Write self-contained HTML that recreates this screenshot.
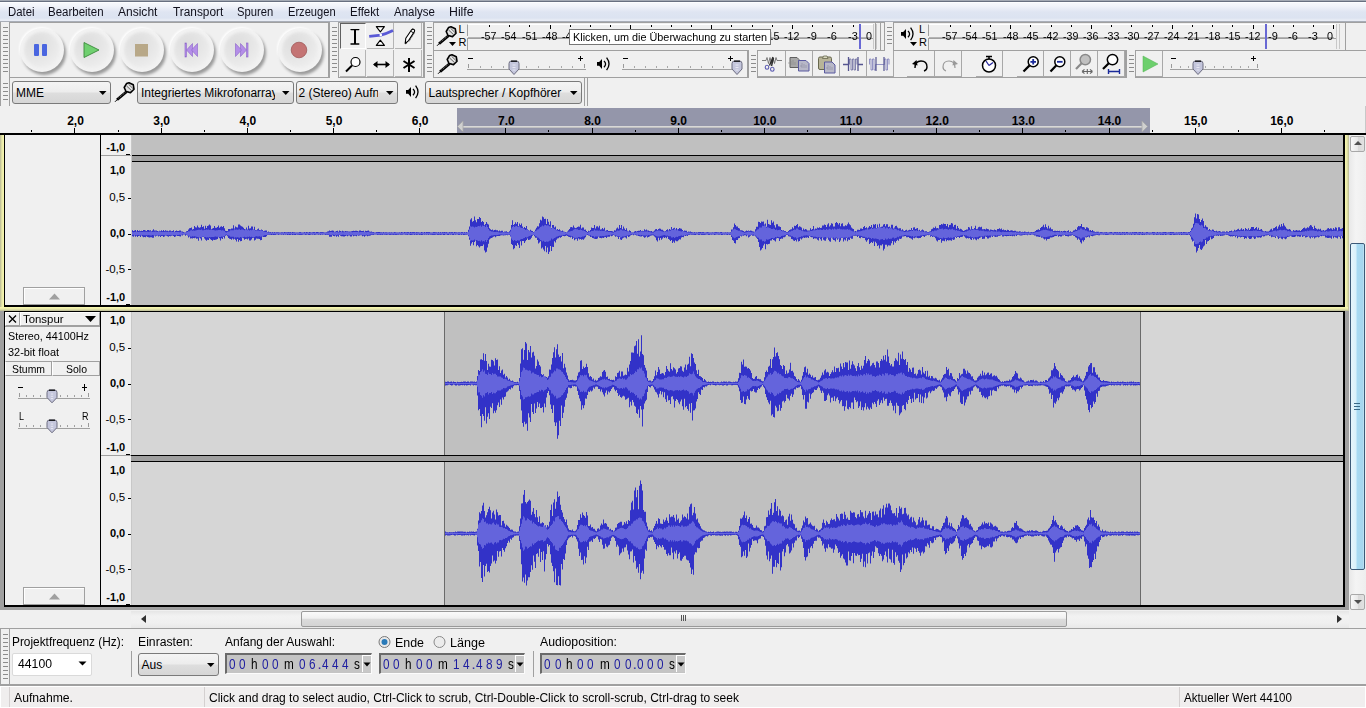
<!DOCTYPE html><html><head><meta charset="utf-8"><style>
html,body{margin:0;padding:0;}
body{width:1366px;height:708px;overflow:hidden;position:relative;background:#f0f0f0;font-family:"Liberation Sans",sans-serif;}
div{position:absolute;box-sizing:border-box;}
.t{white-space:nowrap;line-height:1;transform-origin:0 0;}
svg{position:absolute;}
</style></head><body>
<div style="left:0px;top:0px;width:1366px;height:22px;background:linear-gradient(#fbfcfe 0px,#f1f4fa 6px,#dfe5f2 12px,#dce3f1 18px,#e8ecf5 20px)"></div>
<div style="left:0px;top:0px;width:1366px;height:1px;background:#a4aab4"></div>
<div style="left:0px;top:1px;width:1366px;height:1px;background:#687080"></div>
<div style="left:0px;top:2px;width:1366px;height:1px;background:#fdfeff"></div>
<div style="left:0px;top:21px;width:1366px;height:1px;background:#a9aeb8"></div>
<div class="t" style="left:7.50px;top:5.84px;font-size:12px;color:#10101c;transform:scaleX(0.9459);">Datei</div>
<div class="t" style="left:48.00px;top:5.84px;font-size:12px;color:#10101c;transform:scaleX(0.9579);">Bearbeiten</div>
<div class="t" style="left:118.40px;top:5.84px;font-size:12px;color:#10101c;transform:scaleX(1.0012);">Ansicht</div>
<div class="t" style="left:172.50px;top:5.84px;font-size:12px;color:#10101c;transform:scaleX(0.9881);">Transport</div>
<div class="t" style="left:237.20px;top:5.84px;font-size:12px;color:#10101c;transform:scaleX(0.9355);">Spuren</div>
<div class="t" style="left:288.00px;top:5.84px;font-size:12px;color:#10101c;transform:scaleX(0.9266);">Erzeugen</div>
<div class="t" style="left:350.30px;top:5.84px;font-size:12px;color:#10101c;transform:scaleX(0.9585);">Effekt</div>
<div class="t" style="left:394.20px;top:5.84px;font-size:12px;color:#10101c;transform:scaleX(0.9557);">Analyse</div>
<div class="t" style="left:449.40px;top:5.84px;font-size:12px;color:#10101c;transform:scaleX(1.0247);">Hilfe</div>
<div style="left:0px;top:22px;width:1366px;height:84px;background:#f0f0f0"></div>
<div style="left:0px;top:22px;width:1366px;height:1px;background:#a0a0a0"></div>
<div style="left:0px;top:77px;width:1366px;height:1px;background:#a0a0a0"></div>
<div style="left:0px;top:105.5px;width:1366px;height:1px;background:#a0a0a0"></div>
<div style="left:0px;top:22px;width:10px;height:56px;border-left:1px solid #a0a0a0;border-right:1px solid #a0a0a0;box-sizing:border-box;background:#f0f0f0"></div>
<div style="left:3px;top:27px;width:5px;height:1px;background:#8c8c8c"></div>
<div style="left:3px;top:31px;width:5px;height:1px;background:#8c8c8c"></div>
<div style="left:3px;top:35px;width:5px;height:1px;background:#8c8c8c"></div>
<div style="left:3px;top:39px;width:5px;height:1px;background:#8c8c8c"></div>
<div style="left:3px;top:43px;width:5px;height:1px;background:#8c8c8c"></div>
<div style="left:3px;top:47px;width:5px;height:1px;background:#8c8c8c"></div>
<div style="left:3px;top:51px;width:5px;height:1px;background:#8c8c8c"></div>
<div style="left:3px;top:55px;width:5px;height:1px;background:#8c8c8c"></div>
<div style="left:3px;top:59px;width:5px;height:1px;background:#8c8c8c"></div>
<div style="left:3px;top:63px;width:5px;height:1px;background:#8c8c8c"></div>
<div style="left:3px;top:67px;width:5px;height:1px;background:#8c8c8c"></div>
<div style="left:3px;top:71px;width:5px;height:1px;background:#8c8c8c"></div>
<div style="left:328px;top:22px;width:1px;height:56px;background:#a0a0a0"></div>
<div style="left:19.5px;top:27.5px;width:44px;height:44px;border-radius:50%;background:#f2f2f2;box-shadow:2px 3px 3px rgba(0,0,0,0.36), -1px -1px 2px rgba(255,255,255,0.9);filter:blur(0.7px)"></div>
<div style="left:23.5px;top:31.5px;width:36px;height:36px;border-radius:50%;background:radial-gradient(circle at 35% 30%,#dedede 0,#e6e6e6 45%,#f0f0f0 85%);filter:blur(1px)"></div>
<div style="left:69.5px;top:27.5px;width:44px;height:44px;border-radius:50%;background:#f2f2f2;box-shadow:2px 3px 3px rgba(0,0,0,0.36), -1px -1px 2px rgba(255,255,255,0.9);filter:blur(0.7px)"></div>
<div style="left:73.5px;top:31.5px;width:36px;height:36px;border-radius:50%;background:radial-gradient(circle at 35% 30%,#dedede 0,#e6e6e6 45%,#f0f0f0 85%);filter:blur(1px)"></div>
<div style="left:119.5px;top:27.5px;width:44px;height:44px;border-radius:50%;background:#f2f2f2;box-shadow:2px 3px 3px rgba(0,0,0,0.36), -1px -1px 2px rgba(255,255,255,0.9);filter:blur(0.7px)"></div>
<div style="left:123.5px;top:31.5px;width:36px;height:36px;border-radius:50%;background:radial-gradient(circle at 35% 30%,#dedede 0,#e6e6e6 45%,#f0f0f0 85%);filter:blur(1px)"></div>
<div style="left:169.5px;top:27.5px;width:44px;height:44px;border-radius:50%;background:#f2f2f2;box-shadow:2px 3px 3px rgba(0,0,0,0.36), -1px -1px 2px rgba(255,255,255,0.9);filter:blur(0.7px)"></div>
<div style="left:173.5px;top:31.5px;width:36px;height:36px;border-radius:50%;background:radial-gradient(circle at 35% 30%,#dedede 0,#e6e6e6 45%,#f0f0f0 85%);filter:blur(1px)"></div>
<div style="left:219.5px;top:27.5px;width:44px;height:44px;border-radius:50%;background:#f2f2f2;box-shadow:2px 3px 3px rgba(0,0,0,0.36), -1px -1px 2px rgba(255,255,255,0.9);filter:blur(0.7px)"></div>
<div style="left:223.5px;top:31.5px;width:36px;height:36px;border-radius:50%;background:radial-gradient(circle at 35% 30%,#dedede 0,#e6e6e6 45%,#f0f0f0 85%);filter:blur(1px)"></div>
<div style="left:277.5px;top:27.5px;width:44px;height:44px;border-radius:50%;background:#f2f2f2;box-shadow:2px 3px 3px rgba(0,0,0,0.36), -1px -1px 2px rgba(255,255,255,0.9);filter:blur(0.7px)"></div>
<div style="left:281.5px;top:31.5px;width:36px;height:36px;border-radius:50%;background:radial-gradient(circle at 35% 30%,#dedede 0,#e6e6e6 45%,#f0f0f0 85%);filter:blur(1px)"></div>
<div style="left:34px;top:44px;width:5px;height:12px;background:#4a66e0;border-radius:1px"></div>
<div style="left:42px;top:44px;width:5px;height:12px;background:#4a66e0;border-radius:1px"></div>
<svg style="left:0;top:0" width="330" height="78"><polygon points="84,42.5 99,50 84,57.5" fill="#70d070" stroke="#3a8a3a" stroke-width="0.9"/><rect x="135" y="44" width="13" height="12.5" fill="#b8a888"/><g fill="#b48ee8" stroke="#8a62c8" stroke-width="0.6"><rect x="185" y="43" width="1.4" height="14"/><polygon points="186.5,50 192.5,43.5 192.5,56.5"/><polygon points="191.5,50 197.5,43.5 197.5,56.5"/><rect x="246.6" y="43" width="1.4" height="14"/><polygon points="246.5,50 240.5,43.5 240.5,56.5"/><polygon points="241.5,50 235.5,43.5 235.5,56.5"/></g><circle cx="299" cy="50" r="7.8" fill="#c47474" stroke="#9a5050" stroke-width="0.7"/></svg>
<div style="left:329px;top:22px;width:10px;height:56px;border-left:1px solid #a0a0a0;border-right:1px solid #a0a0a0;box-sizing:border-box;background:#f0f0f0"></div>
<div style="left:332px;top:27px;width:5px;height:1px;background:#8c8c8c"></div>
<div style="left:332px;top:31px;width:5px;height:1px;background:#8c8c8c"></div>
<div style="left:332px;top:35px;width:5px;height:1px;background:#8c8c8c"></div>
<div style="left:332px;top:39px;width:5px;height:1px;background:#8c8c8c"></div>
<div style="left:332px;top:43px;width:5px;height:1px;background:#8c8c8c"></div>
<div style="left:332px;top:47px;width:5px;height:1px;background:#8c8c8c"></div>
<div style="left:332px;top:51px;width:5px;height:1px;background:#8c8c8c"></div>
<div style="left:332px;top:55px;width:5px;height:1px;background:#8c8c8c"></div>
<div style="left:332px;top:59px;width:5px;height:1px;background:#8c8c8c"></div>
<div style="left:332px;top:63px;width:5px;height:1px;background:#8c8c8c"></div>
<div style="left:332px;top:67px;width:5px;height:1px;background:#8c8c8c"></div>
<div style="left:332px;top:71px;width:5px;height:1px;background:#8c8c8c"></div>
<div style="left:423px;top:22px;width:1px;height:56px;background:#a0a0a0"></div>
<div style="left:340px;top:23px;width:26px;height:26px;background:#f0f0f0;border-left:1px solid #606060;border-top:1px solid #606060;border-right:1px solid #fff;border-bottom:1px solid #fff"></div>
<div style="left:340px;top:50px;width:26px;height:27px;background:#f0f0f0;border-right:1px solid #b4b4b4;border-bottom:1px solid #b4b4b4"></div>
<div style="left:367px;top:23px;width:27px;height:26px;background:#f0f0f0;border-right:1px solid #b4b4b4;border-bottom:1px solid #b4b4b4"></div>
<div style="left:367px;top:50px;width:27px;height:27px;background:#f0f0f0;border-right:1px solid #b4b4b4;border-bottom:1px solid #b4b4b4"></div>
<div style="left:395px;top:23px;width:27px;height:26px;background:#f0f0f0;border-right:1px solid #b4b4b4;border-bottom:1px solid #b4b4b4"></div>
<div style="left:395px;top:50px;width:27px;height:27px;background:#f0f0f0;border-right:1px solid #b4b4b4;border-bottom:1px solid #b4b4b4"></div>
<svg style="left:0;top:0" width="430" height="78"><path d="M351,29.6 H358.8 M351,44 H358.8" stroke="#000" stroke-width="1.4" stroke-linecap="round"/><path d="M355,29.6 V44" stroke="#000" stroke-width="2"/><path d="M376.3,26.6 H384.4 L380.35,31.8 z M376.3,45.4 H384.4 L380.35,40.2 z" fill="#fff" stroke="#000" stroke-width="1.1" stroke-linejoin="round"/><path d="M369.2,36.4 L380.8,35.2 Q386,34 393,30.6" stroke="#5a5ad6" stroke-width="2.8" fill="none"/><circle cx="380.8" cy="35" r="1.3" fill="#fff"/><path d="M405.8,44.6 L410.3,37.4 L415,31 L412.5,28.6 L406.8,37.6 L405.2,42.4 z" fill="#000"/><path d="M405.2,43.4 L405.8,38.2 L411.6,29.8 Q412.8,28.4 414.2,29.6 Q415,30.6 414.4,31.6 L408.6,40.6 z" fill="#fff" stroke="#000" stroke-width="1.1" stroke-linejoin="round"/><path d="M410.8,31.2 L413.6,33" stroke="#000" stroke-width="0.9"/><path d="M409.2,41.4 L414.8,32.4" stroke="#555" stroke-width="0.8" stroke-dasharray="1 0.8"/><circle cx="355.5" cy="62" r="4.5" fill="#fff" stroke="#000" stroke-width="1.2"/><path d="M352,65.5 L346,71.5" stroke="#000" stroke-width="2"/><path d="M374,64.5 H389" stroke="#000" stroke-width="1.6"/><path d="M373,64.5 l4.5,-3.5 v7 z M390,64.5 l-4.5,-3.5 v7 z" fill="#000"/><path d="M409,58 V72 M403.5,61 L414.5,68 M414.5,61 L403.5,68" stroke="#000" stroke-width="2"/></svg>
<div style="left:424px;top:22px;width:10px;height:29px;border-left:1px solid #a0a0a0;border-right:1px solid #a0a0a0;box-sizing:border-box;background:#f0f0f0"></div>
<div style="left:427px;top:27px;width:5px;height:1px;background:#8c8c8c"></div>
<div style="left:427px;top:31px;width:5px;height:1px;background:#8c8c8c"></div>
<div style="left:427px;top:35px;width:5px;height:1px;background:#8c8c8c"></div>
<div style="left:427px;top:39px;width:5px;height:1px;background:#8c8c8c"></div>
<div style="left:427px;top:43px;width:5px;height:1px;background:#8c8c8c"></div>
<div style="left:424px;top:50px;width:942px;height:1px;background:#a0a0a0"></div>
<svg style="left:432px;top:22px" width="30" height="28" viewBox="0 0 30 28"><path d="M5,23.8 L7.5,21.3" stroke="#000" stroke-width="1"/><path d="M7,21.8 L16.5,13.8" stroke="#000" stroke-width="2.8"/><path d="M8.5,20 L15.5,14.2" stroke="#c8c8c8" stroke-width="0.7" stroke-dasharray="1 1"/><path d="M19,4.8 L23.3,6.8 L24,11.2 L20.5,14.6 L16,13.5 L14.2,9.5 L16.5,5.6 z" fill="#d8d8d8" stroke="#000" stroke-width="1.6" stroke-linejoin="round"/><path d="M16.6,8 L21.6,12.6 M18.6,6.3 L23,10.6" stroke="#707070" stroke-width="1"/><path d="M16,9.6 L20,13.2 M18,7.3 L22.3,11.4" stroke="#f8f8f8" stroke-width="0.7"/></svg>
<div class="t" style="left:458.50px;top:23.69px;font-size:11px;color:#000;">L</div>
<div class="t" style="left:458.50px;top:37.49px;font-size:11px;color:#000;">R</div>
<svg style="left:449px;top:42px" width="8" height="6"><path d="M0,0 H7 L3.5,4 z" fill="#000"/></svg>
<div style="left:467px;top:24px;width:406px;height:12px;border-left:1px solid #a0a0a0;border-top:1px solid #fff"></div>
<div style="left:467px;top:37.5px;width:406px;height:12px;border-left:1px solid #a0a0a0;border-top:1px solid #a0a0a0"></div>
<div style="left:468px;top:37px;width:403px;height:1px;background:#b4b4b4"></div>
<div style="left:873px;top:25px;width:1px;height:4px;background:#000"></div>
<div style="left:853px;top:25px;width:1px;height:2px;background:#000"></div>
<div style="left:832px;top:25px;width:1px;height:2px;background:#000"></div>
<div style="left:812px;top:25px;width:1px;height:2px;background:#000"></div>
<div style="left:792px;top:25px;width:1px;height:4px;background:#000"></div>
<div style="left:772px;top:25px;width:1px;height:2px;background:#000"></div>
<div style="left:752px;top:25px;width:1px;height:2px;background:#000"></div>
<div style="left:731px;top:25px;width:1px;height:2px;background:#000"></div>
<div style="left:711px;top:25px;width:1px;height:4px;background:#000"></div>
<div style="left:691px;top:25px;width:1px;height:2px;background:#000"></div>
<div style="left:671px;top:25px;width:1px;height:2px;background:#000"></div>
<div style="left:651px;top:25px;width:1px;height:2px;background:#000"></div>
<div style="left:630px;top:25px;width:1px;height:4px;background:#000"></div>
<div style="left:610px;top:25px;width:1px;height:2px;background:#000"></div>
<div style="left:590px;top:25px;width:1px;height:2px;background:#000"></div>
<div style="left:570px;top:25px;width:1px;height:2px;background:#000"></div>
<div style="left:550px;top:25px;width:1px;height:4px;background:#000"></div>
<div style="left:529px;top:25px;width:1px;height:2px;background:#000"></div>
<div style="left:509px;top:25px;width:1px;height:2px;background:#000"></div>
<div style="left:489px;top:25px;width:1px;height:2px;background:#000"></div>
<div class="t" style="left:481.22px;top:31.29px;font-size:11px;color:#000;transform:scaleX(0.9686);">-57</div>
<div class="t" style="left:501.42px;top:31.29px;font-size:11px;color:#000;transform:scaleX(0.9686);">-54</div>
<div class="t" style="left:521.62px;top:31.29px;font-size:11px;color:#000;transform:scaleX(0.9686);">-51</div>
<div class="t" style="left:541.82px;top:31.29px;font-size:11px;color:#000;transform:scaleX(0.9686);">-48</div>
<div class="t" style="left:562.02px;top:31.29px;font-size:11px;color:#000;transform:scaleX(0.9686);">-45</div>
<div class="t" style="left:582.21px;top:31.29px;font-size:11px;color:#000;transform:scaleX(0.9686);">-42</div>
<div class="t" style="left:602.41px;top:31.29px;font-size:11px;color:#000;transform:scaleX(0.9686);">-39</div>
<div class="t" style="left:622.61px;top:31.29px;font-size:11px;color:#000;transform:scaleX(0.9686);">-36</div>
<div class="t" style="left:642.81px;top:31.29px;font-size:11px;color:#000;transform:scaleX(0.9686);">-33</div>
<div class="t" style="left:663.01px;top:31.29px;font-size:11px;color:#000;transform:scaleX(0.9686);">-30</div>
<div class="t" style="left:683.21px;top:31.29px;font-size:11px;color:#000;transform:scaleX(0.9686);">-27</div>
<div class="t" style="left:703.41px;top:31.29px;font-size:11px;color:#000;transform:scaleX(0.9686);">-24</div>
<div class="t" style="left:723.61px;top:31.29px;font-size:11px;color:#000;transform:scaleX(0.9686);">-21</div>
<div class="t" style="left:743.81px;top:31.29px;font-size:11px;color:#000;transform:scaleX(0.9686);">-18</div>
<div class="t" style="left:764.00px;top:31.29px;font-size:11px;color:#000;transform:scaleX(0.9686);">-15</div>
<div class="t" style="left:784.20px;top:31.29px;font-size:11px;color:#000;transform:scaleX(0.9686);">-12</div>
<div class="t" style="left:807.20px;top:31.29px;font-size:11px;color:#000;transform:scaleX(1.0019);">-9</div>
<div class="t" style="left:827.40px;top:31.29px;font-size:11px;color:#000;transform:scaleX(1.0019);">-6</div>
<div class="t" style="left:847.60px;top:31.29px;font-size:11px;color:#000;transform:scaleX(1.0019);">-3</div>
<div class="t" style="left:866.20px;top:31.29px;font-size:11px;color:#000;transform:scaleX(0.9807);">0</div>
<div style="left:859px;top:24px;width:2px;height:25px;background:#6868d4"></div>
<div style="left:873px;top:24px;width:1px;height:25px;background:#c8c8c8"></div>
<div style="left:876px;top:24px;width:1px;height:25px;background:#c8c8c8"></div>
<div style="left:875px;top:22px;width:1px;height:28px;background:#a0a0a0"></div>
<div style="left:880px;top:22px;width:1px;height:28px;background:#a0a0a0"></div>
<div style="left:884px;top:22px;width:10px;height:29px;border-left:1px solid #a0a0a0;border-right:1px solid #a0a0a0;box-sizing:border-box;background:#f0f0f0"></div>
<div style="left:887px;top:27px;width:5px;height:1px;background:#8c8c8c"></div>
<div style="left:887px;top:31px;width:5px;height:1px;background:#8c8c8c"></div>
<div style="left:887px;top:35px;width:5px;height:1px;background:#8c8c8c"></div>
<div style="left:887px;top:39px;width:5px;height:1px;background:#8c8c8c"></div>
<div style="left:887px;top:43px;width:5px;height:1px;background:#8c8c8c"></div>
<svg style="left:899px;top:26.2px" width="18" height="17" viewBox="-2 -3 18 17"><path d="M0,3.1 H2.2 L5,0 V9.9 L2.2,6.8 H0 z" fill="#000"/><path d="M7,2 Q10.2,5 7,8.2 M9.6,-1.3 Q14.4,4.95 9.6,11.2" stroke="#000" stroke-width="1.3" fill="none"/></svg>
<div class="t" style="left:919.00px;top:23.69px;font-size:11px;color:#000;">L</div>
<div class="t" style="left:919.00px;top:37.49px;font-size:11px;color:#000;">R</div>
<svg style="left:910px;top:42px" width="8" height="6"><path d="M0,0 H7 L3.5,4 z" fill="#000"/></svg>
<div style="left:928px;top:24px;width:408px;height:12px;border-left:1px solid #a0a0a0;border-top:1px solid #fff"></div>
<div style="left:928px;top:37.5px;width:408px;height:12px;border-left:1px solid #a0a0a0;border-top:1px solid #a0a0a0"></div>
<div style="left:929px;top:37px;width:405px;height:1px;background:#b4b4b4"></div>
<div style="left:1333px;top:25px;width:1px;height:4px;background:#000"></div>
<div style="left:1313px;top:25px;width:1px;height:2px;background:#000"></div>
<div style="left:1293px;top:25px;width:1px;height:2px;background:#000"></div>
<div style="left:1273px;top:25px;width:1px;height:2px;background:#000"></div>
<div style="left:1253px;top:25px;width:1px;height:4px;background:#000"></div>
<div style="left:1232px;top:25px;width:1px;height:2px;background:#000"></div>
<div style="left:1212px;top:25px;width:1px;height:2px;background:#000"></div>
<div style="left:1192px;top:25px;width:1px;height:2px;background:#000"></div>
<div style="left:1172px;top:25px;width:1px;height:4px;background:#000"></div>
<div style="left:1152px;top:25px;width:1px;height:2px;background:#000"></div>
<div style="left:1131px;top:25px;width:1px;height:2px;background:#000"></div>
<div style="left:1111px;top:25px;width:1px;height:2px;background:#000"></div>
<div style="left:1091px;top:25px;width:1px;height:4px;background:#000"></div>
<div style="left:1071px;top:25px;width:1px;height:2px;background:#000"></div>
<div style="left:1051px;top:25px;width:1px;height:2px;background:#000"></div>
<div style="left:1030px;top:25px;width:1px;height:2px;background:#000"></div>
<div style="left:1010px;top:25px;width:1px;height:4px;background:#000"></div>
<div style="left:990px;top:25px;width:1px;height:2px;background:#000"></div>
<div style="left:970px;top:25px;width:1px;height:2px;background:#000"></div>
<div style="left:950px;top:25px;width:1px;height:2px;background:#000"></div>
<div class="t" style="left:941.92px;top:31.29px;font-size:11px;color:#000;transform:scaleX(0.9686);">-57</div>
<div class="t" style="left:962.12px;top:31.29px;font-size:11px;color:#000;transform:scaleX(0.9686);">-54</div>
<div class="t" style="left:982.32px;top:31.29px;font-size:11px;color:#000;transform:scaleX(0.9686);">-51</div>
<div class="t" style="left:1002.52px;top:31.29px;font-size:11px;color:#000;transform:scaleX(0.9686);">-48</div>
<div class="t" style="left:1022.72px;top:31.29px;font-size:11px;color:#000;transform:scaleX(0.9686);">-45</div>
<div class="t" style="left:1042.91px;top:31.29px;font-size:11px;color:#000;transform:scaleX(0.9686);">-42</div>
<div class="t" style="left:1063.11px;top:31.29px;font-size:11px;color:#000;transform:scaleX(0.9686);">-39</div>
<div class="t" style="left:1083.31px;top:31.29px;font-size:11px;color:#000;transform:scaleX(0.9686);">-36</div>
<div class="t" style="left:1103.51px;top:31.29px;font-size:11px;color:#000;transform:scaleX(0.9686);">-33</div>
<div class="t" style="left:1123.71px;top:31.29px;font-size:11px;color:#000;transform:scaleX(0.9686);">-30</div>
<div class="t" style="left:1143.91px;top:31.29px;font-size:11px;color:#000;transform:scaleX(0.9686);">-27</div>
<div class="t" style="left:1164.11px;top:31.29px;font-size:11px;color:#000;transform:scaleX(0.9686);">-24</div>
<div class="t" style="left:1184.31px;top:31.29px;font-size:11px;color:#000;transform:scaleX(0.9686);">-21</div>
<div class="t" style="left:1204.51px;top:31.29px;font-size:11px;color:#000;transform:scaleX(0.9686);">-18</div>
<div class="t" style="left:1224.71px;top:31.29px;font-size:11px;color:#000;transform:scaleX(0.9686);">-15</div>
<div class="t" style="left:1244.90px;top:31.29px;font-size:11px;color:#000;transform:scaleX(0.9686);">-12</div>
<div class="t" style="left:1267.90px;top:31.29px;font-size:11px;color:#000;transform:scaleX(1.0019);">-9</div>
<div class="t" style="left:1288.10px;top:31.29px;font-size:11px;color:#000;transform:scaleX(1.0019);">-6</div>
<div class="t" style="left:1308.30px;top:31.29px;font-size:11px;color:#000;transform:scaleX(1.0019);">-3</div>
<div class="t" style="left:1326.90px;top:31.29px;font-size:11px;color:#000;transform:scaleX(0.9807);">0</div>
<div style="left:1265px;top:24px;width:2px;height:25px;background:#6868d4"></div>
<div style="left:1336px;top:24px;width:1px;height:25px;background:#c8c8c8"></div>
<div style="left:1339px;top:24px;width:1px;height:25px;background:#c8c8c8"></div>
<div style="left:1345px;top:22px;width:1px;height:28px;background:#a0a0a0"></div>
<div style="left:424px;top:50px;width:10px;height:28px;border-left:1px solid #a0a0a0;border-right:1px solid #a0a0a0;box-sizing:border-box;background:#f0f0f0"></div>
<div style="left:427px;top:55px;width:5px;height:1px;background:#8c8c8c"></div>
<div style="left:427px;top:59px;width:5px;height:1px;background:#8c8c8c"></div>
<div style="left:427px;top:63px;width:5px;height:1px;background:#8c8c8c"></div>
<div style="left:427px;top:67px;width:5px;height:1px;background:#8c8c8c"></div>
<div style="left:427px;top:71px;width:5px;height:1px;background:#8c8c8c"></div>
<svg style="left:433px;top:50px" width="30" height="28" viewBox="0 0 30 28"><path d="M5,23.8 L7.5,21.3" stroke="#000" stroke-width="1"/><path d="M7,21.8 L16.5,13.8" stroke="#000" stroke-width="2.8"/><path d="M8.5,20 L15.5,14.2" stroke="#c8c8c8" stroke-width="0.7" stroke-dasharray="1 1"/><path d="M19,4.8 L23.3,6.8 L24,11.2 L20.5,14.6 L16,13.5 L14.2,9.5 L16.5,5.6 z" fill="#d8d8d8" stroke="#000" stroke-width="1.6" stroke-linejoin="round"/><path d="M16.6,8 L21.6,12.6 M18.6,6.3 L23,10.6" stroke="#707070" stroke-width="1"/><path d="M16,9.6 L20,13.2 M18,7.3 L22.3,11.4" stroke="#f8f8f8" stroke-width="0.7"/></svg>
<div style="left:468px;top:58px;width:5px;height:1px;background:#000"></div>
<div style="left:578px;top:58px;width:5px;height:1px;background:#000"></div>
<div style="left:580px;top:56px;width:1px;height:5px;background:#000"></div>
<div style="left:467px;top:69px;width:119px;height:1.2px;background:#a0a0a0"></div>
<div style="left:468px;top:64px;width:1px;height:4px;background:#9a9a9a"></div>
<div style="left:480px;top:66px;width:1px;height:2px;background:#a8a8a8"></div>
<div style="left:491px;top:66px;width:1px;height:2px;background:#a8a8a8"></div>
<div style="left:503px;top:66px;width:1px;height:2px;background:#a8a8a8"></div>
<div style="left:514px;top:66px;width:1px;height:2px;background:#a8a8a8"></div>
<div style="left:526px;top:66px;width:1px;height:2px;background:#a8a8a8"></div>
<div style="left:538px;top:66px;width:1px;height:2px;background:#a8a8a8"></div>
<div style="left:549px;top:66px;width:1px;height:2px;background:#a8a8a8"></div>
<div style="left:561px;top:66px;width:1px;height:2px;background:#a8a8a8"></div>
<div style="left:572px;top:66px;width:1px;height:2px;background:#a8a8a8"></div>
<div style="left:584px;top:64px;width:1px;height:4px;background:#9a9a9a"></div>
<svg style="left:507.79999999999995px;top:60px" width="12" height="16" viewBox="0 0 12 16"><path d="M1,3.5 Q1,1 3.5,1 H8.5 Q11,1 11,3.5 V9 L6,14.5 L1,9 z" fill="#c4c6dc" stroke="#6c6c80" stroke-width="1"/><path d="M3,1.2 H9" stroke="#000" stroke-width="1.2"/><path d="M4.5,5 h3 M4.5,7.5 h3 M4.5,10 h3" stroke="#f0f0f8" stroke-width="0.8"/></svg>
<svg style="left:594.6px;top:56px" width="18" height="17" viewBox="-2 -3 18 17"><path d="M0,3.1 H2.2 L5,0 V9.9 L2.2,6.8 H0 z" fill="#000"/><path d="M7,2 Q10.2,5 7,8.2 M9.6,-1.3 Q14.4,4.95 9.6,11.2" stroke="#000" stroke-width="1.3" fill="none"/></svg>
<div style="left:623px;top:58px;width:5px;height:1px;background:#000"></div>
<div style="left:728px;top:58px;width:5px;height:1px;background:#000"></div>
<div style="left:730px;top:56px;width:1px;height:5px;background:#000"></div>
<div style="left:622px;top:69px;width:114px;height:1.2px;background:#a0a0a0"></div>
<div style="left:623px;top:64px;width:1px;height:4px;background:#9a9a9a"></div>
<div style="left:634px;top:66px;width:1px;height:2px;background:#a8a8a8"></div>
<div style="left:645px;top:66px;width:1px;height:2px;background:#a8a8a8"></div>
<div style="left:656px;top:66px;width:1px;height:2px;background:#a8a8a8"></div>
<div style="left:667px;top:66px;width:1px;height:2px;background:#a8a8a8"></div>
<div style="left:678px;top:66px;width:1px;height:2px;background:#a8a8a8"></div>
<div style="left:690px;top:66px;width:1px;height:2px;background:#a8a8a8"></div>
<div style="left:701px;top:66px;width:1px;height:2px;background:#a8a8a8"></div>
<div style="left:712px;top:66px;width:1px;height:2px;background:#a8a8a8"></div>
<div style="left:723px;top:66px;width:1px;height:2px;background:#a8a8a8"></div>
<div style="left:734px;top:64px;width:1px;height:4px;background:#9a9a9a"></div>
<svg style="left:731px;top:60px" width="12" height="16" viewBox="0 0 12 16"><path d="M1,3.5 Q1,1 3.5,1 H8.5 Q11,1 11,3.5 V9 L6,14.5 L1,9 z" fill="#c4c6dc" stroke="#6c6c80" stroke-width="1"/><path d="M3,1.2 H9" stroke="#000" stroke-width="1.2"/><path d="M4.5,5 h3 M4.5,7.5 h3 M4.5,10 h3" stroke="#f0f0f8" stroke-width="0.8"/></svg>
<div style="left:747px;top:50px;width:1px;height:28px;background:#a0a0a0"></div>
<div style="left:748px;top:50px;width:10px;height:28px;border-left:1px solid #a0a0a0;border-right:1px solid #a0a0a0;box-sizing:border-box;background:#f0f0f0"></div>
<div style="left:751px;top:55px;width:5px;height:1px;background:#8c8c8c"></div>
<div style="left:751px;top:59px;width:5px;height:1px;background:#8c8c8c"></div>
<div style="left:751px;top:63px;width:5px;height:1px;background:#8c8c8c"></div>
<div style="left:751px;top:67px;width:5px;height:1px;background:#8c8c8c"></div>
<div style="left:751px;top:71px;width:5px;height:1px;background:#8c8c8c"></div>
<div style="left:758px;top:51px;width:28px;height:26px;background:#f0f0f0;border-right:1px solid #a8a8a8;border-bottom:1px solid #a8a8a8"></div>
<div style="left:786px;top:51px;width:27px;height:26px;background:#f0f0f0;border-right:1px solid #a8a8a8;border-bottom:1px solid #a8a8a8"></div>
<div style="left:813px;top:51px;width:27px;height:26px;background:#f0f0f0;border-right:1px solid #a8a8a8;border-bottom:1px solid #a8a8a8"></div>
<div style="left:840px;top:51px;width:27px;height:26px;background:#f0f0f0;border-right:1px solid #a8a8a8;border-bottom:1px solid #a8a8a8"></div>
<div style="left:867px;top:51px;width:27px;height:26px;background:#f0f0f0;border-right:1px solid #a8a8a8;border-bottom:1px solid #a8a8a8"></div>
<div style="left:907px;top:51px;width:28px;height:26px;background:#f0f0f0;border-right:1px solid #a8a8a8;border-bottom:1px solid #a8a8a8"></div>
<div style="left:935px;top:51px;width:27px;height:26px;background:#f0f0f0;border-right:1px solid #a8a8a8;border-bottom:1px solid #a8a8a8"></div>
<div style="left:976px;top:51px;width:27px;height:26px;background:#f0f0f0;border-right:1px solid #a8a8a8;border-bottom:1px solid #a8a8a8"></div>
<div style="left:1017px;top:51px;width:27px;height:26px;background:#f0f0f0;border-right:1px solid #a8a8a8;border-bottom:1px solid #a8a8a8"></div>
<div style="left:1044px;top:51px;width:27px;height:26px;background:#f0f0f0;border-right:1px solid #a8a8a8;border-bottom:1px solid #a8a8a8"></div>
<div style="left:1071px;top:51px;width:27px;height:26px;background:#f0f0f0;border-right:1px solid #a8a8a8;border-bottom:1px solid #a8a8a8"></div>
<div style="left:1098px;top:51px;width:27px;height:26px;background:#f0f0f0;border-right:1px solid #a8a8a8;border-bottom:1px solid #a8a8a8"></div>
<div style="left:1125px;top:50px;width:1px;height:28px;background:#a0a0a0"></div>
<svg style="left:0;top:0" width="1366" height="80"><path d="M762,60.5 h4 l1,-3 l1.5,6 l1.5,-6 l1.5,6 l1.5,-6 l1.5,6 l1.5,-6 l1,3 h5" stroke="#606060" stroke-width="0.8" fill="none"/><path d="M773,57 L769.5,65.5 M773.5,58 L771.5,66" stroke="#303030" stroke-width="1.4"/><ellipse cx="767" cy="67.3" rx="1.8" ry="2" fill="none" stroke="#5a5ab0" stroke-width="1.1"/><ellipse cx="772.3" cy="69.3" rx="1.8" ry="2" fill="none" stroke="#5a5ab0" stroke-width="1.1"/><path d="M790,57.5 H797 L799,59.5 V67.5 H790 z" fill="#a8a8a8" stroke="#606060" stroke-width="1"/><path d="M788,63 h3 M791,61 v4 M793,60 v5 M795,62 v3" stroke="#888" stroke-width="0.6"/><path d="M798.5,60.5 H806 L809,63.5 V71 H798.5 z" fill="#b8b8c8" stroke="#5a5aa0" stroke-width="1"/><path d="M800,66 h2 M802,63 v5 M804,64 v4 M806,65 v3" stroke="#8a8aa0" stroke-width="0.6"/><rect x="818.5" y="57" width="13" height="12.5" rx="1.5" fill="#b8b498" stroke="#68684e" stroke-width="1"/><path d="M822.5,58.5 L823.5,56 H827 L828,58.5 z" fill="#d8d8c0" stroke="#68684e" stroke-width="0.8"/><path d="M824.5,62 H832 L835,65 V73 H824.5 z" fill="#b8b8c8" stroke="#5a5aa0" stroke-width="1"/><path d="M826,68 h2 M828,65 v5 M830,66 v4 M832,67 v3" stroke="#8a8aa0" stroke-width="0.6"/><path d="M843,64.5 h5 M858,64.5 h5 M848.5,57 v14 M858,57 v14" stroke="#555590" stroke-width="1.3" fill="none"/><path d="M849.5,64.5 V59 H851 V70 H852.5 V59 H854 V70 H855.5 V59 H857 V64.5" stroke="#555590" stroke-width="0.7" fill="none"/><path d="M869.5,64.5 V59 H871 V70 H872.5 V59 H874 V70 H875.5 V64.5 H884.5 V59 H886 V70 H887.5 V59 H889 V64.5" stroke="#6a6ab0" stroke-width="0.7" fill="none"/><path d="M876,57 v14 M884,57 v14" stroke="#555590" stroke-width="1.2"/><path d="M915,68 q0,-7 6,-7 q6,0 6,6 q0,3 -3,4" stroke="#000" stroke-width="1.4" fill="none"/><path d="M912,64 l4.5,-4 l1,5.5 z" fill="#000"/><path d="M955,68 q0,-7 -6,-7 q-6,0 -6,6 q0,3 3,4" stroke="#999" stroke-width="1.2" fill="none"/><path d="M958,64 l-4.5,-4 l-1,5.5 z" fill="#999"/><circle cx="989" cy="65.5" r="6.5" fill="#fff" stroke="#000" stroke-width="1.5"/><path d="M986,56.5 h6 M989,56.5 v2.5" stroke="#000" stroke-width="1.5"/><path d="M989,65.5 L986,61 M989,65.5 L993,62.5" stroke="#2a2aa0" stroke-width="1.3"/><circle cx="1033.2" cy="61.8" r="5" fill="#fff" stroke="#000" stroke-width="1.5"/><path d="M1029.6,65.4 L1023.5,71.5" stroke="#000" stroke-width="2.2"/><path d="M1030.4,61.8 h5.6 M1033.2,59 v5.6" stroke="#1a2a9a" stroke-width="1.8"/><circle cx="1059.8" cy="61.8" r="5" fill="#fff" stroke="#000" stroke-width="1.5"/><path d="M1056.2,65.4 L1050.5,71.5" stroke="#000" stroke-width="2.2"/><path d="M1057,61.8 h5.6" stroke="#1a2a9a" stroke-width="1.8"/><circle cx="1085.3" cy="59.6" r="5.2" fill="#c0c0c0" stroke="#888" stroke-width="1.5"/><path d="M1081.6,63.3 L1076,69" stroke="#8a8a8a" stroke-width="2.2"/><path d="M1082,71.5 h10.5 M1082,71.5 l2.5,-2.2 M1082,71.5 l2.5,2.2 M1092.5,71.5 l-2.5,-2.2 M1092.5,71.5 l-2.5,2.2 M1087.3,69 v5" stroke="#666" stroke-width="1.1"/><circle cx="1112.5" cy="59.6" r="5.2" fill="#fff" stroke="#000" stroke-width="1.5"/><path d="M1108.8,63.3 L1103,69" stroke="#000" stroke-width="2.2"/><path d="M1108.5,71.5 h11 M1108.5,69 v5 M1119.5,69 v5" stroke="#1a2a9a" stroke-width="1.4"/><polygon points="1143,56 1158,64 1143,72" fill="#6ccf6c" stroke="#50b050" stroke-width="0.5"/></svg>
<div style="left:1126px;top:50px;width:10px;height:28px;border-left:1px solid #a0a0a0;border-right:1px solid #a0a0a0;box-sizing:border-box;background:#f0f0f0"></div>
<div style="left:1129px;top:55px;width:5px;height:1px;background:#8c8c8c"></div>
<div style="left:1129px;top:59px;width:5px;height:1px;background:#8c8c8c"></div>
<div style="left:1129px;top:63px;width:5px;height:1px;background:#8c8c8c"></div>
<div style="left:1129px;top:67px;width:5px;height:1px;background:#8c8c8c"></div>
<div style="left:1129px;top:71px;width:5px;height:1px;background:#8c8c8c"></div>
<div style="left:1136px;top:51px;width:27px;height:26px;background:#f0f0f0;border-right:1px solid #a8a8a8;border-bottom:1px solid #a8a8a8"></div>
<svg style="left:0;top:0" width="1366" height="80"><polygon points="1143,56 1158,64 1143,72" fill="#6ccf6c" stroke="#50b050" stroke-width="0.5"/></svg>
<div style="left:1171px;top:58px;width:5px;height:1px;background:#000"></div>
<div style="left:1251px;top:58px;width:5px;height:1px;background:#000"></div>
<div style="left:1253px;top:56px;width:1px;height:5px;background:#000"></div>
<div style="left:1170px;top:69px;width:89px;height:1.2px;background:#a0a0a0"></div>
<div style="left:1171px;top:64px;width:1px;height:4px;background:#9a9a9a"></div>
<div style="left:1180px;top:66px;width:1px;height:2px;background:#a8a8a8"></div>
<div style="left:1188px;top:66px;width:1px;height:2px;background:#a8a8a8"></div>
<div style="left:1197px;top:66px;width:1px;height:2px;background:#a8a8a8"></div>
<div style="left:1205px;top:66px;width:1px;height:2px;background:#a8a8a8"></div>
<div style="left:1214px;top:66px;width:1px;height:2px;background:#a8a8a8"></div>
<div style="left:1223px;top:66px;width:1px;height:2px;background:#a8a8a8"></div>
<div style="left:1231px;top:66px;width:1px;height:2px;background:#a8a8a8"></div>
<div style="left:1240px;top:66px;width:1px;height:2px;background:#a8a8a8"></div>
<div style="left:1248px;top:66px;width:1px;height:2px;background:#a8a8a8"></div>
<div style="left:1257px;top:64px;width:1px;height:4px;background:#9a9a9a"></div>
<svg style="left:1192px;top:60px" width="12" height="16" viewBox="0 0 12 16"><path d="M1,3.5 Q1,1 3.5,1 H8.5 Q11,1 11,3.5 V9 L6,14.5 L1,9 z" fill="#c4c6dc" stroke="#6c6c80" stroke-width="1"/><path d="M3,1.2 H9" stroke="#000" stroke-width="1.2"/><path d="M4.5,5 h3 M4.5,7.5 h3 M4.5,10 h3" stroke="#f0f0f8" stroke-width="0.8"/></svg>
<div style="left:0px;top:78px;width:10px;height:28px;border-left:1px solid #a0a0a0;border-right:1px solid #a0a0a0;box-sizing:border-box;background:#f0f0f0"></div>
<div style="left:3px;top:83px;width:5px;height:1px;background:#8c8c8c"></div>
<div style="left:3px;top:87px;width:5px;height:1px;background:#8c8c8c"></div>
<div style="left:3px;top:91px;width:5px;height:1px;background:#8c8c8c"></div>
<div style="left:3px;top:95px;width:5px;height:1px;background:#8c8c8c"></div>
<div style="left:3px;top:99px;width:5px;height:1px;background:#8c8c8c"></div>
<div style="left:587px;top:78px;width:1px;height:28px;background:#a0a0a0"></div>
<div style="left:584px;top:78px;width:1px;height:28px;background:#a0a0a0"></div>
<div style="left:12px;top:81px;width:99px;height:23px;border:1px solid #7a7a7a;border-radius:3px;background:linear-gradient(#f4f4f4 0,#ededed 45%,#dddddd 55%,#d6d6d6 100%)"></div>
<div class="t" style="left:16.00px;top:86.54px;font-size:12px;color:#000;">MME</div>
<svg style="left:99px;top:91.0px" width="9" height="6"><path d="M0,0 H7.5 L3.75,4 z" fill="#000"/></svg>
<svg style="left:110px;top:78.4px" width="30" height="28" viewBox="0 0 30 28"><path d="M5,23.8 L7.5,21.3" stroke="#000" stroke-width="1"/><path d="M7,21.8 L16.5,13.8" stroke="#000" stroke-width="2.8"/><path d="M8.5,20 L15.5,14.2" stroke="#c8c8c8" stroke-width="0.7" stroke-dasharray="1 1"/><path d="M19,4.8 L23.3,6.8 L24,11.2 L20.5,14.6 L16,13.5 L14.2,9.5 L16.5,5.6 z" fill="#d8d8d8" stroke="#000" stroke-width="1.6" stroke-linejoin="round"/><path d="M16.6,8 L21.6,12.6 M18.6,6.3 L23,10.6" stroke="#707070" stroke-width="1"/><path d="M16,9.6 L20,13.2 M18,7.3 L22.3,11.4" stroke="#f8f8f8" stroke-width="0.7"/></svg>
<div style="left:137px;top:81px;width:157px;height:23px;border:1px solid #7a7a7a;border-radius:3px;background:linear-gradient(#f4f4f4 0,#ededed 45%,#dddddd 55%,#d6d6d6 100%)"></div>
<div style="left:140px;top:82px;width:135px;height:21px;overflow:hidden">
<div class="t" style="left:1.00px;top:4.54px;font-size:12px;color:#000;">Integriertes Mikrofonarray</div>
</div>
<svg style="left:282px;top:91.0px" width="9" height="6"><path d="M0,0 H7.5 L3.75,4 z" fill="#000"/></svg>
<div style="left:295.5px;top:81px;width:102.5px;height:23px;border:1px solid #7a7a7a;border-radius:3px;background:linear-gradient(#f4f4f4 0,#ededed 45%,#dddddd 55%,#d6d6d6 100%)"></div>
<div style="left:297.5px;top:82px;width:80.5px;height:21px;overflow:hidden">
<div class="t" style="left:1.00px;top:4.54px;font-size:12px;color:#000;">2 (Stereo) Aufn</div>
</div>
<svg style="left:386px;top:91.0px" width="9" height="6"><path d="M0,0 H7.5 L3.75,4 z" fill="#000"/></svg>
<svg style="left:404px;top:84.1px" width="18" height="17" viewBox="-2 -3 18 17"><path d="M0,3.1 H2.2 L5,0 V9.9 L2.2,6.8 H0 z" fill="#000"/><path d="M7,2 Q10.2,5 7,8.2 M9.6,-1.3 Q14.4,4.95 9.6,11.2" stroke="#000" stroke-width="1.3" fill="none"/></svg>
<div style="left:424.5px;top:81px;width:157.5px;height:23px;border:1px solid #7a7a7a;border-radius:3px;background:linear-gradient(#f4f4f4 0,#ededed 45%,#dddddd 55%,#d6d6d6 100%)"></div>
<div class="t" style="left:428.50px;top:86.54px;font-size:12px;color:#000;">Lautsprecher / Kopfhörer</div>
<svg style="left:570px;top:91.0px" width="9" height="6"><path d="M0,0 H7.5 L3.75,4 z" fill="#000"/></svg>
<div style="left:0px;top:106px;width:1366px;height:28px;background:#f0f0f0"></div>
<div style="left:457px;top:108px;width:693px;height:26px;background:#9496aa"></div>
<div style="left:31px;top:130px;width:1px;height:2px;background:#000"></div>
<div style="left:74px;top:128px;width:1px;height:5px;background:#000"></div>
<div class="t" style="left:67.16px;top:114.84px;font-size:12px;font-weight:bold;color:#000;">2,0</div>
<div style="left:118px;top:130px;width:1px;height:2px;background:#000"></div>
<div style="left:161px;top:128px;width:1px;height:5px;background:#000"></div>
<div class="t" style="left:153.33px;top:114.84px;font-size:12px;font-weight:bold;color:#000;">3,0</div>
<div style="left:204px;top:130px;width:1px;height:2px;background:#000"></div>
<div style="left:247px;top:128px;width:1px;height:5px;background:#000"></div>
<div class="t" style="left:239.50px;top:114.84px;font-size:12px;font-weight:bold;color:#000;">4,0</div>
<div style="left:290px;top:130px;width:1px;height:2px;background:#000"></div>
<div style="left:333px;top:128px;width:1px;height:5px;background:#000"></div>
<div class="t" style="left:325.67px;top:114.84px;font-size:12px;font-weight:bold;color:#000;">5,0</div>
<div style="left:376px;top:130px;width:1px;height:2px;background:#000"></div>
<div style="left:419px;top:128px;width:1px;height:5px;background:#000"></div>
<div class="t" style="left:411.84px;top:114.84px;font-size:12px;font-weight:bold;color:#000;">6,0</div>
<div style="left:462px;top:130px;width:1px;height:2px;background:#000"></div>
<div style="left:505px;top:128px;width:1px;height:5px;background:#000"></div>
<div class="t" style="left:498.01px;top:114.84px;font-size:12px;font-weight:bold;color:#000;">7.0</div>
<div style="left:548px;top:130px;width:1px;height:2px;background:#000"></div>
<div style="left:592px;top:128px;width:1px;height:5px;background:#000"></div>
<div class="t" style="left:584.18px;top:114.84px;font-size:12px;font-weight:bold;color:#000;">8.0</div>
<div style="left:635px;top:130px;width:1px;height:2px;background:#000"></div>
<div style="left:678px;top:128px;width:1px;height:5px;background:#000"></div>
<div class="t" style="left:670.35px;top:114.84px;font-size:12px;font-weight:bold;color:#000;">9.0</div>
<div style="left:721px;top:130px;width:1px;height:2px;background:#000"></div>
<div style="left:764px;top:128px;width:1px;height:5px;background:#000"></div>
<div class="t" style="left:753.18px;top:114.84px;font-size:12px;font-weight:bold;color:#000;">10.0</div>
<div style="left:807px;top:130px;width:1px;height:2px;background:#000"></div>
<div style="left:850px;top:128px;width:1px;height:5px;background:#000"></div>
<div class="t" style="left:839.68px;top:114.84px;font-size:12px;font-weight:bold;color:#000;">11.0</div>
<div style="left:893px;top:130px;width:1px;height:2px;background:#000"></div>
<div style="left:936px;top:128px;width:1px;height:5px;background:#000"></div>
<div class="t" style="left:925.52px;top:114.84px;font-size:12px;font-weight:bold;color:#000;">12.0</div>
<div style="left:979px;top:130px;width:1px;height:2px;background:#000"></div>
<div style="left:1022px;top:128px;width:1px;height:5px;background:#000"></div>
<div class="t" style="left:1011.69px;top:114.84px;font-size:12px;font-weight:bold;color:#000;">13.0</div>
<div style="left:1065px;top:130px;width:1px;height:2px;background:#000"></div>
<div style="left:1109px;top:128px;width:1px;height:5px;background:#000"></div>
<div class="t" style="left:1097.86px;top:114.84px;font-size:12px;font-weight:bold;color:#000;">14.0</div>
<div style="left:1152px;top:130px;width:1px;height:2px;background:#000"></div>
<div style="left:1195px;top:128px;width:1px;height:5px;background:#000"></div>
<div class="t" style="left:1184.03px;top:114.84px;font-size:12px;font-weight:bold;color:#000;">15,0</div>
<div style="left:1238px;top:130px;width:1px;height:2px;background:#000"></div>
<div style="left:1281px;top:128px;width:1px;height:5px;background:#000"></div>
<div class="t" style="left:1270.20px;top:114.84px;font-size:12px;font-weight:bold;color:#000;">16,0</div>
<div style="left:1324px;top:130px;width:1px;height:2px;background:#000"></div>
<div style="left:462px;top:126px;width:683px;height:2px;background:#c0c0c0;border-top:1px solid #d8d8d8"></div>
<svg style="left:455px;top:118px" width="700" height="16"><polygon points="2.5,8.5 8,3 8,14" fill="#d0d0d0" stroke="#a8a8a8" stroke-width="0.8"/><polygon points="692.5,8.5 687,3 687,14" fill="#d0d0d0" stroke="#a8a8a8" stroke-width="0.8"/></svg>
<div style="left:0px;top:133px;width:1366px;height:1.6px;background:#000"></div>
<div style="left:1365px;top:106px;width:1px;height:27px;background:#c8c8c8"></div>
<div style="left:0px;top:135px;width:1349px;height:475px;background:#a0a0a0"></div>
<div style="left:0px;top:135px;width:4px;height:176px;background:linear-gradient(90deg,#b8b898,#e8e8a8 50%,#f8f8b0)"></div>
<div style="left:1345px;top:135px;width:4px;height:176px;background:linear-gradient(90deg,#f8f8b0,#e8e8a8 50%,#b8b898)"></div>
<div style="left:0px;top:307px;width:1348px;height:4px;background:linear-gradient(#f8f8b0,#e8e8a8 50%,#b8b898)"></div>
<div style="left:4px;top:135px;width:1341px;height:172px;background:#000"></div>
<div style="left:5px;top:135px;width:95px;height:170px;background:#f0f0f0"></div>
<div style="left:101px;top:135px;width:30px;height:170px;background:#f0f0f0"></div>
<div style="left:131px;top:135px;width:1212px;height:20px;background:#c0c0c0"></div>
<div style="left:101px;top:155px;width:30px;height:1px;background:#a0a0a0"></div>
<div style="left:101px;top:156px;width:30px;height:6px;background:#f0f0f0"></div>
<div style="left:131px;top:156px;width:1212px;height:5px;background:#a0a0a0"></div>
<div style="left:131px;top:162px;width:1212px;height:143px;background:#c0c0c0"></div>
<div style="left:131px;top:135px;width:1px;height:170px;background:#c8c8c8"></div>
<div style="left:23px;top:287px;width:62px;height:18px;border:1px solid #a0a0a0;background:#f0f0f0;box-shadow:inset 1px 1px 0 #fff"></div>
<svg style="left:48px;top:293px" width="13" height="8"><path d="M1,6.5 L6.5,0.5 L12,6.5 z" fill="#a0a0a0"/></svg>
<div style="left:4px;top:311px;width:1341px;height:296px;background:#000"></div>
<div style="left:5px;top:312px;width:95px;height:293px;background:#f0f0f0"></div>
<div style="left:101px;top:312px;width:30px;height:143px;background:#f0f0f0"></div>
<div style="left:101px;top:455px;width:30px;height:1px;background:#a0a0a0"></div>
<div style="left:101px;top:456px;width:30px;height:6px;background:#f0f0f0"></div>
<div style="left:101px;top:462px;width:30px;height:143px;background:#f0f0f0"></div>
<div style="left:131px;top:312px;width:1212px;height:143px;background:#d6d6d6"></div>
<div style="left:131px;top:456px;width:1212px;height:5px;background:#a0a0a0"></div>
<div style="left:131px;top:462px;width:1212px;height:143px;background:#d6d6d6"></div>
<div style="left:444px;top:312px;width:697px;height:143px;background:#c0c0c0"></div>
<div style="left:444px;top:462px;width:697px;height:143px;background:#c0c0c0"></div>
<div style="left:444px;top:312px;width:1px;height:143px;background:#6a6a6a"></div>
<div style="left:444px;top:462px;width:1px;height:143px;background:#6a6a6a"></div>
<div style="left:1140px;top:312px;width:1px;height:143px;background:#6a6a6a"></div>
<div style="left:1140px;top:462px;width:1px;height:143px;background:#6a6a6a"></div>
<div style="left:131px;top:312px;width:1px;height:143px;background:#c8c8c8"></div>
<div style="left:131px;top:462px;width:1px;height:143px;background:#c8c8c8"></div>
<div style="left:5px;top:312px;width:15px;height:14px;background:#f0f0f0;border-right:1px solid #a0a0a0;border-bottom:1px solid #a0a0a0;border-left:1px solid #fff;border-top:1px solid #fff"></div>
<div style="left:20px;top:312px;width:80px;height:14px;background:#f0f0f0;border-right:1px solid #a0a0a0;border-bottom:1px solid #a0a0a0;border-left:1px solid #fff;border-top:1px solid #fff"></div>
<svg style="left:5px;top:312px" width="95" height="14"><path d="M4,3.5 L11,10.5 M11,3.5 L4,10.5" stroke="#000" stroke-width="1.3"/><path d="M80,4 H91 L85.5,10 z" fill="#000"/></svg>
<div class="t" style="left:23.00px;top:313.69px;font-size:11px;color:#000;transform:scaleX(1.0349);">Tonspur</div>
<div style="left:5px;top:326px;width:95px;height:1px;background:#a0a0a0"></div>
<div class="t" style="left:8.00px;top:330.69px;font-size:11px;color:#000;transform:scaleX(0.9812);">Stereo, 44100Hz</div>
<div class="t" style="left:8.00px;top:346.69px;font-size:11px;color:#000;transform:scaleX(0.9929);">32-bit float</div>
<div style="left:5px;top:361px;width:47px;height:15px;background:#f0f0f0;border-right:1px solid #a0a0a0;border-bottom:1px solid #a0a0a0;border-top:1px solid #a0a0a0;border-left:1px solid #fff"></div>
<div style="left:52px;top:361px;width:48px;height:15px;background:#f0f0f0;border-right:1px solid #a0a0a0;border-bottom:1px solid #a0a0a0;border-top:1px solid #a0a0a0;border-left:1px solid #fff"></div>
<div class="t" style="left:12.00px;top:363.69px;font-size:11px;color:#000;transform:scaleX(0.9472);">Stumm</div>
<div class="t" style="left:65.50px;top:363.69px;font-size:11px;color:#000;transform:scaleX(0.9538);">Solo</div>
<div style="left:18px;top:386.5px;width:5px;height:1.5px;background:#000"></div>
<div style="left:82px;top:386.5px;width:5px;height:1.5px;background:#000"></div>
<div style="left:83.8px;top:384px;width:1.5px;height:6.5px;background:#000"></div>
<div style="left:18px;top:398px;width:72px;height:1.3px;background:#a0a0a0"></div>
<div style="left:19px;top:393px;width:1px;height:4px;background:#9a9a9a"></div>
<div style="left:26px;top:395px;width:1px;height:2px;background:#a0a0a0"></div>
<div style="left:33px;top:395px;width:1px;height:2px;background:#a0a0a0"></div>
<div style="left:40px;top:395px;width:1px;height:2px;background:#a0a0a0"></div>
<div style="left:47px;top:395px;width:1px;height:2px;background:#a0a0a0"></div>
<div style="left:53px;top:395px;width:1px;height:2px;background:#a0a0a0"></div>
<div style="left:60px;top:395px;width:1px;height:2px;background:#a0a0a0"></div>
<div style="left:67px;top:395px;width:1px;height:2px;background:#a0a0a0"></div>
<div style="left:74px;top:395px;width:1px;height:2px;background:#a0a0a0"></div>
<div style="left:81px;top:395px;width:1px;height:2px;background:#a0a0a0"></div>
<div style="left:88px;top:393px;width:1px;height:4px;background:#9a9a9a"></div>
<svg style="left:46px;top:389px" width="12" height="15" viewBox="0 0 12 15"><path d="M1,3.5 Q1,1 3.5,1 H8.5 Q11,1 11,3.5 V8.5 L6,13.8 L1,8.5 z" fill="#c4c6dc" stroke="#6c6c80" stroke-width="1"/><path d="M3,1.2 H9" stroke="#000" stroke-width="1.2"/><path d="M4.8,5 h2.4 M4.8,7.3 h2.4 M4.8,9.6 h2.4" stroke="#f0f0f8" stroke-width="0.8"/></svg>
<div class="t" style="left:18.50px;top:411.54px;font-size:10px;color:#000;transform:scaleX(0.8990);">L</div>
<div class="t" style="left:81.50px;top:411.54px;font-size:10px;color:#000;transform:scaleX(0.9000);">R</div>
<div style="left:18px;top:428px;width:72px;height:1.3px;background:#a0a0a0"></div>
<div style="left:19px;top:423px;width:1px;height:4px;background:#9a9a9a"></div>
<div style="left:26px;top:425px;width:1px;height:2px;background:#a0a0a0"></div>
<div style="left:33px;top:425px;width:1px;height:2px;background:#a0a0a0"></div>
<div style="left:40px;top:425px;width:1px;height:2px;background:#a0a0a0"></div>
<div style="left:47px;top:425px;width:1px;height:2px;background:#a0a0a0"></div>
<div style="left:53px;top:425px;width:1px;height:2px;background:#a0a0a0"></div>
<div style="left:60px;top:425px;width:1px;height:2px;background:#a0a0a0"></div>
<div style="left:67px;top:425px;width:1px;height:2px;background:#a0a0a0"></div>
<div style="left:74px;top:425px;width:1px;height:2px;background:#a0a0a0"></div>
<div style="left:81px;top:425px;width:1px;height:2px;background:#a0a0a0"></div>
<div style="left:88px;top:423px;width:1px;height:4px;background:#9a9a9a"></div>
<svg style="left:46px;top:419px" width="12" height="15" viewBox="0 0 12 15"><path d="M1,3.5 Q1,1 3.5,1 H8.5 Q11,1 11,3.5 V8.5 L6,13.8 L1,8.5 z" fill="#c4c6dc" stroke="#6c6c80" stroke-width="1"/><path d="M3,1.2 H9" stroke="#000" stroke-width="1.2"/><path d="M4.8,5 h2.4 M4.8,7.3 h2.4 M4.8,9.6 h2.4" stroke="#f0f0f8" stroke-width="0.8"/></svg>
<div style="left:23px;top:587px;width:62px;height:18px;border:1px solid #a0a0a0;background:#f0f0f0;box-shadow:inset 1px 1px 0 #fff"></div>
<svg style="left:48px;top:593px" width="13" height="8"><path d="M1,6.5 L6.5,0.5 L12,6.5 z" fill="#a0a0a0"/></svg>
<div class="t" style="left:109.91px;top:164.69px;font-size:11px;font-weight:bold;color:#000;">1,0</div>
<div class="t" style="left:109.21px;top:192.32px;font-size:11.5px;color:#000;">0,5</div>
<div style="left:127.5px;top:197.5px;width:3px;height:1px;background:#000"></div>
<div class="t" style="left:109.91px;top:228.49px;font-size:11px;font-weight:bold;color:#000;">0,0</div>
<div style="left:127.5px;top:233.5px;width:3px;height:1px;background:#000"></div>
<div class="t" style="left:105.38px;top:263.82px;font-size:11.5px;color:#000;">-0,5</div>
<div style="left:127.5px;top:268.5px;width:3px;height:1px;background:#000"></div>
<div class="t" style="left:106.24px;top:291.69px;font-size:11px;font-weight:bold;color:#000;">-1,0</div>
<div style="left:126px;top:304px;width:4px;height:1px;background:#000"></div>
<div class="t" style="left:106.24px;top:141.69px;font-size:11px;font-weight:bold;color:#000;">-1,0</div>
<div style="left:126px;top:154px;width:4px;height:1px;background:#000"></div>
<div class="t" style="left:109.91px;top:314.69px;font-size:11px;font-weight:bold;color:#000;">1,0</div>
<div class="t" style="left:109.21px;top:342.32px;font-size:11.5px;color:#000;">0,5</div>
<div style="left:127.5px;top:347.5px;width:3px;height:1px;background:#000"></div>
<div class="t" style="left:109.91px;top:378.49px;font-size:11px;font-weight:bold;color:#000;">0,0</div>
<div style="left:127.5px;top:383.5px;width:3px;height:1px;background:#000"></div>
<div class="t" style="left:105.38px;top:413.82px;font-size:11.5px;color:#000;">-0,5</div>
<div style="left:127.5px;top:418.5px;width:3px;height:1px;background:#000"></div>
<div class="t" style="left:106.24px;top:441.69px;font-size:11px;font-weight:bold;color:#000;">-1,0</div>
<div style="left:126px;top:454px;width:4px;height:1px;background:#000"></div>
<div class="t" style="left:109.91px;top:464.69px;font-size:11px;font-weight:bold;color:#000;">1,0</div>
<div class="t" style="left:109.21px;top:492.32px;font-size:11.5px;color:#000;">0,5</div>
<div style="left:127.5px;top:497.5px;width:3px;height:1px;background:#000"></div>
<div class="t" style="left:109.91px;top:528.49px;font-size:11px;font-weight:bold;color:#000;">0,0</div>
<div style="left:127.5px;top:533.5px;width:3px;height:1px;background:#000"></div>
<div class="t" style="left:105.38px;top:563.82px;font-size:11.5px;color:#000;">-0,5</div>
<div style="left:127.5px;top:568.5px;width:3px;height:1px;background:#000"></div>
<div class="t" style="left:106.24px;top:591.69px;font-size:11px;font-weight:bold;color:#000;">-1,0</div>
<div style="left:126px;top:604px;width:4px;height:1px;background:#000"></div>
<svg style="left:0;top:0" width="1366" height="708"><polygon points="445,381.8 446,381.8 446,381.9 447,381.9 447,381.4 448,381.4 448,381.4 449,381.4 449,382.1 450,382.1 450,381.8 451,381.8 451,381.5 452,381.5 452,382.3 453,382.3 453,381.6 454,381.6 454,382.0 455,382.0 455,382.0 456,382.0 456,382.4 457,382.4 457,381.7 458,381.7 458,382.1 459,382.1 459,382.0 460,382.0 460,382.1 461,382.1 461,381.8 462,381.8 462,381.9 463,381.9 463,381.6 464,381.6 464,381.5 465,381.5 465,381.5 466,381.5 466,382.1 467,382.1 467,381.6 468,381.6 468,381.4 469,381.4 469,382.3 470,382.3 470,381.4 471,381.4 471,381.5 472,381.5 472,381.5 473,381.5 473,381.7 474,381.7 474,381.6 475,381.6 475,382.0 476,382.0 476,381.6 477,381.6 477,376.0 478,376.0 478,369.9 479,369.9 479,371.1 480,371.1 480,359.5 481,359.5 481,359.3 482,359.3 482,360.1 483,360.1 483,353.2 484,353.2 484,360.8 485,360.8 485,354.0 486,354.0 486,361.1 487,361.1 487,369.9 488,369.9 488,363.7 489,363.7 489,366.6 490,366.6 490,366.8 491,366.8 491,359.8 492,359.8 492,359.9 493,359.9 493,361.2 494,361.2 494,365.6 495,365.6 495,358.3 496,358.3 496,359.9 497,359.9 497,359.6 498,359.6 498,369.9 499,369.9 499,366.2 500,366.2 500,373.1 501,373.1 501,370.5 502,370.5 502,369.6 503,369.6 503,374.8 504,374.8 504,373.8 505,373.8 505,377.4 506,377.4 506,376.0 507,376.0 507,377.6 508,377.6 508,379.8 509,379.8 509,378.7 510,378.7 510,380.4 511,380.4 511,380.9 512,380.9 512,380.5 513,380.5 513,381.4 514,381.4 514,382.1 515,382.1 515,382.0 516,382.0 516,382.2 517,382.2 517,381.7 518,381.7 518,382.4 519,382.4 519,378.1 520,378.1 520,363.5 521,363.5 521,349.3 522,349.3 522,348.2 523,348.2 523,359.8 524,359.8 524,349.9 525,349.9 525,342.1 526,342.1 526,343.6 527,343.6 527,360.1 528,360.1 528,349.9 529,349.9 529,352.2 530,352.2 530,346.1 531,346.1 531,357.6 532,357.6 532,352.5 533,352.5 533,351.8 534,351.8 534,355.8 535,355.8 535,368.4 536,368.4 536,366.1 537,366.1 537,359.6 538,359.6 538,361.5 539,361.5 539,365.0 540,365.0 540,366.6 541,366.6 541,374.0 542,374.0 542,375.0 543,375.0 543,374.3 544,374.3 544,376.5 545,376.5 545,376.5 546,376.5 546,376.9 547,376.9 547,377.8 548,377.8 548,376.3 549,376.3 549,369.5 550,369.5 550,369.7 551,369.7 551,364.4 552,364.4 552,357.9 553,357.9 553,352.2 554,352.2 554,347.2 555,347.2 555,357.4 556,357.4 556,349.2 557,349.2 557,344.3 558,344.3 558,354.6 559,354.6 559,356.9 560,356.9 560,355.9 561,355.9 561,361.4 562,361.4 562,353.0 563,353.0 563,368.3 564,368.3 564,363.8 565,363.8 565,367.5 566,367.5 566,372.5 567,372.5 567,375.5 568,375.5 568,379.2 569,379.2 569,380.5 570,380.5 570,380.0 571,380.0 571,379.9 572,379.9 572,379.7 573,379.7 573,380.2 574,380.2 574,380.4 575,380.4 575,380.5 576,380.5 576,380.0 577,380.0 577,375.7 578,375.7 578,372.4 579,372.4 579,371.8 580,371.8 580,360.8 581,360.8 581,360.3 582,360.3 582,369.0 583,369.0 583,366.5 584,366.5 584,368.0 585,368.0 585,367.1 586,367.1 586,363.8 587,363.8 587,366.9 588,366.9 588,373.2 589,373.2 589,376.7 590,376.7 590,376.0 591,376.0 591,377.1 592,377.1 592,379.5 593,379.5 593,378.6 594,378.6 594,380.7 595,380.7 595,379.8 596,379.8 596,380.8 597,380.8 597,380.2 598,380.2 598,378.0 599,378.0 599,377.4 600,377.4 600,376.3 601,376.3 601,376.7 602,376.7 602,372.0 603,372.0 603,370.7 604,370.7 604,370.1 605,370.1 605,371.7 606,371.7 606,377.1 607,377.1 607,376.5 608,376.5 608,379.0 609,379.0 609,378.7 610,378.7 610,380.1 611,380.1 611,379.8 612,379.8 612,379.9 613,379.9 613,379.8 614,379.8 614,380.5 615,380.5 615,376.2 616,376.2 616,377.0 617,377.0 617,372.9 618,372.9 618,372.4 619,372.4 619,370.7 620,370.7 620,376.6 621,376.6 621,371.4 622,371.4 622,371.6 623,371.6 623,375.7 624,375.7 624,375.3 625,375.3 625,374.6 626,374.6 626,375.1 627,375.1 627,367.8 628,367.8 628,371.4 629,371.4 629,364.6 630,364.6 630,361.1 631,361.1 631,352.6 632,352.6 632,352.6 633,352.6 633,352.7 634,352.7 634,346.2 635,346.2 635,345.6 636,345.6 636,340.9 637,340.9 637,353.7 638,353.7 638,339.3 639,339.3 639,356.5 640,356.5 640,351.4 641,351.4 641,335.3 642,335.3 642,354.0 643,354.0 643,355.3 644,355.3 644,364.9 645,364.9 645,367.7 646,367.7 646,370.4 647,370.4 647,377.9 648,377.9 648,380.7 649,380.7 649,380.5 650,380.5 650,380.6 651,380.6 651,381.5 652,381.5 652,381.1 653,381.1 653,379.0 654,379.0 654,376.2 655,376.2 655,370.6 656,370.6 656,375.3 657,375.3 657,371.9 658,371.9 658,367.1 659,367.1 659,369.4 660,369.4 660,374.0 661,374.0 661,373.4 662,373.4 662,372.9 663,372.9 663,373.4 664,373.4 664,375.3 665,375.3 665,371.9 666,371.9 666,366.0 667,366.0 667,368.9 668,368.9 668,370.8 669,370.8 669,371.8 670,371.8 670,363.2 671,363.2 671,368.9 672,368.9 672,370.5 673,370.5 673,367.2 674,367.2 674,368.2 675,368.2 675,369.6 676,369.6 676,373.6 677,373.6 677,372.1 678,372.1 678,368.6 679,368.6 679,368.0 680,368.0 680,366.2 681,366.2 681,366.6 682,366.6 682,370.8 683,370.8 683,371.8 684,371.8 684,367.5 685,367.5 685,364.6 686,364.6 686,369.8 687,369.8 687,364.8 688,364.8 688,363.8 689,363.8 689,356.8 690,356.8 690,366.2 691,366.2 691,353.3 692,353.3 692,354.0 693,354.0 693,358.0 694,358.0 694,362.5 695,362.5 695,364.1 696,364.1 696,370.2 697,370.2 697,374.1 698,374.1 698,369.7 699,369.7 699,376.1 700,376.1 700,376.2 701,376.2 701,376.9 702,376.9 702,377.9 703,377.9 703,380.8 704,380.8 704,379.1 705,379.1 705,380.2 706,380.2 706,381.6 707,381.6 707,382.1 708,382.1 708,381.6 709,381.6 709,382.0 710,382.0 710,381.8 711,381.8 711,381.9 712,381.9 712,381.5 713,381.5 713,381.5 714,381.5 714,382.2 715,382.2 715,382.0 716,382.0 716,382.2 717,382.2 717,381.8 718,381.8 718,382.0 719,382.0 719,382.4 720,382.4 720,382.2 721,382.2 721,381.5 722,381.5 722,382.1 723,382.1 723,381.4 724,381.4 724,381.6 725,381.6 725,381.8 726,381.8 726,381.6 727,381.6 727,382.2 728,382.2 728,381.6 729,381.6 729,381.6 730,381.6 730,381.7 731,381.7 731,382.1 732,382.1 732,382.3 733,382.3 733,381.8 734,381.8 734,382.0 735,382.0 735,381.6 736,381.6 736,381.7 737,381.7 737,381.6 738,381.6 738,378.2 739,378.2 739,372.7 740,372.7 740,372.9 741,372.9 741,361.7 742,361.7 742,364.5 743,364.5 743,359.6 744,359.6 744,366.7 745,366.7 745,366.6 746,366.6 746,366.8 747,366.8 747,368.5 748,368.5 748,368.0 749,368.0 749,369.1 750,369.1 750,370.5 751,370.5 751,373.1 752,373.1 752,378.1 753,378.1 753,379.0 754,379.0 754,378.7 755,378.7 755,376.7 756,376.7 756,376.0 757,376.0 757,379.1 758,379.1 758,378.7 759,378.7 759,379.2 760,379.2 760,379.3 761,379.3 761,380.8 762,380.8 762,381.2 763,381.2 763,381.2 764,381.2 764,377.3 765,377.3 765,372.1 766,372.1 766,370.5 767,370.5 767,372.1 768,372.1 768,366.8 769,366.8 769,365.8 770,365.8 770,359.1 771,359.1 771,368.0 772,368.0 772,359.2 773,359.2 773,357.1 774,357.1 774,347.5 775,347.5 775,356.4 776,356.4 776,353.1 777,353.1 777,352.3 778,352.3 778,356.0 779,356.0 779,359.3 780,359.3 780,364.9 781,364.9 781,366.1 782,366.1 782,368.9 783,368.9 783,365.1 784,365.1 784,365.9 785,365.9 785,373.9 786,373.9 786,370.6 787,370.6 787,373.6 788,373.6 788,372.7 789,372.7 789,369.5 790,369.5 790,362.7 791,362.7 791,371.0 792,371.0 792,370.7 793,370.7 793,372.5 794,372.5 794,375.9 795,375.9 795,376.8 796,376.8 796,378.9 797,378.9 797,380.8 798,380.8 798,379.1 799,379.1 799,380.4 800,380.4 800,381.7 801,381.7 801,379.8 802,379.8 802,375.8 803,375.8 803,371.9 804,371.9 804,367.2 805,367.2 805,366.5 806,366.5 806,372.4 807,372.4 807,368.7 808,368.7 808,374.8 809,374.8 809,373.5 810,373.5 810,374.7 811,374.7 811,376.9 812,376.9 812,375.4 813,375.4 813,377.8 814,377.8 814,377.4 815,377.4 815,377.1 816,377.1 816,380.1 817,380.1 817,380.3 818,380.3 818,379.8 819,379.8 819,379.5 820,379.5 820,377.7 821,377.7 821,375.6 822,375.6 822,372.6 823,372.6 823,374.7 824,374.7 824,370.6 825,370.6 825,369.2 826,369.2 826,372.6 827,372.6 827,371.7 828,371.7 828,372.4 829,372.4 829,376.0 830,376.0 830,374.1 831,374.1 831,372.2 832,372.2 832,370.2 833,370.2 833,372.3 834,372.3 834,366.4 835,366.4 835,372.1 836,372.1 836,368.1 837,368.1 837,368.2 838,368.2 838,367.7 839,367.7 839,371.7 840,371.7 840,363.6 841,363.6 841,366.6 842,366.6 842,368.9 843,368.9 843,362.9 844,362.9 844,367.2 845,367.2 845,361.9 846,361.9 846,362.6 847,362.6 847,362.4 848,362.4 848,370.1 849,370.1 849,360.6 850,360.6 850,368.7 851,368.7 851,364.8 852,364.8 852,361.2 853,361.2 853,364.2 854,364.2 854,365.6 855,365.6 855,368.3 856,368.3 856,371.0 857,371.0 857,366.1 858,366.1 858,363.0 859,363.0 859,367.2 860,367.2 860,369.9 861,369.9 861,365.7 862,365.7 862,368.4 863,368.4 863,365.7 864,365.7 864,360.1 865,360.1 865,355.9 866,355.9 866,363.2 867,363.2 867,361.1 868,361.1 868,359.1 869,359.1 869,360.6 870,360.6 870,366.3 871,366.3 871,365.3 872,365.3 872,363.2 873,363.2 873,362.8 874,362.8 874,365.0 875,365.0 875,367.4 876,367.4 876,361.4 877,361.4 877,361.6 878,361.6 878,362.9 879,362.9 879,367.5 880,367.5 880,361.1 881,361.1 881,359.0 882,359.0 882,360.4 883,360.4 883,355.8 884,355.8 884,359.7 885,359.7 885,355.0 886,355.0 886,361.5 887,361.5 887,349.6 888,349.6 888,356.4 889,356.4 889,362.9 890,362.9 890,365.5 891,365.5 891,364.1 892,364.1 892,366.5 893,366.5 893,366.6 894,366.6 894,360.9 895,360.9 895,358.3 896,358.3 896,359.8 897,359.8 897,361.3 898,361.3 898,352.7 899,352.7 899,364.9 900,364.9 900,354.4 901,354.4 901,358.8 902,358.8 902,351.4 903,351.4 903,359.0 904,359.0 904,360.0 905,360.0 905,359.1 906,359.1 906,365.0 907,365.0 907,362.1 908,362.1 908,371.8 909,371.8 909,367.9 910,367.9 910,369.6 911,369.6 911,372.1 912,372.1 912,367.7 913,367.7 913,367.5 914,367.5 914,373.9 915,373.9 915,373.6 916,373.6 916,375.4 917,375.4 917,373.7 918,373.7 918,369.9 919,369.9 919,369.4 920,369.4 920,370.4 921,370.4 921,374.5 922,374.5 922,367.1 923,367.1 923,372.6 924,372.6 924,373.7 925,373.7 925,370.9 926,370.9 926,376.4 927,376.4 927,370.7 928,370.7 928,376.7 929,376.7 929,375.8 930,375.8 930,378.2 931,378.2 931,376.1 932,376.1 932,376.2 933,376.2 933,378.2 934,378.2 934,378.4 935,378.4 935,377.7 936,377.7 936,378.4 937,378.4 937,379.9 938,379.9 938,380.5 939,380.5 939,379.8 940,379.8 940,381.4 941,381.4 941,379.6 942,379.6 942,377.7 943,377.7 943,375.0 944,375.0 944,374.0 945,374.0 945,373.7 946,373.7 946,367.1 947,367.1 947,369.9 948,369.9 948,368.7 949,368.7 949,375.5 950,375.5 950,373.0 951,373.0 951,373.2 952,373.2 952,376.4 953,376.4 953,378.9 954,378.9 954,378.9 955,378.9 955,380.2 956,380.2 956,381.6 957,381.6 957,378.0 958,378.0 958,378.9 959,378.9 959,373.1 960,373.1 960,375.5 961,375.5 961,374.2 962,374.2 962,373.7 963,373.7 963,368.8 964,368.8 964,368.8 965,368.8 965,370.5 966,370.5 966,373.8 967,373.8 967,370.4 968,370.4 968,372.5 969,372.5 969,373.1 970,373.1 970,374.3 971,374.3 971,376.4 972,376.4 972,376.3 973,376.3 973,379.0 974,379.0 974,380.6 975,380.6 975,380.5 976,380.5 976,380.3 977,380.3 977,377.7 978,377.7 978,376.6 979,376.6 979,375.8 980,375.8 980,373.7 981,373.7 981,375.8 982,375.8 982,370.7 983,370.7 983,375.2 984,375.2 984,372.6 985,372.6 985,375.2 986,375.2 986,374.3 987,374.3 987,372.7 988,372.7 988,372.5 989,372.5 989,375.0 990,375.0 990,373.7 991,373.7 991,373.2 992,373.2 992,376.6 993,376.6 993,375.8 994,375.8 994,375.3 995,375.3 995,376.2 996,376.2 996,375.8 997,375.8 997,377.6 998,377.6 998,379.1 999,379.1 999,379.8 1000,379.8 1000,381.3 1001,381.3 1001,381.9 1002,381.9 1002,381.3 1003,381.3 1003,382.0 1004,382.0 1004,381.0 1005,381.0 1005,381.3 1006,381.3 1006,380.7 1007,380.7 1007,380.8 1008,380.8 1008,381.0 1009,381.0 1009,379.6 1010,379.6 1010,380.6 1011,380.6 1011,379.4 1012,379.4 1012,377.0 1013,377.0 1013,376.0 1014,376.0 1014,374.2 1015,374.2 1015,370.9 1016,370.9 1016,372.8 1017,372.8 1017,373.4 1018,373.4 1018,378.2 1019,378.2 1019,378.7 1020,378.7 1020,377.6 1021,377.6 1021,378.6 1022,378.6 1022,380.1 1023,380.1 1023,380.6 1024,380.6 1024,381.8 1025,381.8 1025,382.2 1026,382.2 1026,381.4 1027,381.4 1027,381.2 1028,381.2 1028,380.5 1029,380.5 1029,381.5 1030,381.5 1030,380.1 1031,380.1 1031,380.1 1032,380.1 1032,380.2 1033,380.2 1033,379.8 1034,379.8 1034,381.3 1035,381.3 1035,380.6 1036,380.6 1036,380.5 1037,380.5 1037,381.3 1038,381.3 1038,382.2 1039,382.2 1039,382.4 1040,382.4 1040,381.6 1041,381.6 1041,381.8 1042,381.8 1042,382.0 1043,382.0 1043,380.9 1044,380.9 1044,381.9 1045,381.9 1045,379.9 1046,379.9 1046,380.1 1047,380.1 1047,381.1 1048,381.1 1048,378.5 1049,378.5 1049,377.6 1050,377.6 1050,376.2 1051,376.2 1051,370.2 1052,370.2 1052,370.2 1053,370.2 1053,368.5 1054,368.5 1054,363.1 1055,363.1 1055,366.3 1056,366.3 1056,368.9 1057,368.9 1057,369.9 1058,369.9 1058,371.3 1059,371.3 1059,377.3 1060,377.3 1060,373.2 1061,373.2 1061,375.1 1062,375.1 1062,375.8 1063,375.8 1063,377.8 1064,377.8 1064,378.4 1065,378.4 1065,380.9 1066,380.9 1066,381.5 1067,381.5 1067,381.8 1068,381.8 1068,380.4 1069,380.4 1069,380.6 1070,380.6 1070,380.1 1071,380.1 1071,378.0 1072,378.0 1072,377.1 1073,377.1 1073,375.5 1074,375.5 1074,377.3 1075,377.3 1075,376.7 1076,376.7 1076,375.0 1077,375.0 1077,374.4 1078,374.4 1078,377.7 1079,377.7 1079,376.3 1080,376.3 1080,378.4 1081,378.4 1081,379.5 1082,379.5 1082,381.2 1083,381.2 1083,380.4 1084,380.4 1084,378.3 1085,378.3 1085,375.8 1086,375.8 1086,372.0 1087,372.0 1087,371.8 1088,371.8 1088,366.4 1089,366.4 1089,365.1 1090,365.1 1090,363.2 1091,363.2 1091,363.0 1092,363.0 1092,372.8 1093,372.8 1093,367.2 1094,367.2 1094,367.2 1095,367.2 1095,372.2 1096,372.2 1096,374.7 1097,374.7 1097,374.5 1098,374.5 1098,377.4 1099,377.4 1099,377.6 1100,377.6 1100,380.1 1101,380.1 1101,381.0 1102,381.0 1102,380.9 1103,380.9 1103,380.1 1104,380.1 1104,381.0 1105,381.0 1105,381.1 1106,381.1 1106,381.1 1107,381.1 1107,381.3 1108,381.3 1108,381.4 1109,381.4 1109,381.8 1110,381.8 1110,382.2 1111,382.2 1111,381.5 1112,381.5 1112,382.0 1113,382.0 1113,381.8 1114,381.8 1114,382.1 1115,382.1 1115,382.1 1116,382.1 1116,382.1 1117,382.1 1117,381.5 1118,381.5 1118,381.7 1119,381.7 1119,382.0 1120,382.0 1120,381.7 1121,381.7 1121,382.1 1122,382.1 1122,381.4 1123,381.4 1123,381.8 1124,381.8 1124,382.0 1125,382.0 1125,381.9 1126,381.9 1126,382.2 1127,382.2 1127,381.7 1128,381.7 1128,382.2 1129,382.2 1129,381.8 1130,381.8 1130,381.7 1131,381.7 1131,381.6 1132,381.6 1132,381.9 1133,381.9 1133,381.6 1134,381.6 1134,382.3 1135,382.3 1135,382.0 1136,382.0 1136,382.2 1137,382.2 1137,381.9 1138,381.9 1138,381.9 1139,381.9 1139,382.2 1140,382.2 1140,385.2 1139,385.2 1139,384.9 1138,384.9 1138,385.3 1137,385.3 1137,385.3 1136,385.3 1136,385.6 1135,385.6 1135,385.2 1134,385.2 1134,385.5 1133,385.5 1133,384.8 1132,384.8 1132,385.3 1131,385.3 1131,385.5 1130,385.5 1130,384.8 1129,384.8 1129,384.7 1128,384.7 1128,385.5 1127,385.5 1127,385.1 1126,385.1 1126,385.4 1125,385.4 1125,385.1 1124,385.1 1124,385.4 1123,385.4 1123,384.5 1122,384.5 1122,384.6 1121,384.6 1121,385.6 1120,385.6 1120,385.2 1119,385.2 1119,384.9 1118,384.9 1118,385.2 1117,385.2 1117,385.2 1116,385.2 1116,384.8 1115,384.8 1115,385.6 1114,385.6 1114,385.3 1113,385.3 1113,385.1 1112,385.1 1112,385.4 1111,385.4 1111,385.1 1110,385.1 1110,385.1 1109,385.1 1109,385.6 1108,385.6 1108,385.7 1107,385.7 1107,386.0 1106,386.0 1106,386.5 1105,386.5 1105,386.4 1104,386.4 1104,386.4 1103,386.4 1103,386.4 1102,386.4 1102,386.9 1101,386.9 1101,387.5 1100,387.5 1100,390.8 1099,390.8 1099,391.0 1098,391.0 1098,396.7 1097,396.7 1097,393.6 1096,393.6 1096,401.9 1095,401.9 1095,403.8 1094,403.8 1094,401.5 1093,401.5 1093,406.9 1092,406.9 1092,408.2 1091,408.2 1091,405.1 1090,405.1 1090,412.3 1089,412.3 1089,410.1 1088,410.1 1088,403.8 1087,403.8 1087,399.6 1086,399.6 1086,396.0 1085,396.0 1085,390.6 1084,390.6 1084,385.3 1083,385.3 1083,387.1 1082,387.1 1082,388.0 1081,388.0 1081,389.4 1080,389.4 1080,390.4 1079,390.4 1079,389.0 1078,389.0 1078,388.9 1077,388.9 1077,389.6 1076,389.6 1076,391.6 1075,391.6 1075,390.3 1074,390.3 1074,389.5 1073,389.5 1073,389.7 1072,389.7 1072,388.1 1071,388.1 1071,385.7 1070,385.7 1070,386.2 1069,386.2 1069,386.6 1068,386.6 1068,386.3 1067,386.3 1067,386.5 1066,386.5 1066,386.3 1065,386.3 1065,389.2 1064,389.2 1064,391.4 1063,391.4 1063,393.7 1062,393.7 1062,392.6 1061,392.6 1061,392.7 1060,392.7 1060,397.6 1059,397.6 1059,400.2 1058,400.2 1058,398.2 1057,398.2 1057,401.5 1056,401.5 1056,403.7 1055,403.7 1055,402.7 1054,402.7 1054,407.4 1053,407.4 1053,394.9 1052,394.9 1052,399.1 1051,399.1 1051,392.8 1050,392.8 1050,393.8 1049,393.8 1049,389.2 1048,389.2 1048,387.1 1047,387.1 1047,386.8 1046,386.8 1046,386.3 1045,386.3 1045,385.7 1044,385.7 1044,385.6 1043,385.6 1043,385.3 1042,385.3 1042,385.2 1041,385.2 1041,385.5 1040,385.5 1040,385.5 1039,385.5 1039,385.4 1038,385.4 1038,385.7 1037,385.7 1037,385.6 1036,385.6 1036,385.7 1035,385.7 1035,385.5 1034,385.5 1034,385.2 1033,385.2 1033,386.2 1032,386.2 1032,386.1 1031,386.1 1031,385.8 1030,385.8 1030,385.9 1029,385.9 1029,385.9 1028,385.9 1028,385.0 1027,385.0 1027,385.2 1026,385.2 1026,385.6 1025,385.6 1025,385.5 1024,385.5 1024,385.4 1023,385.4 1023,386.9 1022,386.9 1022,388.4 1021,388.4 1021,387.0 1020,387.0 1020,389.8 1019,389.8 1019,391.4 1018,391.4 1018,391.2 1017,391.2 1017,393.2 1016,393.2 1016,389.8 1015,389.8 1015,392.5 1014,392.5 1014,389.4 1013,389.4 1013,389.2 1012,389.2 1012,387.2 1011,387.2 1011,387.6 1010,387.6 1010,385.7 1009,385.7 1009,386.3 1008,386.3 1008,386.0 1007,386.0 1007,386.7 1006,386.7 1006,386.3 1005,386.3 1005,386.3 1004,386.3 1004,385.2 1003,385.2 1003,385.7 1002,385.7 1002,385.4 1001,385.4 1001,386.2 1000,386.2 1000,386.3 999,386.3 999,388.4 998,388.4 998,386.9 997,386.9 997,391.2 996,391.2 996,391.0 995,391.0 995,390.8 994,390.8 994,389.8 993,389.8 993,390.4 992,390.4 992,395.6 991,395.6 991,390.2 990,390.2 990,395.9 989,395.9 989,396.6 988,396.6 988,399.2 987,399.2 987,397.3 986,397.3 986,398.3 985,398.3 985,397.4 984,397.4 984,395.8 983,395.8 983,397.2 982,397.2 982,395.0 981,395.0 981,391.8 980,391.8 980,391.9 979,391.9 979,388.3 978,388.3 978,388.5 977,388.5 977,387.2 976,387.2 976,385.7 975,385.7 975,386.6 974,386.6 974,387.4 973,387.4 973,390.7 972,390.7 972,390.8 971,390.8 971,394.4 970,394.4 970,391.6 969,391.6 969,396.2 968,396.2 968,396.4 967,396.4 967,399.6 966,399.6 966,402.5 965,402.5 965,405.5 964,405.5 964,396.6 963,396.6 963,404.0 962,404.0 962,403.9 961,403.9 961,402.5 960,402.5 960,392.3 959,392.3 959,394.4 958,394.4 958,389.3 957,389.3 957,386.5 956,386.5 956,387.3 955,387.3 955,388.9 954,388.9 954,390.9 953,390.9 953,390.9 952,390.9 952,392.2 951,392.2 951,396.2 950,396.2 950,395.5 949,395.5 949,393.7 948,393.7 948,396.8 947,396.8 947,401.3 946,401.3 946,397.3 945,397.3 945,397.4 944,397.4 944,392.5 943,392.5 943,390.3 942,390.3 942,387.2 941,387.2 941,386.8 940,386.8 940,386.1 939,386.1 939,386.6 938,386.6 938,387.5 937,387.5 937,389.0 936,389.0 936,388.3 935,388.3 935,390.5 934,390.5 934,391.1 933,391.1 933,390.5 932,390.5 932,391.4 931,391.4 931,393.2 930,393.2 930,391.3 929,391.3 929,392.4 928,392.4 928,397.6 927,397.6 927,398.4 926,398.4 926,392.9 925,392.9 925,397.6 924,397.6 924,403.3 923,403.3 923,396.4 922,396.4 922,403.0 921,403.0 921,394.4 920,394.4 920,402.2 919,402.2 919,394.1 918,394.1 918,398.0 917,398.0 917,398.2 916,398.2 916,399.6 915,399.6 915,392.8 914,392.8 914,402.0 913,402.0 913,398.5 912,398.5 912,402.9 911,402.9 911,399.1 910,399.1 910,396.0 909,396.0 909,399.9 908,399.9 908,404.0 907,404.0 907,402.2 906,402.2 906,410.3 905,410.3 905,408.9 904,408.9 904,405.1 903,405.1 903,405.8 902,405.8 902,412.2 901,412.2 901,413.5 900,413.5 900,415.3 899,415.3 899,405.9 898,405.9 898,405.5 897,405.5 897,402.7 896,402.7 896,413.2 895,413.2 895,405.8 894,405.8 894,410.4 893,410.4 893,405.8 892,405.8 892,402.9 891,402.9 891,400.4 890,400.4 890,403.1 889,403.1 889,405.7 888,405.7 888,405.7 887,405.7 887,398.8 886,398.8 886,399.1 885,399.1 885,400.7 884,400.7 884,397.6 883,397.6 883,403.2 882,403.2 882,400.3 881,400.3 881,402.7 880,402.7 880,404.9 879,404.9 879,399.3 878,399.3 878,400.7 877,400.7 877,407.1 876,407.1 876,403.8 875,403.8 875,401.9 874,401.9 874,404.2 873,404.2 873,402.7 872,402.7 872,408.9 871,408.9 871,407.6 870,407.6 870,409.8 869,409.8 869,408.5 868,408.5 868,406.8 867,406.8 867,409.4 866,409.4 866,403.3 865,403.3 865,407.3 864,407.3 864,410.5 863,410.5 863,407.2 862,407.2 862,410.0 861,410.0 861,401.4 860,401.4 860,406.2 859,406.2 859,408.0 858,408.0 858,401.3 857,401.3 857,402.3 856,402.3 856,400.1 855,400.1 855,397.5 854,397.5 854,409.0 853,409.0 853,402.6 852,402.6 852,402.6 851,402.6 851,408.3 850,408.3 850,407.0 849,407.0 849,409.6 848,409.6 848,408.8 847,408.8 847,400.4 846,400.4 846,406.5 845,406.5 845,410.8 844,410.8 844,405.9 843,405.9 843,406.2 842,406.2 842,400.0 841,400.0 841,401.6 840,401.6 840,403.4 839,403.4 839,399.9 838,399.9 838,397.2 837,397.2 837,398.6 836,398.6 836,401.2 835,401.2 835,396.3 834,396.3 834,401.1 833,401.1 833,397.4 832,397.4 832,397.8 831,397.8 831,402.4 830,402.4 830,395.6 829,395.6 829,393.6 828,393.6 828,395.3 827,395.3 827,400.1 826,400.1 826,401.0 825,401.0 825,400.9 824,400.9 824,392.8 823,392.8 823,390.7 822,390.7 822,393.0 821,393.0 821,390.4 820,390.4 820,387.8 819,387.8 819,386.4 818,386.4 818,388.2 817,388.2 817,390.1 816,390.1 816,390.1 815,390.1 815,389.6 814,389.6 814,392.2 813,392.2 813,393.1 812,393.1 812,394.2 811,394.2 811,398.7 810,398.7 810,393.5 809,393.5 809,402.6 808,402.6 808,401.8 807,401.8 807,408.8 806,408.8 806,408.7 805,408.7 805,394.9 804,394.9 804,399.6 803,399.6 803,394.9 802,394.9 802,389.3 801,389.3 801,386.1 800,386.1 800,387.2 799,387.2 799,387.5 798,387.5 798,388.1 797,388.1 797,387.6 796,387.6 796,389.6 795,389.6 795,389.2 794,389.2 794,394.5 793,394.5 793,397.1 792,397.1 792,393.7 791,393.7 791,395.8 790,395.8 790,400.4 789,400.4 789,398.7 788,398.7 788,398.2 787,398.2 787,394.7 786,394.7 786,400.9 785,400.9 785,402.6 784,402.6 784,400.7 783,400.7 783,401.6 782,401.6 782,408.1 781,408.1 781,410.7 780,410.7 780,404.7 779,404.7 779,410.8 778,410.8 778,411.2 777,411.2 777,407.4 776,407.4 776,405.8 775,405.8 775,417.4 774,417.4 774,417.1 773,417.1 773,414.3 772,414.3 772,415.6 771,415.6 771,400.7 770,400.7 770,404.3 769,404.3 769,402.4 768,402.4 768,400.1 767,400.1 767,397.3 766,397.3 766,394.1 765,394.1 765,388.3 764,388.3 764,386.8 763,386.8 763,385.0 762,385.0 762,386.6 761,386.6 761,387.4 760,387.4 760,389.1 759,389.1 759,388.0 758,388.0 758,389.9 757,389.9 757,392.4 756,392.4 756,392.4 755,392.4 755,391.8 754,391.8 754,389.1 753,389.1 753,390.9 752,390.9 752,391.6 751,391.6 751,390.7 750,390.7 750,399.9 749,399.9 749,398.8 748,398.8 748,396.1 747,396.1 747,399.6 746,399.6 746,404.3 745,404.3 745,403.9 744,403.9 744,396.6 743,396.6 743,402.6 742,402.6 742,403.0 741,403.0 741,399.9 740,399.9 740,391.3 739,391.3 739,387.4 738,387.4 738,385.3 737,385.3 737,384.9 736,384.9 736,385.0 735,385.0 735,384.9 734,384.9 734,385.0 733,385.0 733,385.3 732,385.3 732,385.2 731,385.2 731,384.8 730,384.8 730,384.7 729,384.7 729,384.7 728,384.7 728,385.6 727,385.6 727,385.4 726,385.4 726,384.7 725,384.7 725,385.1 724,385.1 724,385.5 723,385.5 723,385.4 722,385.4 722,385.0 721,385.0 721,385.1 720,385.1 720,385.2 719,385.2 719,385.0 718,385.0 718,384.7 717,384.7 717,385.2 716,385.2 716,385.5 715,385.5 715,384.9 714,384.9 714,385.1 713,385.1 713,384.8 712,384.8 712,384.5 711,384.5 711,385.3 710,385.3 710,384.7 709,384.7 709,385.0 708,385.0 708,385.6 707,385.6 707,386.5 706,386.5 706,386.3 705,386.3 705,387.6 704,387.6 704,387.0 703,387.0 703,390.0 702,390.0 702,389.5 701,389.5 701,395.0 700,395.0 700,394.1 699,394.1 699,392.3 698,392.3 698,399.0 697,399.0 697,401.5 696,401.5 696,408.4 695,408.4 695,410.3 694,410.3 694,410.4 693,410.4 693,420.4 692,420.4 692,403.1 691,403.1 691,412.7 690,412.7 690,403.8 689,403.8 689,410.7 688,410.7 688,409.0 687,409.0 687,405.9 686,405.9 686,407.3 685,407.3 685,398.7 684,398.7 684,409.8 683,409.8 683,406.2 682,406.2 682,399.5 681,399.5 681,401.5 680,401.5 680,404.3 679,404.3 679,402.5 678,402.5 678,399.9 677,399.9 677,399.1 676,399.1 676,401.1 675,401.1 675,407.6 674,407.6 674,399.3 673,399.3 673,396.3 672,396.3 672,396.7 671,396.7 671,404.0 670,404.0 670,400.1 669,400.1 669,400.5 668,400.5 668,395.6 667,395.6 667,402.1 666,402.1 666,399.2 665,399.2 665,392.2 664,392.2 664,397.3 663,397.3 663,391.7 662,391.7 662,394.6 661,394.6 661,391.1 660,391.1 660,393.8 659,393.8 659,397.5 658,397.5 658,394.5 657,394.5 657,392.4 656,392.4 656,391.8 655,391.8 655,389.5 654,389.5 654,387.2 653,387.2 653,385.8 652,385.8 652,386.0 651,386.0 651,387.6 650,387.6 650,387.1 649,387.1 649,386.1 648,386.1 648,391.9 647,391.9 647,399.7 646,399.7 646,401.2 645,401.2 645,403.5 644,403.5 644,409.3 643,409.3 643,426.6 642,426.6 642,409.6 641,409.6 641,406.1 640,406.1 640,417.8 639,417.8 639,409.5 638,409.5 638,414.0 637,414.0 637,413.1 636,413.1 636,406.7 635,406.7 635,405.8 634,405.8 634,402.2 633,402.2 633,399.9 632,399.9 632,405.5 631,405.5 631,401.7 630,401.7 630,407.2 629,407.2 629,397.8 628,397.8 628,398.5 627,398.5 627,399.3 626,399.3 626,399.7 625,399.7 625,396.4 624,396.4 624,395.7 623,395.7 623,396.4 622,396.4 622,397.8 621,397.8 621,396.9 620,396.9 620,394.7 619,394.7 619,396.1 618,396.1 618,393.0 617,393.0 617,390.0 616,390.0 616,391.2 615,391.2 615,389.5 614,389.5 614,387.0 613,387.0 613,387.4 612,387.4 612,389.0 611,389.0 611,391.1 610,391.1 610,392.4 609,392.4 609,391.6 608,391.6 608,394.6 607,394.6 607,390.6 606,390.6 606,392.7 605,392.7 605,396.4 604,396.4 604,394.5 603,394.5 603,392.3 602,392.3 602,389.6 601,389.6 601,391.4 600,391.4 600,389.0 599,389.0 599,389.1 598,389.1 598,386.8 597,386.8 597,386.5 596,386.5 596,386.7 595,386.7 595,388.7 594,388.7 594,387.4 593,387.4 593,390.4 592,390.4 592,391.6 591,391.6 591,390.6 590,390.6 590,392.1 589,392.1 589,391.4 588,391.4 588,394.9 587,394.9 587,398.7 586,398.7 586,398.5 585,398.5 585,405.2 584,405.2 584,408.2 583,408.2 583,405.3 582,405.3 582,409.7 581,409.7 581,401.3 580,401.3 580,398.4 579,398.4 579,395.1 578,395.1 578,390.9 577,390.9 577,386.6 576,386.6 576,386.5 575,386.5 575,386.0 574,386.0 574,386.6 573,386.6 573,385.7 572,385.7 572,387.9 571,387.9 571,388.2 570,388.2 570,387.8 569,387.8 569,387.6 568,387.6 568,393.4 567,393.4 567,397.8 566,397.8 566,399.8 565,399.8 565,406.8 564,406.8 564,412.7 563,412.7 563,417.9 562,417.9 562,405.4 561,405.4 561,425.9 560,425.9 560,420.8 559,420.8 559,435.3 558,435.3 558,438.7 557,438.7 557,422.4 556,422.4 556,425.9 555,425.9 555,422.3 554,422.3 554,405.3 553,405.3 553,412.9 552,412.9 552,409.1 551,409.1 551,404.5 550,404.5 550,395.2 549,395.2 549,390.9 548,390.9 548,392.9 547,392.9 547,397.4 546,397.4 546,407.3 545,407.3 545,403.5 544,403.5 544,412.4 543,412.4 543,407.0 542,407.0 542,408.1 541,408.1 541,407.9 540,407.9 540,403.5 539,403.5 539,406.9 538,406.9 538,402.1 537,402.1 537,408.4 536,408.4 536,412.9 535,412.9 535,403.6 534,403.6 534,414.1 533,414.1 533,411.9 532,411.9 532,403.9 531,403.9 531,422.0 530,422.0 530,417.4 529,417.4 529,413.2 528,413.2 528,430.8 527,430.8 527,423.4 526,423.4 526,424.3 525,424.3 525,421.7 524,421.7 524,426.8 523,426.8 523,423.1 522,423.1 522,410.6 521,410.6 521,399.3 520,399.3 520,391.0 519,391.0 519,385.2 518,385.2 518,385.1 517,385.1 517,385.3 516,385.3 516,385.3 515,385.3 515,385.3 514,385.3 514,386.2 513,386.2 513,388.2 512,388.2 512,387.6 511,387.6 511,389.6 510,389.6 510,388.9 509,388.9 509,390.5 508,390.5 508,391.6 507,391.6 507,392.2 506,392.2 506,396.6 505,396.6 505,397.0 504,397.0 504,399.4 503,399.4 503,397.6 502,397.6 502,404.8 501,404.8 501,399.5 500,399.5 500,406.9 499,406.9 499,402.5 498,402.5 498,405.3 497,405.3 497,410.3 496,410.3 496,412.7 495,412.7 495,410.7 494,410.7 494,413.2 493,413.2 493,403.2 492,403.2 492,408.1 491,408.1 491,406.7 490,406.7 490,419.0 489,419.0 489,413.2 488,413.2 488,416.8 487,416.8 487,423.6 486,423.6 486,407.2 485,407.2 485,420.8 484,420.8 484,415.9 483,415.9 483,413.9 482,413.9 482,427.3 481,427.3 481,415.9 480,415.9 480,409.1 479,409.1 479,410.2 478,410.2 478,395.4 477,395.4 477,385.3 476,385.3 476,385.2 475,385.2 475,385.0 474,385.0 474,385.4 473,385.4 473,384.7 472,384.7 472,384.6 471,384.6 471,385.6 470,385.6 470,385.0 469,385.0 469,385.1 468,385.1 468,385.2 467,385.2 467,385.6 466,385.6 466,384.9 465,384.9 465,385.4 464,385.4 464,384.9 463,384.9 463,385.2 462,385.2 462,384.9 461,384.9 461,385.3 460,385.3 460,385.4 459,385.4 459,385.5 458,385.5 458,384.7 457,384.7 457,385.4 456,385.4 456,385.5 455,385.5 455,384.7 454,384.7 454,384.5 453,384.5 453,385.3 452,385.3 452,385.4 451,385.4 451,385.1 450,385.1 450,384.6 449,384.6 449,384.8 448,384.8 448,385.3 447,385.3 447,385.2 446,385.2 446,385.4 445,385.4" fill="#3232c8"/><polygon points="445,382.8 446,382.8 446,382.9 447,382.9 447,382.8 448,382.8 448,382.9 449,382.9 449,382.8 450,382.8 450,382.9 451,382.9 451,382.9 452,382.9 452,382.9 453,382.9 453,382.9 454,382.9 454,382.9 455,382.9 455,382.9 456,382.9 456,382.9 457,382.9 457,382.9 458,382.9 458,382.8 459,382.8 459,382.8 460,382.8 460,382.9 461,382.9 461,382.9 462,382.9 462,382.9 463,382.9 463,382.8 464,382.8 464,382.9 465,382.9 465,382.8 466,382.8 466,382.9 467,382.9 467,382.9 468,382.9 468,382.9 469,382.9 469,382.8 470,382.8 470,382.8 471,382.8 471,382.8 472,382.8 472,382.8 473,382.8 473,382.8 474,382.8 474,382.8 475,382.8 475,382.8 476,382.8 476,382.8 477,382.8 477,380.3 478,380.3 478,374.5 479,374.5 479,374.7 480,374.7 480,371.9 481,371.9 481,371.2 482,371.2 482,369.2 483,369.2 483,371.8 484,371.8 484,370.6 485,370.6 485,373.7 486,373.7 486,374.0 487,374.0 487,374.9 488,374.9 488,372.6 489,372.6 489,374.0 490,374.0 490,373.9 491,373.9 491,375.1 492,375.1 492,373.1 493,373.1 493,374.3 494,374.3 494,373.7 495,373.7 495,373.8 496,373.8 496,375.1 497,375.1 497,376.4 498,376.4 498,376.6 499,376.6 499,376.4 500,376.4 500,376.4 501,376.4 501,377.5 502,377.5 502,377.7 503,377.7 503,378.9 504,378.9 504,378.7 505,378.7 505,378.7 506,378.7 506,379.3 507,379.3 507,380.5 508,380.5 508,380.8 509,380.8 509,381.1 510,381.1 510,381.6 511,381.6 511,381.8 512,381.8 512,382.0 513,382.0 513,382.3 514,382.3 514,382.8 515,382.8 515,382.8 516,382.8 516,382.9 517,382.9 517,382.9 518,382.9 518,382.9 519,382.9 519,381.2 520,381.2 520,377.0 521,377.0 521,372.1 522,372.1 522,370.5 523,370.5 523,367.5 524,367.5 524,367.9 525,367.9 525,369.7 526,369.7 526,369.8 527,369.8 527,370.2 528,370.2 528,370.7 529,370.7 529,370.3 530,370.3 530,370.7 531,370.7 531,373.4 532,373.4 532,372.6 533,372.6 533,372.6 534,372.6 534,373.8 535,373.8 535,374.1 536,374.1 536,374.4 537,374.4 537,374.9 538,374.9 538,375.0 539,375.0 539,376.7 540,376.7 540,375.7 541,375.7 541,377.2 542,377.2 542,376.9 543,376.9 543,375.6 544,375.6 544,376.8 545,376.8 545,377.3 546,377.3 546,378.1 547,378.1 547,380.1 548,380.1 548,379.3 549,379.3 549,377.3 550,377.3 550,376.8 551,376.8 551,373.4 552,373.4 552,373.6 553,373.6 553,372.2 554,372.2 554,370.5 555,370.5 555,371.3 556,371.3 556,368.6 557,368.6 557,368.6 558,368.6 558,369.3 559,369.3 559,369.6 560,369.6 560,369.9 561,369.9 561,371.6 562,371.6 562,372.0 563,372.0 563,373.7 564,373.7 564,375.1 565,375.1 565,376.9 566,376.9 566,378.9 567,378.9 567,380.0 568,380.0 568,381.9 569,381.9 569,382.1 570,382.1 570,382.1 571,382.1 571,382.2 572,382.2 572,382.3 573,382.3 573,382.4 574,382.4 574,382.4 575,382.4 575,382.4 576,382.4 576,381.8 577,381.8 577,380.5 578,380.5 578,378.6 579,378.6 579,377.2 580,377.2 580,375.1 581,375.1 581,375.5 582,375.5 582,375.0 583,375.0 583,376.2 584,376.2 584,374.8 585,374.8 585,375.2 586,375.2 586,374.8 587,374.8 587,377.4 588,377.4 588,379.3 589,379.3 589,380.3 590,380.3 590,380.6 591,380.6 591,381.1 592,381.1 592,381.2 593,381.2 593,381.7 594,381.7 594,381.8 595,381.8 595,382.4 596,382.4 596,382.5 597,382.5 597,382.1 598,382.1 598,381.4 599,381.4 599,381.0 600,381.0 600,380.3 601,380.3 601,380.0 602,380.0 602,379.2 603,379.2 603,379.5 604,379.5 604,378.7 605,378.7 605,379.7 606,379.7 606,379.2 607,379.2 607,379.8 608,379.8 608,380.2 609,380.2 609,380.7 610,380.7 610,381.0 611,381.0 611,381.6 612,381.6 612,382.3 613,382.3 613,382.1 614,382.1 614,381.5 615,381.5 615,380.9 616,380.9 616,380.5 617,380.5 617,379.1 618,379.1 618,378.7 619,378.7 619,378.3 620,378.3 620,378.8 621,378.8 621,379.0 622,379.0 622,378.0 623,378.0 623,379.2 624,379.2 624,378.5 625,378.5 625,379.8 626,379.8 626,379.4 627,379.4 627,378.3 628,378.3 628,376.5 629,376.5 629,376.4 630,376.4 630,374.1 631,374.1 631,374.9 632,374.9 632,374.3 633,374.3 633,374.2 634,374.2 634,373.1 635,373.1 635,371.3 636,371.3 636,371.9 637,371.9 637,369.2 638,369.2 638,369.3 639,369.3 639,367.5 640,367.5 640,368.6 641,368.6 641,367.6 642,367.6 642,370.6 643,370.6 643,370.9 644,370.9 644,373.4 645,373.4 645,377.2 646,377.2 646,378.2 647,378.2 647,380.9 648,380.9 648,381.9 649,381.9 649,381.9 650,381.9 650,382.3 651,382.3 651,382.4 652,382.4 652,382.5 653,382.5 653,381.7 654,381.7 654,380.5 655,380.5 655,379.9 656,379.9 656,378.2 657,378.2 657,378.6 658,378.6 658,378.8 659,378.8 659,379.4 660,379.4 660,379.6 661,379.6 661,379.5 662,379.5 662,379.2 663,379.2 663,379.2 664,379.2 664,378.1 665,378.1 665,377.7 666,377.7 666,378.1 667,378.1 667,377.0 668,377.0 668,376.4 669,376.4 669,376.5 670,376.5 670,376.9 671,376.9 671,376.7 672,376.7 672,376.5 673,376.5 673,375.7 674,375.7 674,376.3 675,376.3 675,376.8 676,376.8 676,376.8 677,376.8 677,377.0 678,377.0 678,376.3 679,376.3 679,376.9 680,376.9 680,376.2 681,376.2 681,376.4 682,376.4 682,377.0 683,377.0 683,377.4 684,377.4 684,376.6 685,376.6 685,376.5 686,376.5 686,376.9 687,376.9 687,376.0 688,376.0 688,375.4 689,375.4 689,373.3 690,373.3 690,373.9 691,373.9 691,374.2 692,374.2 692,373.7 693,373.7 693,371.5 694,371.5 694,374.2 695,374.2 695,376.2 696,376.2 696,377.6 697,377.6 697,378.2 698,378.2 698,379.1 699,379.1 699,379.1 700,379.1 700,380.1 701,380.1 701,380.5 702,380.5 702,381.7 703,381.7 703,382.0 704,382.0 704,382.0 705,382.0 705,382.2 706,382.2 706,382.6 707,382.6 707,382.7 708,382.7 708,382.9 709,382.9 709,382.9 710,382.9 710,382.9 711,382.9 711,382.9 712,382.9 712,382.8 713,382.8 713,382.9 714,382.9 714,382.9 715,382.9 715,382.9 716,382.9 716,382.8 717,382.8 717,382.9 718,382.9 718,382.8 719,382.8 719,382.8 720,382.8 720,382.9 721,382.9 721,382.8 722,382.8 722,382.8 723,382.8 723,382.8 724,382.8 724,382.9 725,382.9 725,382.9 726,382.9 726,382.8 727,382.8 727,382.9 728,382.9 728,382.8 729,382.8 729,382.8 730,382.8 730,382.9 731,382.9 731,382.8 732,382.8 732,382.9 733,382.9 733,382.8 734,382.8 734,382.8 735,382.8 735,382.8 736,382.8 736,382.8 737,382.8 737,382.9 738,382.9 738,382.0 739,382.0 739,380.2 740,380.2 740,378.2 741,378.2 741,375.3 742,375.3 742,375.6 743,375.6 743,375.9 744,375.9 744,375.0 745,375.0 745,375.4 746,375.4 746,375.8 747,375.8 747,377.8 748,377.8 748,377.2 749,377.2 749,377.9 750,377.9 750,379.1 751,379.1 751,379.8 752,379.8 752,380.8 753,380.8 753,380.9 754,380.9 754,380.8 755,380.8 755,381.1 756,381.1 756,380.6 757,380.6 757,380.6 758,380.6 758,381.0 759,381.0 759,381.6 760,381.6 760,382.1 761,382.1 761,382.3 762,382.3 762,382.7 763,382.7 763,382.2 764,382.2 764,381.1 765,381.1 765,379.5 766,379.5 766,377.5 767,377.5 767,376.6 768,376.6 768,374.6 769,374.6 769,374.6 770,374.6 770,373.1 771,373.1 771,374.8 772,374.8 772,374.0 773,374.0 773,372.2 774,372.2 774,370.8 775,370.8 775,370.9 776,370.9 776,371.7 777,371.7 777,373.4 778,373.4 778,372.7 779,372.7 779,374.2 780,374.2 780,374.0 781,374.0 781,375.4 782,375.4 782,376.3 783,376.3 783,376.4 784,376.4 784,377.9 785,377.9 785,378.0 786,378.0 786,378.1 787,378.1 787,378.2 788,378.2 788,377.3 789,377.3 789,377.1 790,377.1 790,377.8 791,377.8 791,378.2 792,378.2 792,378.2 793,378.2 793,378.9 794,378.9 794,379.8 795,379.8 795,380.8 796,380.8 796,381.3 797,381.3 797,382.1 798,382.1 798,382.3 799,382.3 799,382.2 800,382.2 800,382.5 801,382.5 801,381.8 802,381.8 802,380.3 803,380.3 803,378.2 804,378.2 804,377.0 805,377.0 805,375.2 806,375.2 806,377.5 807,377.5 807,376.6 808,376.6 808,377.8 809,377.8 809,378.1 810,378.1 810,378.3 811,378.3 811,379.5 812,379.5 812,379.4 813,379.4 813,380.0 814,380.0 814,380.8 815,380.8 815,380.7 816,380.7 816,381.3 817,381.3 817,381.7 818,381.7 818,382.4 819,382.4 819,382.0 820,382.0 820,381.2 821,381.2 821,380.8 822,380.8 822,380.2 823,380.2 823,378.8 824,378.8 824,378.7 825,378.7 825,378.3 826,378.3 826,378.0 827,378.0 827,378.9 828,378.9 828,377.9 829,377.9 829,378.1 830,378.1 830,378.6 831,378.6 831,378.4 832,378.4 832,378.3 833,378.3 833,378.4 834,378.4 834,378.2 835,378.2 835,377.4 836,377.4 836,377.7 837,377.7 837,377.3 838,377.3 838,377.4 839,377.4 839,376.2 840,376.2 840,375.7 841,375.7 841,376.6 842,376.6 842,375.2 843,375.2 843,376.5 844,376.5 844,375.6 845,375.6 845,375.0 846,375.0 846,375.6 847,375.6 847,376.0 848,376.0 848,374.4 849,374.4 849,375.7 850,375.7 850,374.8 851,374.8 851,375.2 852,375.2 852,376.0 853,376.0 853,376.1 854,376.1 854,375.8 855,375.8 855,376.2 856,376.2 856,375.5 857,375.5 857,376.4 858,376.4 858,374.5 859,374.5 859,375.9 860,375.9 860,374.5 861,374.5 861,374.9 862,374.9 862,375.7 863,375.7 863,374.6 864,374.6 864,374.0 865,374.0 865,375.3 866,375.3 866,373.0 867,373.0 867,374.5 868,374.5 868,373.4 869,373.4 869,374.9 870,374.9 870,374.5 871,374.5 871,374.6 872,374.6 872,376.3 873,376.3 873,375.9 874,375.9 874,376.2 875,376.2 875,377.0 876,377.0 876,376.1 877,376.1 877,375.5 878,375.5 878,375.7 879,375.7 879,374.6 880,374.6 880,375.1 881,375.1 881,375.9 882,375.9 882,373.8 883,373.8 883,374.2 884,374.2 884,375.6 885,375.6 885,373.1 886,373.1 886,373.4 887,373.4 887,373.3 888,373.3 888,375.2 889,375.2 889,374.6 890,374.6 890,374.1 891,374.1 891,375.1 892,375.1 892,375.0 893,375.0 893,375.3 894,375.3 894,376.3 895,376.3 895,375.8 896,375.8 896,373.9 897,373.9 897,374.3 898,374.3 898,373.3 899,373.3 899,373.6 900,373.6 900,372.7 901,372.7 901,372.4 902,372.4 902,374.5 903,374.5 903,373.1 904,373.1 904,374.6 905,374.6 905,376.0 906,376.0 906,376.1 907,376.1 907,377.1 908,377.1 908,376.7 909,376.7 909,377.1 910,377.1 910,377.4 911,377.4 911,377.4 912,377.4 912,378.3 913,378.3 913,377.8 914,377.8 914,377.7 915,377.7 915,378.3 916,378.3 916,378.6 917,378.6 917,378.5 918,378.5 918,378.3 919,378.3 919,378.1 920,378.1 920,377.7 921,377.7 921,378.2 922,378.2 922,377.1 923,377.1 923,377.3 924,377.3 924,377.8 925,377.8 925,379.0 926,379.0 926,379.4 927,379.4 927,379.4 928,379.4 928,379.9 929,379.9 929,380.0 930,380.0 930,380.6 931,380.6 931,380.7 932,380.7 932,381.0 933,381.0 933,380.6 934,380.6 934,380.9 935,380.9 935,381.3 936,381.3 936,381.5 937,381.5 937,382.1 938,382.1 938,382.2 939,382.2 939,382.4 940,382.4 940,382.6 941,382.6 941,382.0 942,382.0 942,380.4 943,380.4 943,379.7 944,379.7 944,378.5 945,378.5 945,377.6 946,377.6 946,378.1 947,378.1 947,378.9 948,378.9 948,379.3 949,379.3 949,379.6 950,379.6 950,379.1 951,379.1 951,379.9 952,379.9 952,380.3 953,380.3 953,380.7 954,380.7 954,381.2 955,381.2 955,382.2 956,382.2 956,382.4 957,382.4 957,381.1 958,381.1 958,380.6 959,380.6 959,379.2 960,379.2 960,377.7 961,377.7 961,376.5 962,376.5 962,376.0 963,376.0 963,376.9 964,376.9 964,377.5 965,377.5 965,377.7 966,377.7 966,378.3 967,378.3 967,379.0 968,379.0 968,379.3 969,379.3 969,379.3 970,379.3 970,379.8 971,379.8 971,380.5 972,380.5 972,380.8 973,380.8 973,381.5 974,381.5 974,382.1 975,382.1 975,382.4 976,382.4 976,382.2 977,382.2 977,381.6 978,381.6 978,380.9 979,380.9 979,379.7 980,379.7 980,379.4 981,379.4 981,378.9 982,378.9 982,378.6 983,378.6 983,378.7 984,378.7 984,379.4 985,379.4 985,379.0 986,379.0 986,378.6 987,378.6 987,379.3 988,379.3 988,379.3 989,379.3 989,379.6 990,379.6 990,379.6 991,379.6 991,379.4 992,379.4 992,379.6 993,379.6 993,380.2 994,380.2 994,380.6 995,380.6 995,381.1 996,381.1 996,381.2 997,381.2 997,381.6 998,381.6 998,382.0 999,382.0 999,382.3 1000,382.3 1000,382.5 1001,382.5 1001,382.8 1002,382.8 1002,382.8 1003,382.8 1003,382.7 1004,382.7 1004,382.7 1005,382.7 1005,382.7 1006,382.7 1006,382.6 1007,382.6 1007,382.6 1008,382.6 1008,382.5 1009,382.5 1009,382.5 1010,382.5 1010,382.4 1011,382.4 1011,381.9 1012,381.9 1012,381.4 1013,381.4 1013,381.2 1014,381.2 1014,380.4 1015,380.4 1015,379.6 1016,379.6 1016,380.3 1017,380.3 1017,380.3 1018,380.3 1018,380.8 1019,380.8 1019,381.2 1020,381.2 1020,381.5 1021,381.5 1021,381.6 1022,381.6 1022,382.1 1023,382.1 1023,382.2 1024,382.2 1024,382.4 1025,382.4 1025,382.8 1026,382.8 1026,382.8 1027,382.8 1027,382.8 1028,382.8 1028,382.5 1029,382.5 1029,382.6 1030,382.6 1030,382.4 1031,382.4 1031,382.5 1032,382.5 1032,382.4 1033,382.4 1033,382.6 1034,382.6 1034,382.5 1035,382.5 1035,382.6 1036,382.6 1036,382.6 1037,382.6 1037,382.6 1038,382.6 1038,382.7 1039,382.7 1039,382.8 1040,382.8 1040,382.9 1041,382.9 1041,382.8 1042,382.8 1042,382.6 1043,382.6 1043,382.6 1044,382.6 1044,382.5 1045,382.5 1045,382.5 1046,382.5 1046,382.2 1047,382.2 1047,382.1 1048,382.1 1048,381.2 1049,381.2 1049,380.4 1050,380.4 1050,379.5 1051,379.5 1051,378.3 1052,378.3 1052,378.4 1053,378.4 1053,376.2 1054,376.2 1054,377.3 1055,377.3 1055,376.6 1056,376.6 1056,377.8 1057,377.8 1057,378.5 1058,378.5 1058,379.1 1059,379.1 1059,379.3 1060,379.3 1060,379.6 1061,379.6 1061,380.4 1062,380.4 1062,380.8 1063,380.8 1063,380.8 1064,380.8 1064,381.4 1065,381.4 1065,382.3 1066,382.3 1066,382.5 1067,382.5 1067,382.3 1068,382.3 1068,382.5 1069,382.5 1069,382.5 1070,382.5 1070,382.4 1071,382.4 1071,381.6 1072,381.6 1072,381.6 1073,381.6 1073,380.9 1074,380.9 1074,380.3 1075,380.3 1075,380.4 1076,380.4 1076,380.6 1077,380.6 1077,380.9 1078,380.9 1078,380.8 1079,380.8 1079,381.1 1080,381.1 1080,381.6 1081,381.6 1081,381.9 1082,381.9 1082,382.3 1083,382.3 1083,382.6 1084,382.6 1084,381.4 1085,381.4 1085,380.4 1086,380.4 1086,379.4 1087,379.4 1087,378.4 1088,378.4 1088,376.3 1089,376.3 1089,375.0 1090,375.0 1090,373.9 1091,373.9 1091,375.8 1092,375.8 1092,375.4 1093,375.4 1093,375.8 1094,375.8 1094,376.8 1095,376.8 1095,376.9 1096,376.9 1096,377.9 1097,377.9 1097,379.2 1098,379.2 1098,379.7 1099,379.7 1099,380.7 1100,380.7 1100,382.0 1101,382.0 1101,382.2 1102,382.2 1102,382.2 1103,382.2 1103,382.4 1104,382.4 1104,382.3 1105,382.3 1105,382.6 1106,382.6 1106,382.6 1107,382.6 1107,382.7 1108,382.7 1108,382.7 1109,382.7 1109,382.9 1110,382.9 1110,382.8 1111,382.8 1111,382.9 1112,382.9 1112,382.8 1113,382.8 1113,382.8 1114,382.8 1114,382.8 1115,382.8 1115,382.9 1116,382.9 1116,382.8 1117,382.8 1117,382.8 1118,382.8 1118,382.8 1119,382.8 1119,382.8 1120,382.8 1120,382.9 1121,382.9 1121,382.8 1122,382.8 1122,382.9 1123,382.9 1123,382.8 1124,382.8 1124,382.9 1125,382.9 1125,382.9 1126,382.9 1126,382.8 1127,382.8 1127,382.9 1128,382.9 1128,382.9 1129,382.9 1129,382.9 1130,382.9 1130,382.8 1131,382.8 1131,382.9 1132,382.9 1132,382.8 1133,382.8 1133,382.9 1134,382.9 1134,382.9 1135,382.9 1135,382.9 1136,382.9 1136,382.9 1137,382.9 1137,382.8 1138,382.8 1138,382.9 1139,382.9 1139,382.9 1140,382.9 1140,384.1 1139,384.1 1139,384.1 1138,384.1 1138,384.2 1137,384.2 1137,384.1 1136,384.1 1136,384.1 1135,384.1 1135,384.1 1134,384.1 1134,384.1 1133,384.1 1133,384.2 1132,384.2 1132,384.1 1131,384.1 1131,384.2 1130,384.2 1130,384.1 1129,384.1 1129,384.1 1128,384.1 1128,384.1 1127,384.1 1127,384.2 1126,384.2 1126,384.1 1125,384.1 1125,384.1 1124,384.1 1124,384.2 1123,384.2 1123,384.1 1122,384.1 1122,384.2 1121,384.2 1121,384.1 1120,384.1 1120,384.2 1119,384.2 1119,384.2 1118,384.2 1118,384.2 1117,384.2 1117,384.2 1116,384.2 1116,384.1 1115,384.1 1115,384.2 1114,384.2 1114,384.2 1113,384.2 1113,384.2 1112,384.2 1112,384.1 1111,384.1 1111,384.2 1110,384.2 1110,384.1 1109,384.1 1109,384.3 1108,384.3 1108,384.3 1107,384.3 1107,384.4 1106,384.4 1106,384.4 1105,384.4 1105,384.7 1104,384.7 1104,384.6 1103,384.6 1103,384.8 1102,384.8 1102,384.8 1101,384.8 1101,385.0 1100,385.0 1100,386.3 1099,386.3 1099,387.3 1098,387.3 1098,387.8 1097,387.8 1097,389.1 1096,389.1 1096,390.1 1095,390.1 1095,390.2 1094,390.2 1094,391.2 1093,391.2 1093,391.6 1092,391.6 1092,391.2 1091,391.2 1091,393.1 1090,393.1 1090,392.0 1089,392.0 1089,390.7 1088,390.7 1088,388.6 1087,388.6 1087,387.6 1086,387.6 1086,386.6 1085,386.6 1085,385.6 1084,385.6 1084,384.4 1083,384.4 1083,384.7 1082,384.7 1082,385.1 1081,385.1 1081,385.4 1080,385.4 1080,385.9 1079,385.9 1079,386.2 1078,386.2 1078,386.1 1077,386.1 1077,386.4 1076,386.4 1076,386.6 1075,386.6 1075,386.7 1074,386.7 1074,386.1 1073,386.1 1073,385.4 1072,385.4 1072,385.4 1071,385.4 1071,384.6 1070,384.6 1070,384.5 1069,384.5 1069,384.5 1068,384.5 1068,384.7 1067,384.7 1067,384.5 1066,384.5 1066,384.7 1065,384.7 1065,385.6 1064,385.6 1064,386.2 1063,386.2 1063,386.2 1062,386.2 1062,386.6 1061,386.6 1061,387.4 1060,387.4 1060,387.7 1059,387.7 1059,387.9 1058,387.9 1058,388.5 1057,388.5 1057,389.2 1056,389.2 1056,390.4 1055,390.4 1055,389.7 1054,389.7 1054,390.8 1053,390.8 1053,388.6 1052,388.6 1052,388.7 1051,388.7 1051,387.5 1050,387.5 1050,386.6 1049,386.6 1049,385.8 1048,385.8 1048,384.9 1047,384.9 1047,384.8 1046,384.8 1046,384.5 1045,384.5 1045,384.5 1044,384.5 1044,384.4 1043,384.4 1043,384.4 1042,384.4 1042,384.2 1041,384.2 1041,384.1 1040,384.1 1040,384.2 1039,384.2 1039,384.3 1038,384.3 1038,384.4 1037,384.4 1037,384.4 1036,384.4 1036,384.4 1035,384.4 1035,384.5 1034,384.5 1034,384.4 1033,384.4 1033,384.6 1032,384.6 1032,384.5 1031,384.5 1031,384.6 1030,384.6 1030,384.4 1029,384.4 1029,384.5 1028,384.5 1028,384.2 1027,384.2 1027,384.2 1026,384.2 1026,384.2 1025,384.2 1025,384.6 1024,384.6 1024,384.8 1023,384.8 1023,384.9 1022,384.9 1022,385.4 1021,385.4 1021,385.5 1020,385.5 1020,385.8 1019,385.8 1019,386.2 1018,386.2 1018,386.7 1017,386.7 1017,386.7 1016,386.7 1016,387.4 1015,387.4 1015,386.6 1014,386.6 1014,385.8 1013,385.8 1013,385.6 1012,385.6 1012,385.1 1011,385.1 1011,384.6 1010,384.6 1010,384.5 1009,384.5 1009,384.5 1008,384.5 1008,384.4 1007,384.4 1007,384.4 1006,384.4 1006,384.3 1005,384.3 1005,384.3 1004,384.3 1004,384.3 1003,384.3 1003,384.2 1002,384.2 1002,384.2 1001,384.2 1001,384.5 1000,384.5 1000,384.7 999,384.7 999,385.0 998,385.0 998,385.4 997,385.4 997,385.8 996,385.8 996,385.9 995,385.9 995,386.4 994,386.4 994,386.8 993,386.8 993,387.4 992,387.4 992,387.6 991,387.6 991,387.4 990,387.4 990,387.4 989,387.4 989,387.7 988,387.7 988,387.7 987,387.7 987,388.4 986,388.4 986,388.0 985,388.0 985,387.6 984,387.6 984,388.3 983,388.3 983,388.4 982,388.4 982,388.1 981,388.1 981,387.6 980,387.6 980,387.3 979,387.3 979,386.1 978,386.1 978,385.4 977,385.4 977,384.8 976,384.8 976,384.6 975,384.6 975,384.9 974,384.9 974,385.5 973,385.5 973,386.2 972,386.2 972,386.5 971,386.5 971,387.2 970,387.2 970,387.7 969,387.7 969,387.7 968,387.7 968,388.0 967,388.0 967,388.7 966,388.7 966,389.3 965,389.3 965,389.5 964,389.5 964,390.1 963,390.1 963,391.0 962,391.0 962,390.5 961,390.5 961,389.3 960,389.3 960,387.8 959,387.8 959,386.4 958,386.4 958,385.9 957,385.9 957,384.6 956,384.6 956,384.8 955,384.8 955,385.8 954,385.8 954,386.3 953,386.3 953,386.7 952,386.7 952,387.1 951,387.1 951,387.9 950,387.9 950,387.4 949,387.4 949,387.7 948,387.7 948,388.1 947,388.1 947,388.9 946,388.9 946,389.4 945,389.4 945,388.5 944,388.5 944,387.3 943,387.3 943,386.6 942,386.6 942,385.0 941,385.0 941,384.4 940,384.4 940,384.6 939,384.6 939,384.8 938,384.8 938,384.9 937,384.9 937,385.5 936,385.5 936,385.7 935,385.7 935,386.1 934,386.1 934,386.4 933,386.4 933,386.0 932,386.0 932,386.3 931,386.3 931,386.4 930,386.4 930,387.0 929,387.0 929,387.1 928,387.1 928,387.6 927,387.6 927,387.6 926,387.6 926,388.0 925,388.0 925,389.2 924,389.2 924,389.7 923,389.7 923,389.9 922,389.9 922,388.8 921,388.8 921,389.3 920,389.3 920,388.9 919,388.9 919,388.7 918,388.7 918,388.5 917,388.5 917,388.4 916,388.4 916,388.7 915,388.7 915,389.3 914,389.3 914,389.2 913,389.2 913,388.7 912,388.7 912,389.6 911,389.6 911,389.6 910,389.6 910,389.9 909,389.9 909,390.3 908,390.3 908,389.9 907,389.9 907,390.9 906,390.9 906,391.0 905,391.0 905,392.4 904,392.4 904,393.9 903,393.9 903,392.5 902,392.5 902,394.6 901,394.6 901,394.3 900,394.3 900,393.4 899,393.4 899,393.7 898,393.7 898,392.7 897,392.7 897,393.1 896,393.1 896,391.2 895,391.2 895,390.7 894,390.7 894,391.7 893,391.7 893,392.0 892,392.0 892,391.9 891,391.9 891,392.9 890,392.9 890,392.4 889,392.4 889,391.8 888,391.8 888,393.7 887,393.7 887,393.6 886,393.6 886,393.9 885,393.9 885,391.4 884,391.4 884,392.8 883,392.8 883,393.2 882,393.2 882,391.1 881,391.1 881,391.9 880,391.9 880,392.4 879,392.4 879,391.3 878,391.3 878,391.5 877,391.5 877,390.9 876,390.9 876,390.0 875,390.0 875,390.8 874,390.8 874,391.1 873,391.1 873,390.7 872,390.7 872,392.4 871,392.4 871,392.5 870,392.5 870,392.1 869,392.1 869,393.6 868,393.6 868,392.5 867,392.5 867,394.0 866,394.0 866,391.7 865,391.7 865,393.0 864,393.0 864,392.4 863,392.4 863,391.3 862,391.3 862,392.1 861,392.1 861,392.5 860,392.5 860,391.1 859,391.1 859,392.5 858,392.5 858,390.6 857,390.6 857,391.5 856,391.5 856,390.8 855,390.8 855,391.2 854,391.2 854,390.9 853,390.9 853,391.0 852,391.0 852,391.8 851,391.8 851,392.2 850,392.2 850,391.3 849,391.3 849,392.6 848,392.6 848,391.0 847,391.0 847,391.4 846,391.4 846,392.0 845,392.0 845,391.4 844,391.4 844,390.5 843,390.5 843,391.8 842,391.8 842,390.4 841,390.4 841,391.3 840,391.3 840,390.8 839,390.8 839,389.6 838,389.6 838,389.7 837,389.7 837,389.3 836,389.3 836,389.6 835,389.6 835,388.8 834,388.8 834,388.6 833,388.6 833,388.7 832,388.7 832,388.6 831,388.6 831,388.4 830,388.4 830,388.9 829,388.9 829,389.1 828,389.1 828,388.1 827,388.1 827,389.0 826,389.0 826,388.7 825,388.7 825,388.3 824,388.3 824,388.2 823,388.2 823,386.8 822,386.8 822,386.2 821,386.2 821,385.8 820,385.8 820,385.0 819,385.0 819,384.6 818,384.6 818,385.3 817,385.3 817,385.7 816,385.7 816,386.3 815,386.3 815,386.2 814,386.2 814,387.0 813,387.0 813,387.6 812,387.6 812,387.5 811,387.5 811,388.7 810,388.7 810,388.9 809,388.9 809,389.2 808,389.2 808,390.4 807,390.4 807,389.5 806,389.5 806,391.8 805,391.8 805,390.0 804,390.0 804,388.8 803,388.8 803,386.7 802,386.7 802,385.2 801,385.2 801,384.5 800,384.5 800,384.8 799,384.8 799,384.7 798,384.7 798,384.9 797,384.9 797,385.7 796,385.7 796,386.2 795,386.2 795,387.2 794,387.2 794,388.1 793,388.1 793,388.8 792,388.8 792,388.8 791,388.8 791,389.2 790,389.2 790,389.9 789,389.9 789,389.7 788,389.7 788,388.8 787,388.8 787,388.9 786,388.9 786,389.0 785,389.0 785,389.1 784,389.1 784,390.6 783,390.6 783,390.7 782,390.7 782,391.6 781,391.6 781,393.0 780,393.0 780,392.8 779,392.8 779,394.3 778,394.3 778,393.6 777,393.6 777,395.3 776,395.3 776,396.1 775,396.1 775,396.2 774,396.2 774,394.8 773,394.8 773,393.0 772,393.0 772,392.2 771,392.2 771,393.9 770,393.9 770,392.4 769,392.4 769,392.4 768,392.4 768,390.4 767,390.4 767,389.5 766,389.5 766,387.5 765,387.5 765,385.9 764,385.9 764,384.8 763,384.8 763,384.3 762,384.3 762,384.7 761,384.7 761,384.9 760,384.9 760,385.4 759,385.4 759,386.0 758,386.0 758,386.4 757,386.4 757,386.4 756,386.4 756,385.9 755,385.9 755,386.2 754,386.2 754,386.1 753,386.1 753,386.2 752,386.2 752,387.2 751,387.2 751,387.9 750,387.9 750,389.1 749,389.1 749,389.8 748,389.8 748,389.2 747,389.2 747,391.2 746,391.2 746,391.6 745,391.6 745,392.0 744,392.0 744,391.1 743,391.1 743,391.4 742,391.4 742,391.7 741,391.7 741,388.8 740,388.8 740,386.8 739,386.8 739,385.0 738,385.0 738,384.1 737,384.1 737,384.2 736,384.2 736,384.2 735,384.2 735,384.2 734,384.2 734,384.2 733,384.2 733,384.1 732,384.1 732,384.2 731,384.2 731,384.1 730,384.1 730,384.2 729,384.2 729,384.2 728,384.2 728,384.1 727,384.1 727,384.2 726,384.2 726,384.1 725,384.1 725,384.1 724,384.1 724,384.2 723,384.2 723,384.2 722,384.2 722,384.2 721,384.2 721,384.1 720,384.1 720,384.2 719,384.2 719,384.2 718,384.2 718,384.1 717,384.1 717,384.2 716,384.2 716,384.1 715,384.1 715,384.1 714,384.1 714,384.1 713,384.1 713,384.2 712,384.2 712,384.1 711,384.1 711,384.1 710,384.1 710,384.1 709,384.1 709,384.1 708,384.1 708,384.3 707,384.3 707,384.4 706,384.4 706,384.8 705,384.8 705,385.0 704,385.0 704,385.0 703,385.0 703,385.3 702,385.3 702,386.5 701,386.5 701,386.9 700,386.9 700,387.9 699,387.9 699,387.9 698,387.9 698,388.8 697,388.8 697,389.4 696,389.4 696,390.8 695,390.8 695,392.8 694,392.8 694,395.5 693,395.5 693,393.3 692,393.3 692,392.8 691,392.8 691,393.1 690,393.1 690,393.7 689,393.7 689,391.6 688,391.6 688,391.0 687,391.0 687,390.1 686,390.1 686,390.5 685,390.5 685,390.4 684,390.4 684,389.6 683,389.6 683,390.0 682,390.0 682,390.6 681,390.6 681,390.8 680,390.8 680,390.1 679,390.1 679,390.7 678,390.7 678,390.0 677,390.0 677,390.2 676,390.2 676,390.2 675,390.2 675,390.7 674,390.7 674,391.3 673,391.3 673,390.5 672,390.5 672,390.3 671,390.3 671,390.1 670,390.1 670,390.5 669,390.5 669,390.6 668,390.6 668,390.0 667,390.0 667,388.9 666,388.9 666,389.3 665,389.3 665,388.9 664,388.9 664,387.8 663,387.8 663,387.8 662,387.8 662,387.5 661,387.5 661,387.4 660,387.4 660,387.6 659,387.6 659,388.2 658,388.2 658,388.4 657,388.4 657,388.8 656,388.8 656,387.1 655,387.1 655,386.5 654,386.5 654,385.3 653,385.3 653,384.5 652,384.5 652,384.6 651,384.6 651,384.7 650,384.7 650,385.1 649,385.1 649,385.1 648,385.1 648,386.1 647,386.1 647,388.8 646,388.8 646,389.8 645,389.8 645,393.6 644,393.6 644,396.1 643,396.1 643,396.4 642,396.4 642,399.4 641,399.4 641,398.4 640,398.4 640,399.5 639,399.5 639,397.7 638,397.7 638,397.8 637,397.8 637,395.1 636,395.1 636,395.7 635,395.7 635,393.9 634,393.9 634,392.8 633,392.8 633,392.7 632,392.7 632,392.1 631,392.1 631,392.9 630,392.9 630,390.6 629,390.6 629,390.5 628,390.5 628,388.7 627,388.7 627,387.6 626,387.6 626,387.2 625,387.2 625,388.5 624,388.5 624,387.8 623,387.8 623,389.0 622,389.0 622,388.0 621,388.0 621,388.2 620,388.2 620,388.7 619,388.7 619,388.3 618,388.3 618,387.9 617,387.9 617,386.5 616,386.5 616,386.1 615,386.1 615,385.5 614,385.5 614,384.9 613,384.9 613,384.7 612,384.7 612,385.4 611,385.4 611,386.0 610,386.0 610,386.3 609,386.3 609,386.8 608,386.8 608,387.2 607,387.2 607,387.8 606,387.8 606,387.3 605,387.3 605,388.3 604,388.3 604,387.5 603,387.5 603,387.8 602,387.8 602,387.0 601,387.0 601,386.7 600,386.7 600,386.0 599,386.0 599,385.6 598,385.6 598,384.9 597,384.9 597,384.5 596,384.5 596,384.6 595,384.6 595,385.2 594,385.2 594,385.3 593,385.3 593,385.8 592,385.8 592,385.9 591,385.9 591,386.4 590,386.4 590,386.7 589,386.7 589,387.7 588,387.7 588,389.6 587,389.6 587,392.2 586,392.2 586,391.8 585,391.8 585,392.2 584,392.2 584,390.8 583,390.8 583,392.0 582,392.0 582,391.5 581,391.5 581,391.9 580,391.9 580,389.8 579,389.8 579,388.4 578,388.4 578,386.5 577,386.5 577,385.2 576,385.2 576,384.6 575,384.6 575,384.6 574,384.6 574,384.6 573,384.6 573,384.7 572,384.7 572,384.8 571,384.8 571,384.9 570,384.9 570,384.9 569,384.9 569,385.1 568,385.1 568,387.0 567,387.0 567,388.1 566,388.1 566,390.1 565,390.1 565,391.9 564,391.9 564,393.3 563,393.3 563,395.0 562,395.0 562,395.4 561,395.4 561,397.1 560,397.1 560,397.4 559,397.4 559,397.7 558,397.7 558,398.4 557,398.4 557,398.4 556,398.4 556,395.7 555,395.7 555,396.5 554,396.5 554,394.8 553,394.8 553,393.4 552,393.4 552,393.6 551,393.6 551,390.2 550,390.2 550,389.7 549,389.7 549,387.7 548,387.7 548,386.9 547,386.9 547,388.9 546,388.9 546,389.7 545,389.7 545,390.2 544,390.2 544,391.4 543,391.4 543,390.1 542,390.1 542,389.8 541,389.8 541,391.3 540,391.3 540,390.3 539,390.3 539,392.0 538,392.0 538,392.1 537,392.1 537,392.6 536,392.6 536,392.9 535,392.9 535,393.2 534,393.2 534,394.4 533,394.4 533,394.4 532,394.4 532,393.6 531,393.6 531,396.3 530,396.3 530,396.7 529,396.7 529,396.3 528,396.3 528,396.8 527,396.8 527,397.2 526,397.2 526,397.3 525,397.3 525,399.1 524,399.1 524,399.5 523,399.5 523,396.5 522,396.5 522,394.9 521,394.9 521,390.0 520,390.0 520,385.8 519,385.8 519,384.1 518,384.1 518,384.1 517,384.1 517,384.1 516,384.1 516,384.2 515,384.2 515,384.2 514,384.2 514,384.7 513,384.7 513,385.0 512,385.0 512,385.2 511,385.2 511,385.4 510,385.4 510,385.9 509,385.9 509,386.2 508,386.2 508,386.5 507,386.5 507,387.7 506,387.7 506,388.3 505,388.3 505,388.3 504,388.3 504,388.1 503,388.1 503,389.3 502,389.3 502,389.5 501,389.5 501,390.6 500,390.6 500,390.6 499,390.6 499,390.4 498,390.4 498,390.6 497,390.6 497,391.9 496,391.9 496,393.2 495,393.2 495,393.3 494,393.3 494,392.7 493,392.7 493,393.9 492,393.9 492,391.9 491,391.9 491,393.1 490,393.1 490,393.0 489,393.0 489,394.4 488,394.4 488,392.1 487,392.1 487,393.0 486,393.0 486,393.3 485,393.3 485,396.4 484,396.4 484,395.2 483,395.2 483,397.8 482,397.8 482,395.8 481,395.8 481,395.1 480,395.1 480,392.3 479,392.3 479,392.5 478,392.5 478,386.7 477,386.7 477,384.2 476,384.2 476,384.2 475,384.2 475,384.2 474,384.2 474,384.2 473,384.2 473,384.2 472,384.2 472,384.2 471,384.2 471,384.2 470,384.2 470,384.2 469,384.2 469,384.1 468,384.1 468,384.1 467,384.1 467,384.1 466,384.1 466,384.2 465,384.2 465,384.1 464,384.1 464,384.2 463,384.2 463,384.1 462,384.1 462,384.1 461,384.1 461,384.1 460,384.1 460,384.2 459,384.2 459,384.2 458,384.2 458,384.1 457,384.1 457,384.1 456,384.1 456,384.1 455,384.1 455,384.1 454,384.1 454,384.1 453,384.1 453,384.1 452,384.1 452,384.1 451,384.1 451,384.1 450,384.1 450,384.2 449,384.2 449,384.1 448,384.1 448,384.2 447,384.2 447,384.1 446,384.1 446,384.2 445,384.2" fill="#6464dc"/></svg>
<svg style="left:0;top:0" width="1366" height="708"><polygon points="445,531.5 446,531.5 446,532.3 447,532.3 447,532.3 448,532.3 448,532.4 449,532.4 449,532.0 450,532.0 450,532.3 451,532.3 451,532.2 452,532.2 452,532.3 453,532.3 453,532.0 454,532.0 454,532.3 455,532.3 455,531.6 456,531.6 456,532.0 457,532.0 457,531.5 458,531.5 458,531.4 459,531.4 459,531.5 460,531.5 460,531.6 461,531.6 461,531.6 462,531.6 462,531.6 463,531.6 463,531.8 464,531.8 464,531.8 465,531.8 465,531.8 466,531.8 466,532.5 467,532.5 467,531.7 468,531.7 468,531.9 469,531.9 469,531.6 470,531.6 470,531.7 471,531.7 471,531.5 472,531.5 472,531.8 473,531.8 473,531.6 474,531.6 474,531.9 475,531.9 475,531.8 476,531.8 476,531.6 477,531.6 477,528.8 478,528.8 478,520.5 479,520.5 479,512.3 480,512.3 480,513.5 481,513.5 481,511.0 482,511.0 482,505.4 483,505.4 483,502.8 484,502.8 484,511.1 485,511.1 485,517.5 486,517.5 486,515.2 487,515.2 487,512.3 488,512.3 488,509.0 489,509.0 489,506.7 490,506.7 490,510.2 491,510.2 491,518.6 492,518.6 492,512.5 493,512.5 493,510.8 494,510.8 494,514.5 495,514.5 495,519.5 496,519.5 496,509.5 497,509.5 497,512.2 498,512.2 498,515.4 499,515.4 499,515.1 500,515.1 500,515.0 501,515.0 501,525.6 502,525.6 502,521.1 503,521.1 503,520.8 504,520.8 504,523.4 505,523.4 505,526.8 506,526.8 506,524.8 507,524.8 507,525.8 508,525.8 508,526.8 509,526.8 509,527.9 510,527.9 510,529.8 511,529.8 511,529.4 512,529.4 512,529.8 513,529.8 513,531.2 514,531.2 514,531.4 515,531.4 515,531.4 516,531.4 516,532.3 517,532.3 517,531.8 518,531.8 518,531.5 519,531.5 519,526.2 520,526.2 520,518.6 521,518.6 521,503.5 522,503.5 522,503.2 523,503.2 523,494.8 524,494.8 524,489.9 525,489.9 525,502.1 526,502.1 526,503.4 527,503.4 527,501.9 528,501.9 528,500.7 529,500.7 529,499.4 530,499.4 530,500.7 531,500.7 531,514.7 532,514.7 532,511.7 533,511.7 533,508.1 534,508.1 534,513.9 535,513.9 535,517.3 536,517.3 536,510.0 537,510.0 537,517.3 538,517.3 538,521.9 539,521.9 539,516.2 540,516.2 540,523.4 541,523.4 541,523.3 542,523.3 542,522.2 543,522.2 543,523.0 544,523.0 544,525.7 545,525.7 545,525.2 546,525.2 546,527.6 547,527.6 547,524.9 548,524.9 548,526.4 549,526.4 549,521.7 550,521.7 550,509.9 551,509.9 551,504.6 552,504.6 552,515.9 553,515.9 553,502.4 554,502.4 554,499.3 555,499.3 555,508.8 556,508.8 556,501.7 557,501.7 557,491.5 558,491.5 558,497.1 559,497.1 559,496.1 560,496.1 560,504.8 561,504.8 561,510.0 562,510.0 562,512.4 563,512.4 563,517.1 564,517.1 564,519.3 565,519.3 565,522.1 566,522.1 566,519.5 567,519.5 567,525.2 568,525.2 568,528.5 569,528.5 569,530.0 570,530.0 570,530.0 571,530.0 571,530.4 572,530.4 572,529.6 573,529.6 573,531.0 574,531.0 574,531.2 575,531.2 575,530.7 576,530.7 576,529.5 577,529.5 577,524.9 578,524.9 578,519.9 579,519.9 579,520.1 580,520.1 580,514.2 581,514.2 581,517.7 582,517.7 582,512.4 583,512.4 583,515.0 584,515.0 584,516.0 585,516.0 585,517.7 586,517.7 586,512.1 587,512.1 587,515.6 588,515.6 588,526.0 589,526.0 589,526.0 590,526.0 590,524.5 591,524.5 591,527.4 592,527.4 592,526.9 593,526.9 593,528.7 594,528.7 594,528.7 595,528.7 595,530.6 596,530.6 596,531.3 597,531.3 597,528.8 598,528.8 598,528.3 599,528.3 599,529.6 600,529.6 600,525.4 601,525.4 601,523.6 602,523.6 602,524.7 603,524.7 603,519.6 604,519.6 604,523.4 605,523.4 605,523.1 606,523.1 606,523.8 607,523.8 607,526.4 608,526.4 608,527.0 609,527.0 609,529.4 610,529.4 610,528.7 611,528.7 611,530.2 612,530.2 612,530.1 613,530.1 613,531.4 614,531.4 614,530.4 615,530.4 615,527.8 616,527.8 616,527.5 617,527.5 617,524.0 618,524.0 618,522.9 619,522.9 619,522.6 620,522.6 620,521.8 621,521.8 621,521.7 622,521.7 622,525.6 623,525.6 623,524.7 624,524.7 624,522.0 625,522.0 625,523.4 626,523.4 626,521.2 627,521.2 627,523.9 628,523.9 628,520.0 629,520.0 629,521.0 630,521.0 630,510.2 631,510.2 631,502.6 632,502.6 632,500.8 633,500.8 633,509.4 634,509.4 634,490.4 635,490.4 635,487.6 636,487.6 636,497.2 637,497.2 637,490.0 638,490.0 638,509.3 639,509.3 639,485.8 640,485.8 640,480.4 641,480.4 641,484.1 642,484.1 642,490.4 643,490.4 643,510.1 644,510.1 644,511.7 645,511.7 645,511.8 646,511.8 646,522.5 647,522.5 647,526.5 648,526.5 648,530.3 649,530.3 649,529.5 650,529.5 650,531.1 651,531.1 651,530.3 652,530.3 652,531.5 653,531.5 653,528.2 654,528.2 654,526.0 655,526.0 655,523.8 656,523.8 656,521.0 657,521.0 657,523.7 658,523.7 658,518.2 659,518.2 659,518.9 660,518.9 660,523.4 661,523.4 661,523.7 662,523.7 662,524.1 663,524.1 663,519.5 664,519.5 664,521.8 665,521.8 665,520.2 666,520.2 666,517.6 667,517.6 667,520.8 668,520.8 668,523.0 669,523.0 669,514.2 670,514.2 670,517.3 671,517.3 671,516.4 672,516.4 672,516.7 673,516.7 673,515.1 674,515.1 674,517.8 675,517.8 675,521.4 676,521.4 676,514.6 677,514.6 677,519.8 678,519.8 678,518.4 679,518.4 679,523.0 680,523.0 680,521.6 681,521.6 681,520.2 682,520.2 682,514.6 683,514.6 683,517.6 684,517.6 684,516.3 685,516.3 685,516.9 686,516.9 686,518.4 687,518.4 687,513.6 688,513.6 688,519.6 689,519.6 689,506.8 690,506.8 690,504.3 691,504.3 691,503.6 692,503.6 692,515.3 693,515.3 693,512.8 694,512.8 694,507.0 695,507.0 695,513.5 696,513.5 696,519.4 697,519.4 697,518.6 698,518.6 698,522.5 699,522.5 699,523.7 700,523.7 700,526.3 701,526.3 701,528.4 702,528.4 702,529.6 703,529.6 703,530.3 704,530.3 704,530.6 705,530.6 705,531.3 706,531.3 706,531.5 707,531.5 707,532.2 708,532.2 708,531.7 709,531.7 709,532.1 710,532.1 710,531.4 711,531.4 711,532.0 712,532.0 712,532.0 713,532.0 713,531.6 714,531.6 714,532.5 715,532.5 715,531.9 716,531.9 716,531.7 717,531.7 717,531.6 718,531.6 718,531.4 719,531.4 719,531.8 720,531.8 720,531.8 721,531.8 721,532.1 722,532.1 722,531.7 723,531.7 723,531.8 724,531.8 724,531.6 725,531.6 725,531.7 726,531.7 726,531.6 727,531.6 727,531.4 728,531.4 728,531.8 729,531.8 729,531.6 730,531.6 730,531.5 731,531.5 731,531.4 732,531.4 732,532.1 733,532.1 733,531.8 734,531.8 734,532.4 735,532.4 735,531.8 736,531.8 736,531.7 737,531.7 737,532.2 738,532.2 738,530.7 739,530.7 739,525.9 740,525.9 740,518.6 741,518.6 741,518.8 742,518.8 742,517.4 743,517.4 743,515.2 744,515.2 744,511.6 745,511.6 745,518.1 746,518.1 746,515.5 747,515.5 747,521.7 748,521.7 748,519.1 749,519.1 749,517.1 750,517.1 750,523.8 751,523.8 751,523.6 752,523.6 752,525.1 753,525.1 753,527.4 754,527.4 754,528.1 755,528.1 755,527.7 756,527.7 756,525.5 757,525.5 757,527.6 758,527.6 758,527.4 759,527.4 759,528.5 760,528.5 760,530.0 761,530.0 761,530.2 762,530.2 762,531.6 763,531.6 763,531.1 764,531.1 764,526.2 765,526.2 765,525.8 766,525.8 766,517.3 767,517.3 767,517.1 768,517.1 768,510.5 769,510.5 769,514.7 770,514.7 770,508.8 771,508.8 771,503.0 772,503.0 772,514.9 773,514.9 773,512.7 774,512.7 774,502.3 775,502.3 775,499.1 776,499.1 776,511.1 777,511.1 777,506.3 778,506.3 778,515.6 779,515.6 779,509.2 780,509.2 780,510.7 781,510.7 781,516.3 782,516.3 782,515.2 783,515.2 783,516.2 784,516.2 784,521.9 785,521.9 785,520.2 786,520.2 786,519.5 787,519.5 787,524.8 788,524.8 788,516.4 789,516.4 789,513.8 790,513.8 790,520.7 791,520.7 791,514.5 792,514.5 792,519.8 793,519.8 793,523.4 794,523.4 794,524.2 795,524.2 795,528.3 796,528.3 796,527.8 797,527.8 797,530.8 798,530.8 798,530.7 799,530.7 799,530.6 800,530.6 800,531.3 801,531.3 801,528.3 802,528.3 802,525.4 803,525.4 803,520.5 804,520.5 804,522.3 805,522.3 805,516.5 806,516.5 806,518.4 807,518.4 807,518.0 808,518.0 808,524.6 809,524.6 809,523.7 810,523.7 810,522.5 811,522.5 811,524.5 812,524.5 812,525.8 813,525.8 813,526.3 814,526.3 814,525.8 815,525.8 815,530.0 816,530.0 816,528.4 817,528.4 817,529.4 818,529.4 818,531.2 819,531.2 819,530.1 820,530.1 820,529.4 821,529.4 821,528.2 822,528.2 822,522.7 823,522.7 823,519.4 824,519.4 824,523.1 825,523.1 825,525.3 826,525.3 826,520.7 827,520.7 827,522.3 828,522.3 828,524.1 829,524.1 829,523.7 830,523.7 830,520.3 831,520.3 831,518.6 832,518.6 832,520.0 833,520.0 833,519.4 834,519.4 834,519.2 835,519.2 835,521.2 836,521.2 836,514.1 837,514.1 837,516.7 838,516.7 838,518.4 839,518.4 839,520.6 840,520.6 840,514.0 841,514.0 841,513.4 842,513.4 842,513.8 843,513.8 843,518.9 844,518.9 844,511.7 845,511.7 845,514.7 846,514.7 846,518.8 847,518.8 847,517.5 848,517.5 848,519.8 849,519.8 849,520.0 850,520.0 850,510.8 851,510.8 851,512.6 852,512.6 852,513.1 853,513.1 853,512.2 854,512.2 854,512.6 855,512.6 855,516.9 856,516.9 856,518.3 857,518.3 857,514.4 858,514.4 858,514.0 859,514.0 859,516.7 860,516.7 860,510.1 861,510.1 861,512.2 862,512.2 862,512.2 863,512.2 863,516.6 864,516.6 864,518.2 865,518.2 865,510.7 866,510.7 866,517.8 867,517.8 867,515.3 868,515.3 868,513.6 869,513.6 869,511.1 870,511.1 870,513.0 871,513.0 871,520.0 872,520.0 872,511.8 873,511.8 873,511.4 874,511.4 874,515.6 875,515.6 875,511.5 876,511.5 876,514.6 877,514.6 877,514.2 878,514.2 878,517.2 879,517.2 879,510.4 880,510.4 880,508.5 881,508.5 881,517.6 882,517.6 882,508.8 883,508.8 883,505.2 884,505.2 884,514.4 885,514.4 885,507.5 886,507.5 886,503.7 887,503.7 887,507.4 888,507.4 888,503.6 889,503.6 889,503.5 890,503.5 890,505.5 891,505.5 891,510.2 892,510.2 892,513.2 893,513.2 893,513.5 894,513.5 894,513.0 895,513.0 895,515.8 896,515.8 896,507.9 897,507.9 897,517.6 898,517.6 898,513.1 899,513.1 899,506.2 900,506.2 900,508.7 901,508.7 901,507.6 902,507.6 902,514.3 903,514.3 903,513.8 904,513.8 904,508.1 905,508.1 905,507.8 906,507.8 906,513.4 907,513.4 907,515.6 908,515.6 908,514.6 909,514.6 909,519.2 910,519.2 910,517.4 911,517.4 911,516.7 912,516.7 912,522.3 913,522.3 913,517.5 914,517.5 914,520.7 915,520.7 915,522.3 916,522.3 916,525.2 917,525.2 917,524.4 918,524.4 918,519.5 919,519.5 919,516.9 920,516.9 920,522.3 921,522.3 921,520.8 922,520.8 922,517.5 923,517.5 923,520.2 924,520.2 924,525.4 925,525.4 925,520.5 926,520.5 926,520.6 927,520.6 927,525.2 928,525.2 928,524.8 929,524.8 929,524.6 930,524.6 930,528.3 931,528.3 931,528.6 932,528.6 932,526.3 933,526.3 933,526.2 934,526.2 934,529.9 935,529.9 935,529.6 936,529.6 936,528.7 937,528.7 937,529.0 938,529.0 938,529.4 939,529.4 939,530.3 940,530.3 940,530.6 941,530.6 941,528.3 942,528.3 942,526.1 943,526.1 943,523.1 944,523.1 944,522.4 945,522.4 945,518.6 946,518.6 946,516.0 947,516.0 947,517.4 948,517.4 948,525.3 949,525.3 949,522.4 950,522.4 950,526.3 951,526.3 951,523.2 952,523.2 952,526.8 953,526.8 953,528.1 954,528.1 954,528.8 955,528.8 955,529.8 956,529.8 956,531.7 957,531.7 957,529.0 958,529.0 958,525.1 959,525.1 959,526.7 960,526.7 960,521.5 961,521.5 961,518.5 962,518.5 962,515.0 963,515.0 963,515.6 964,515.6 964,518.4 965,518.4 965,518.0 966,518.0 966,517.6 967,517.6 967,519.2 968,519.2 968,520.2 969,520.2 969,524.4 970,524.4 970,523.8 971,523.8 971,526.2 972,526.2 972,527.6 973,527.6 973,530.2 974,530.2 974,530.7 975,530.7 975,531.4 976,531.4 976,530.6 977,530.6 977,530.1 978,530.1 978,527.0 979,527.0 979,526.4 980,526.4 980,526.1 981,526.1 981,524.5 982,524.5 982,522.4 983,522.4 983,524.4 984,524.4 984,521.6 985,521.6 985,523.4 986,523.4 986,522.9 987,522.9 987,523.8 988,523.8 988,522.5 989,522.5 989,526.1 990,526.1 990,522.4 991,522.4 991,523.4 992,523.4 992,524.4 993,524.4 993,526.7 994,526.7 994,526.2 995,526.2 995,525.8 996,525.8 996,526.8 997,526.8 997,527.5 998,527.5 998,529.9 999,529.9 999,530.0 1000,530.0 1000,531.6 1001,531.6 1001,531.4 1002,531.4 1002,531.5 1003,531.5 1003,532.0 1004,532.0 1004,531.6 1005,531.6 1005,531.2 1006,531.2 1006,531.7 1007,531.7 1007,531.1 1008,531.1 1008,530.7 1009,530.7 1009,530.7 1010,530.7 1010,530.8 1011,530.8 1011,528.3 1012,528.3 1012,526.9 1013,526.9 1013,527.9 1014,527.9 1014,522.7 1015,522.7 1015,522.9 1016,522.9 1016,521.1 1017,521.1 1017,525.3 1018,525.3 1018,526.3 1019,526.3 1019,528.2 1020,528.2 1020,528.3 1021,528.3 1021,528.8 1022,528.8 1022,529.6 1023,529.6 1023,530.5 1024,530.5 1024,531.0 1025,531.0 1025,531.4 1026,531.4 1026,531.6 1027,531.6 1027,530.7 1028,530.7 1028,530.9 1029,530.9 1029,530.2 1030,530.2 1030,531.2 1031,531.2 1031,530.2 1032,530.2 1032,530.2 1033,530.2 1033,531.1 1034,531.1 1034,531.0 1035,531.0 1035,530.5 1036,530.5 1036,530.5 1037,530.5 1037,531.1 1038,531.1 1038,531.7 1039,531.7 1039,532.1 1040,532.1 1040,531.7 1041,531.7 1041,532.3 1042,532.3 1042,531.4 1043,531.4 1043,530.7 1044,530.7 1044,531.1 1045,531.1 1045,530.9 1046,530.9 1046,530.8 1047,530.8 1047,530.5 1048,530.5 1048,528.7 1049,528.7 1049,527.7 1050,527.7 1050,526.2 1051,526.2 1051,523.9 1052,523.9 1052,520.1 1053,520.1 1053,515.8 1054,515.8 1054,521.3 1055,521.3 1055,520.1 1056,520.1 1056,522.4 1057,522.4 1057,524.6 1058,524.6 1058,525.0 1059,525.0 1059,528.0 1060,528.0 1060,526.2 1061,526.2 1061,525.2 1062,525.2 1062,526.6 1063,526.6 1063,528.9 1064,528.9 1064,528.4 1065,528.4 1065,530.0 1066,530.0 1066,530.7 1067,530.7 1067,531.1 1068,531.1 1068,531.7 1069,531.7 1069,530.7 1070,530.7 1070,530.6 1071,530.6 1071,529.1 1072,529.1 1072,529.5 1073,529.5 1073,527.0 1074,527.0 1074,527.9 1075,527.9 1075,525.5 1076,525.5 1076,525.4 1077,525.4 1077,525.0 1078,525.0 1078,526.3 1079,526.3 1079,527.1 1080,527.1 1080,528.9 1081,528.9 1081,530.2 1082,530.2 1082,530.5 1083,530.5 1083,530.8 1084,530.8 1084,527.9 1085,527.9 1085,526.3 1086,526.3 1086,524.7 1087,524.7 1087,519.4 1088,519.4 1088,517.4 1089,517.4 1089,520.2 1090,520.2 1090,510.1 1091,510.1 1091,517.3 1092,517.3 1092,517.8 1093,517.8 1093,517.5 1094,517.5 1094,520.1 1095,520.1 1095,522.9 1096,522.9 1096,521.0 1097,521.0 1097,526.3 1098,526.3 1098,524.6 1099,524.6 1099,526.7 1100,526.7 1100,530.6 1101,530.6 1101,531.2 1102,531.2 1102,529.6 1103,529.6 1103,531.3 1104,531.3 1104,531.3 1105,531.3 1105,530.6 1106,530.6 1106,531.4 1107,531.4 1107,531.6 1108,531.6 1108,531.8 1109,531.8 1109,532.3 1110,532.3 1110,531.4 1111,531.4 1111,532.2 1112,532.2 1112,531.7 1113,531.7 1113,532.2 1114,532.2 1114,531.8 1115,531.8 1115,531.5 1116,531.5 1116,531.9 1117,531.9 1117,532.2 1118,532.2 1118,531.4 1119,531.4 1119,531.8 1120,531.8 1120,532.0 1121,532.0 1121,531.6 1122,531.6 1122,531.6 1123,531.6 1123,531.6 1124,531.6 1124,532.0 1125,532.0 1125,532.1 1126,532.1 1126,531.5 1127,531.5 1127,531.5 1128,531.5 1128,531.9 1129,531.9 1129,531.8 1130,531.8 1130,531.4 1131,531.4 1131,532.1 1132,532.1 1132,531.4 1133,531.4 1133,532.2 1134,532.2 1134,531.6 1135,531.6 1135,531.8 1136,531.8 1136,531.8 1137,531.8 1137,531.4 1138,531.4 1138,531.9 1139,531.9 1139,532.2 1140,532.2 1140,534.9 1139,534.9 1139,535.3 1138,535.3 1138,535.2 1137,535.2 1137,535.0 1136,535.0 1136,535.6 1135,535.6 1135,535.8 1134,535.8 1134,535.4 1133,535.4 1133,535.4 1132,535.4 1132,535.4 1131,535.4 1131,535.2 1130,535.2 1130,535.8 1129,535.8 1129,535.6 1128,535.6 1128,535.6 1127,535.6 1127,535.5 1126,535.5 1126,535.3 1125,535.3 1125,534.7 1124,534.7 1124,534.9 1123,534.9 1123,535.7 1122,535.7 1122,535.1 1121,535.1 1121,535.4 1120,535.4 1120,535.6 1119,535.6 1119,535.7 1118,535.7 1118,534.8 1117,534.8 1117,535.6 1116,535.6 1116,535.2 1115,535.2 1115,535.3 1114,535.3 1114,535.4 1113,535.4 1113,535.0 1112,535.0 1112,535.4 1111,535.4 1111,535.8 1110,535.8 1110,535.5 1109,535.5 1109,534.9 1108,534.9 1108,535.7 1107,535.7 1107,536.5 1106,536.5 1106,535.4 1105,535.4 1105,536.4 1104,536.4 1104,537.0 1103,537.0 1103,537.3 1102,537.3 1102,536.0 1101,536.0 1101,540.0 1100,540.0 1100,542.0 1099,542.0 1099,546.6 1098,546.6 1098,546.2 1097,546.2 1097,551.4 1096,551.4 1096,558.9 1095,558.9 1095,553.8 1094,553.8 1094,560.0 1093,560.0 1093,561.9 1092,561.9 1092,567.3 1091,567.3 1091,566.9 1090,566.9 1090,567.9 1089,567.9 1089,558.8 1088,558.8 1088,555.5 1087,555.5 1087,544.2 1086,544.2 1086,546.4 1085,546.4 1085,541.4 1084,541.4 1084,536.5 1083,536.5 1083,536.6 1082,536.6 1082,539.0 1081,539.0 1081,538.2 1080,538.2 1080,541.1 1079,541.1 1079,539.6 1078,539.6 1078,539.4 1077,539.4 1077,541.7 1076,541.7 1076,539.9 1075,539.9 1075,539.7 1074,539.7 1074,538.1 1073,538.1 1073,538.6 1072,538.6 1072,537.6 1071,537.6 1071,537.1 1070,537.1 1070,536.3 1069,536.3 1069,537.1 1068,537.1 1068,535.8 1067,535.8 1067,537.6 1066,537.6 1066,537.3 1065,537.3 1065,537.7 1064,537.7 1064,540.4 1063,540.4 1063,543.1 1062,543.1 1062,547.0 1061,547.0 1061,547.5 1060,547.5 1060,548.8 1059,548.8 1059,552.6 1058,552.6 1058,548.9 1057,548.9 1057,550.4 1056,550.4 1056,552.6 1055,552.6 1055,561.8 1054,561.8 1054,553.0 1053,553.0 1053,547.2 1052,547.2 1052,544.8 1051,544.8 1051,544.6 1050,544.6 1050,542.6 1049,542.6 1049,540.6 1048,540.6 1048,538.1 1047,538.1 1047,536.7 1046,536.7 1046,535.6 1045,535.6 1045,536.6 1044,536.6 1044,536.5 1043,536.5 1043,536.2 1042,536.2 1042,535.8 1041,535.8 1041,535.1 1040,535.1 1040,535.6 1039,535.6 1039,535.9 1038,535.9 1038,535.2 1037,535.2 1037,535.9 1036,535.9 1036,535.7 1035,535.7 1035,535.7 1034,535.7 1034,536.5 1033,536.5 1033,536.4 1032,536.4 1032,536.6 1031,536.6 1031,536.0 1030,536.0 1030,535.4 1029,535.4 1029,535.9 1028,535.9 1028,535.1 1027,535.1 1027,535.7 1026,535.7 1026,535.8 1025,535.8 1025,535.9 1024,535.9 1024,537.2 1023,537.2 1023,537.3 1022,537.3 1022,537.0 1021,537.0 1021,538.9 1020,538.9 1020,537.4 1019,537.4 1019,539.6 1018,539.6 1018,542.6 1017,542.6 1017,543.3 1016,543.3 1016,542.7 1015,542.7 1015,541.3 1014,541.3 1014,539.6 1013,539.6 1013,539.4 1012,539.4 1012,537.6 1011,537.6 1011,537.8 1010,537.8 1010,536.7 1009,536.7 1009,536.9 1008,536.9 1008,537.3 1007,537.3 1007,537.0 1006,537.0 1006,535.3 1005,535.3 1005,536.6 1004,536.6 1004,536.3 1003,536.3 1003,535.6 1002,535.6 1002,535.8 1001,535.8 1001,536.9 1000,536.9 1000,536.3 999,536.3 999,537.7 998,537.7 998,538.5 997,538.5 997,541.3 996,541.3 996,538.4 995,538.4 995,541.6 994,541.6 994,541.4 993,541.4 993,546.5 992,546.5 992,547.5 991,547.5 991,547.3 990,547.3 990,544.3 989,544.3 989,546.2 988,546.2 988,545.7 987,545.7 987,546.7 986,546.7 986,547.2 985,547.2 985,547.7 984,547.7 984,547.0 983,547.0 983,546.3 982,546.3 982,549.3 981,549.3 981,545.6 980,545.6 980,545.6 979,545.6 979,541.1 978,541.1 978,540.5 977,540.5 977,536.8 976,536.8 976,536.6 975,536.6 975,538.0 974,538.0 974,540.0 973,540.0 973,543.0 972,543.0 972,543.7 971,543.7 971,544.8 970,544.8 970,547.4 969,547.4 969,544.0 968,544.0 968,545.6 967,545.6 967,552.6 966,552.6 966,555.9 965,555.9 965,554.0 964,554.0 964,558.0 963,558.0 963,559.7 962,559.7 962,556.0 961,556.0 961,545.7 960,545.7 960,548.6 959,548.6 959,543.2 958,543.2 958,538.4 957,538.4 957,535.9 956,535.9 956,538.2 955,538.2 955,541.3 954,541.3 954,542.5 953,542.5 953,543.6 952,543.6 952,544.0 951,544.0 951,543.2 950,543.2 950,545.5 949,545.5 949,550.9 948,550.9 948,548.2 947,548.2 947,553.1 946,553.1 946,554.2 945,554.2 945,550.9 944,550.9 944,541.2 943,541.2 943,542.4 942,542.4 942,537.3 941,537.3 941,536.9 940,536.9 940,536.3 939,536.3 939,536.9 938,536.9 938,537.3 937,537.3 937,537.6 936,537.6 936,539.9 935,539.9 935,537.9 934,537.9 934,542.5 933,542.5 933,543.3 932,543.3 932,542.7 931,542.7 931,541.0 930,541.0 930,547.7 929,547.7 929,544.8 928,544.8 928,543.3 927,543.3 927,546.6 926,546.6 926,546.2 925,546.2 925,552.3 924,552.3 924,553.4 923,553.4 923,551.4 922,551.4 922,552.4 921,552.4 921,555.7 920,555.7 920,552.7 919,552.7 919,551.1 918,551.1 918,548.0 917,548.0 917,552.0 916,552.0 916,548.8 915,548.8 915,547.7 914,547.7 914,553.8 913,553.8 913,547.4 912,547.4 912,552.0 911,552.0 911,550.1 910,550.1 910,553.4 909,553.4 909,552.2 908,552.2 908,557.2 907,557.2 907,558.5 906,558.5 906,553.4 905,553.4 905,563.1 904,563.1 904,565.3 903,565.3 903,554.4 902,554.4 902,569.4 901,569.4 901,571.9 900,571.9 900,562.7 899,562.7 899,560.8 898,560.8 898,555.2 897,555.2 897,556.7 896,556.7 896,552.2 895,552.2 895,564.7 894,564.7 894,563.1 893,563.1 893,549.8 892,549.8 892,562.4 891,562.4 891,559.6 890,559.6 890,558.8 889,558.8 889,548.8 888,548.8 888,562.4 887,562.4 887,556.6 886,556.6 886,551.5 885,551.5 885,555.0 884,555.0 884,559.5 883,559.5 883,561.2 882,561.2 882,555.7 881,555.7 881,554.0 880,554.0 880,556.1 879,556.1 879,553.2 878,553.2 878,548.1 877,548.1 877,547.4 876,547.4 876,546.2 875,546.2 875,551.9 874,551.9 874,558.0 873,558.0 873,551.6 872,551.6 872,555.8 871,555.8 871,563.4 870,563.4 870,552.5 869,552.5 869,553.3 868,553.3 868,563.4 867,563.4 867,554.1 866,554.1 866,567.3 865,567.3 865,561.4 864,561.4 864,566.8 863,566.8 863,553.8 862,553.8 862,558.8 861,558.8 861,561.9 860,561.9 860,555.1 859,555.1 859,555.3 858,555.3 858,553.8 857,553.8 857,555.9 856,555.9 856,555.4 855,555.4 855,553.1 854,553.1 854,563.3 853,563.3 853,552.9 852,552.9 852,555.9 851,555.9 851,560.8 850,560.8 850,560.3 849,560.3 849,551.5 848,551.5 848,565.5 847,565.5 847,565.6 846,565.6 846,562.5 845,562.5 845,559.5 844,559.5 844,558.4 843,558.4 843,554.2 842,554.2 842,555.8 841,555.8 841,557.7 840,557.7 840,552.1 839,552.1 839,553.0 838,553.0 838,548.3 837,548.3 837,545.9 836,545.9 836,544.6 835,544.6 835,549.5 834,549.5 834,552.8 833,552.8 833,548.4 832,548.4 832,548.7 831,548.7 831,547.6 830,547.6 830,547.3 829,547.3 829,544.2 828,544.2 828,548.4 827,548.4 827,547.7 826,547.7 826,551.7 825,551.7 825,548.5 824,548.5 824,543.7 823,543.7 823,545.4 822,545.4 822,540.9 821,540.9 821,538.4 820,538.4 820,537.5 819,537.5 819,537.7 818,537.7 818,536.7 817,536.7 817,540.8 816,540.8 816,540.7 815,540.7 815,540.9 814,540.9 814,543.8 813,543.8 813,548.3 812,548.3 812,545.9 811,545.9 811,547.4 810,547.4 810,552.9 809,552.9 809,548.8 808,548.8 808,556.5 807,556.5 807,557.2 806,557.2 806,560.6 805,560.6 805,557.1 804,557.1 804,548.0 803,548.0 803,542.0 802,542.0 802,538.8 801,538.8 801,535.5 800,535.5 800,536.9 799,536.9 799,538.1 798,538.1 798,536.4 797,536.4 797,540.5 796,540.5 796,540.6 795,540.6 795,542.8 794,542.8 794,547.6 793,547.6 793,543.6 792,543.6 792,550.6 791,550.6 791,552.5 790,552.5 790,553.4 789,553.4 789,546.5 788,546.5 788,544.1 787,544.1 787,545.3 786,545.3 786,552.6 785,552.6 785,556.3 784,556.3 784,548.9 783,548.9 783,551.6 782,551.6 782,567.2 781,567.2 781,570.6 780,570.6 780,552.8 779,552.8 779,563.9 778,563.9 778,563.0 777,563.0 777,567.2 776,567.2 776,559.9 775,559.9 775,566.8 774,566.8 774,566.7 773,566.7 773,573.8 772,573.8 772,555.6 771,555.6 771,558.8 770,558.8 770,561.2 769,561.2 769,551.5 768,551.5 768,559.4 767,559.4 767,555.6 766,555.6 766,545.8 765,545.8 765,539.8 764,539.8 764,537.1 763,537.1 763,536.3 762,536.3 762,535.9 761,535.9 761,538.5 760,538.5 760,538.7 759,538.7 759,539.5 758,539.5 758,543.3 757,543.3 757,540.6 756,540.6 756,540.2 755,540.2 755,540.6 754,540.6 754,540.9 753,540.9 753,539.2 752,539.2 752,545.1 751,545.1 751,547.8 750,547.8 750,551.6 749,551.6 749,543.4 748,543.4 748,556.6 747,556.6 747,557.9 746,557.9 746,549.9 745,549.9 745,555.7 744,555.7 744,551.6 743,551.6 743,556.2 742,556.2 742,557.2 741,557.2 741,546.8 740,546.8 740,545.0 739,545.0 739,539.3 738,539.3 738,535.8 737,535.8 737,535.1 736,535.1 736,534.7 735,534.7 735,535.1 734,535.1 734,535.1 733,535.1 733,535.1 732,535.1 732,535.3 731,535.3 731,535.4 730,535.4 730,535.0 729,535.0 729,535.4 728,535.4 728,535.4 727,535.4 727,535.1 726,535.1 726,535.7 725,535.7 725,535.3 724,535.3 724,534.8 723,534.8 723,535.7 722,535.7 722,535.6 721,535.6 721,535.8 720,535.8 720,535.5 719,535.5 719,535.3 718,535.3 718,535.6 717,535.6 717,535.5 716,535.5 716,535.5 715,535.5 715,535.0 714,535.0 714,535.3 713,535.3 713,534.9 712,534.9 712,535.8 711,535.8 711,535.4 710,535.4 710,535.1 709,535.1 709,535.4 708,535.4 708,536.4 707,536.4 707,536.1 706,536.1 706,536.5 705,536.5 705,537.6 704,537.6 704,538.1 703,538.1 703,540.6 702,540.6 702,540.7 701,540.7 701,541.7 700,541.7 700,548.0 699,548.0 699,548.2 698,548.2 698,547.7 697,547.7 697,552.4 696,552.4 696,552.3 695,552.3 695,554.5 694,554.5 694,574.8 693,574.8 693,569.4 692,569.4 692,573.9 691,573.9 691,567.4 690,567.4 690,563.0 689,563.0 689,560.6 688,560.6 688,560.2 687,560.2 687,559.6 686,559.6 686,555.8 685,555.8 685,555.8 684,555.8 684,556.9 683,556.9 683,558.7 682,558.7 682,560.8 681,560.8 681,560.4 680,560.4 680,552.6 679,552.6 679,554.0 678,554.0 678,558.5 677,558.5 677,550.2 676,550.2 676,553.6 675,553.6 675,551.6 674,551.6 674,559.2 673,559.2 673,552.7 672,552.7 672,547.4 671,547.4 671,555.3 670,555.3 670,555.3 669,555.3 669,553.2 668,553.2 668,555.8 667,555.8 667,554.1 666,554.1 666,549.7 665,549.7 665,549.7 664,549.7 664,546.9 663,546.9 663,544.9 662,544.9 662,547.4 661,547.4 661,546.3 660,546.3 660,544.9 659,544.9 659,547.3 658,547.3 658,545.7 657,545.7 657,549.3 656,549.3 656,543.9 655,543.9 655,541.9 654,541.9 654,539.7 653,539.7 653,536.8 652,536.8 652,537.3 651,537.3 651,537.0 650,537.0 650,538.1 649,538.1 649,537.7 648,537.7 648,541.2 647,541.2 647,550.7 646,550.7 646,549.4 645,549.4 645,558.4 644,558.4 644,573.7 643,573.7 643,570.8 642,570.8 642,572.7 641,572.7 641,579.3 640,579.3 640,563.9 639,563.9 639,572.7 638,572.7 638,567.3 637,567.3 637,568.8 636,568.8 636,560.8 635,560.8 635,556.0 634,556.0 634,562.4 633,562.4 633,549.6 632,549.6 632,551.3 631,551.3 631,551.4 630,551.4 630,559.2 629,559.2 629,554.6 628,554.6 628,550.6 627,550.6 627,544.5 626,544.5 626,547.2 625,547.2 625,547.6 624,547.6 624,551.8 623,551.8 623,548.4 622,548.4 622,552.4 621,552.4 621,553.6 620,553.6 620,555.2 619,555.2 619,546.5 618,546.5 618,544.8 617,544.8 617,546.8 616,546.8 616,540.9 615,540.9 615,538.0 614,538.0 614,536.8 613,536.8 613,536.4 612,536.4 612,537.8 611,537.8 611,540.9 610,540.9 610,544.7 609,544.7 609,545.6 608,545.6 608,547.3 607,547.3 607,546.5 606,546.5 606,543.8 605,543.8 605,548.6 604,548.6 604,548.8 603,548.8 603,544.7 602,544.7 602,539.5 601,539.5 601,538.9 600,538.9 600,542.0 599,542.0 599,539.5 598,539.5 598,536.5 597,536.5 597,536.5 596,536.5 596,537.9 595,537.9 595,538.9 594,538.9 594,538.6 593,538.6 593,542.0 592,542.0 592,540.5 591,540.5 591,541.5 590,541.5 590,541.7 589,541.7 589,549.9 588,549.9 588,546.7 587,546.7 587,557.5 586,557.5 586,563.2 585,563.2 585,556.3 584,556.3 584,564.4 583,564.4 583,559.7 582,559.7 582,560.0 581,560.0 581,552.6 580,552.6 580,556.0 579,556.0 579,548.8 578,548.8 578,541.6 577,541.6 577,539.3 576,539.3 576,536.8 575,536.8 575,536.1 574,536.1 574,535.7 573,535.7 573,537.4 572,537.4 572,536.0 571,536.0 571,537.1 570,537.1 570,537.4 569,537.4 569,538.5 568,538.5 568,540.3 567,540.3 567,544.9 566,544.9 566,553.6 565,553.6 565,560.0 564,560.0 564,559.0 563,559.0 563,569.6 562,569.6 562,564.0 561,564.0 561,585.5 560,585.5 560,585.0 559,585.0 559,576.3 558,576.3 558,585.3 557,585.3 557,584.9 556,584.9 556,568.4 555,568.4 555,582.3 554,582.3 554,571.3 553,571.3 553,565.9 552,565.9 552,562.7 551,562.7 551,554.2 550,554.2 550,544.9 549,544.9 549,546.6 548,546.6 548,544.1 547,544.1 547,554.0 546,554.0 546,559.4 545,559.4 545,571.4 544,571.4 544,551.3 543,551.3 543,560.1 542,560.1 542,552.0 541,552.0 541,561.9 540,561.9 540,548.7 539,548.7 539,556.8 538,556.8 538,553.3 537,553.3 537,553.9 536,553.9 536,568.1 535,568.1 535,561.8 534,561.8 534,555.4 533,555.4 533,569.7 532,569.7 532,565.3 531,565.3 531,571.9 530,571.9 530,577.3 529,577.3 529,577.2 528,577.2 528,580.6 527,580.6 527,585.5 526,585.5 526,574.4 525,574.4 525,582.7 524,582.7 524,577.4 523,577.4 523,581.4 522,581.4 522,564.2 521,564.2 521,549.2 520,549.2 520,541.0 519,541.0 519,535.4 518,535.4 518,535.6 517,535.6 517,535.5 516,535.5 516,535.7 515,535.7 515,535.7 514,535.7 514,537.3 513,537.3 513,537.8 512,537.8 512,539.8 511,539.8 511,538.7 510,538.7 510,542.4 509,542.4 509,540.7 508,540.7 508,543.0 507,543.0 507,546.2 506,546.2 506,548.2 505,548.2 505,551.7 504,551.7 504,549.9 503,549.9 503,548.0 502,548.0 502,556.6 501,556.6 501,551.0 500,551.0 500,551.6 499,551.6 499,556.7 498,556.7 498,551.0 497,551.0 497,560.8 496,560.8 496,563.4 495,563.4 495,560.4 494,560.4 494,561.5 493,561.5 493,555.5 492,555.5 492,563.6 491,563.6 491,566.0 490,566.0 490,572.5 489,572.5 489,571.1 488,571.1 488,572.1 487,572.1 487,563.8 486,563.8 486,565.9 485,565.9 485,576.4 484,576.4 484,564.9 483,564.9 483,582.1 482,582.1 482,578.0 481,578.0 481,561.9 480,561.9 480,566.4 479,566.4 479,551.0 478,551.0 478,545.6 477,545.6 477,534.8 476,534.8 476,534.7 475,534.7 475,535.6 474,535.6 474,535.3 473,535.3 473,535.0 472,535.0 472,535.1 471,535.1 471,535.4 470,535.4 470,534.8 469,534.8 469,535.4 468,535.4 468,534.9 467,534.9 467,535.2 466,535.2 466,535.0 465,535.0 465,535.6 464,535.6 464,535.3 463,535.3 463,535.4 462,535.4 462,535.6 461,535.6 461,535.0 460,535.0 460,535.0 459,535.0 459,534.9 458,534.9 458,535.3 457,535.3 457,534.7 456,534.7 456,535.4 455,535.4 455,535.5 454,535.5 454,535.1 453,535.1 453,534.7 452,534.7 452,534.9 451,534.9 451,535.3 450,535.3 450,535.5 449,535.5 449,535.5 448,535.5 448,535.5 447,535.5 447,534.9 446,534.9 446,535.6 445,535.6" fill="#3232c8"/><polygon points="445,532.8 446,532.8 446,532.8 447,532.8 447,532.8 448,532.8 448,532.8 449,532.8 449,532.8 450,532.8 450,532.8 451,532.8 451,532.9 452,532.9 452,532.8 453,532.8 453,532.8 454,532.8 454,532.9 455,532.9 455,532.7 456,532.7 456,532.7 457,532.7 457,532.8 458,532.8 458,532.9 459,532.9 459,532.9 460,532.9 460,532.8 461,532.8 461,532.8 462,532.8 462,532.8 463,532.8 463,532.8 464,532.8 464,532.9 465,532.9 465,532.8 466,532.8 466,532.8 467,532.8 467,532.9 468,532.9 468,532.8 469,532.8 469,532.8 470,532.8 470,532.8 471,532.8 471,532.8 472,532.8 472,532.9 473,532.9 473,532.9 474,532.9 474,532.9 475,532.9 475,532.8 476,532.8 476,532.8 477,532.8 477,529.8 478,529.8 478,524.4 479,524.4 479,523.0 480,523.0 480,522.6 481,522.6 481,520.3 482,520.3 482,518.2 483,518.2 483,519.1 484,519.1 484,522.0 485,522.0 485,521.4 486,521.4 486,523.4 487,523.4 487,523.3 488,523.3 488,524.5 489,524.5 489,523.7 490,523.7 490,524.3 491,524.3 491,524.5 492,524.5 492,523.3 493,523.3 493,522.4 494,522.4 494,524.3 495,524.3 495,524.9 496,524.9 496,523.4 497,523.4 497,524.5 498,524.5 498,524.4 499,524.4 499,526.8 500,526.8 500,527.1 501,527.1 501,526.8 502,526.8 502,527.3 503,527.3 503,528.2 504,528.2 504,528.0 505,528.0 505,529.0 506,529.0 506,529.0 507,529.0 507,529.8 508,529.8 508,530.7 509,530.7 509,531.1 510,531.1 510,531.7 511,531.7 511,531.7 512,531.7 512,532.1 513,532.1 513,532.4 514,532.4 514,532.6 515,532.6 515,532.8 516,532.8 516,532.7 517,532.7 517,532.8 518,532.8 518,532.7 519,532.7 519,531.0 520,531.0 520,526.9 521,526.9 521,523.7 522,523.7 522,519.5 523,519.5 523,516.2 524,516.2 524,517.4 525,517.4 525,520.4 526,520.4 526,520.3 527,520.3 527,518.3 528,518.3 528,518.9 529,518.9 529,520.1 530,520.1 530,520.7 531,520.7 531,520.4 532,520.4 532,523.6 533,523.6 533,522.0 534,522.0 534,523.5 535,523.5 535,524.1 536,524.1 536,525.1 537,525.1 537,525.7 538,525.7 538,526.6 539,526.6 539,525.9 540,525.9 540,526.6 541,526.6 541,526.7 542,526.7 542,526.9 543,526.9 543,525.3 544,525.3 544,526.0 545,526.0 545,526.5 546,526.5 546,528.6 547,528.6 547,529.8 548,529.8 548,529.0 549,529.0 549,527.7 550,527.7 550,526.1 551,526.1 551,525.0 552,525.0 552,523.7 553,523.7 553,520.8 554,520.8 554,521.5 555,521.5 555,517.6 556,517.6 556,516.9 557,516.9 557,516.2 558,516.2 558,516.0 559,516.0 559,519.2 560,519.2 560,519.2 561,519.2 561,521.0 562,521.0 562,522.0 563,522.0 563,523.6 564,523.6 564,525.2 565,525.2 565,526.7 566,526.7 566,528.2 567,528.2 567,530.6 568,530.6 568,531.8 569,531.8 569,531.8 570,531.8 570,531.9 571,531.9 571,532.2 572,532.2 572,532.3 573,532.3 573,532.3 574,532.3 574,532.2 575,532.2 575,532.3 576,532.3 576,531.5 577,531.5 577,529.8 578,529.8 578,528.9 579,528.9 579,526.3 580,526.3 580,524.8 581,524.8 581,524.7 582,524.7 582,524.9 583,524.9 583,525.9 584,525.9 584,525.2 585,525.2 585,526.3 586,526.3 586,525.0 587,525.0 587,526.8 588,526.8 588,528.3 589,528.3 589,530.1 590,530.1 590,530.4 591,530.4 591,530.8 592,530.8 592,531.0 593,531.0 593,531.6 594,531.6 594,531.8 595,531.8 595,532.3 596,532.3 596,532.5 597,532.5 597,532.0 598,532.0 598,531.5 599,531.5 599,531.0 600,531.0 600,530.5 601,530.5 601,529.6 602,529.6 602,529.6 603,529.6 603,528.5 604,528.5 604,528.8 605,528.8 605,529.0 606,529.0 606,529.4 607,529.4 607,529.7 608,529.7 608,529.5 609,529.5 609,530.4 610,530.4 610,530.8 611,530.8 611,531.4 612,531.4 612,532.0 613,532.0 613,532.0 614,532.0 614,531.4 615,531.4 615,530.9 616,530.9 616,530.3 617,530.3 617,529.2 618,529.2 618,529.1 619,529.1 619,528.4 620,528.4 620,527.9 621,527.9 621,527.8 622,527.8 622,527.9 623,527.9 623,528.2 624,528.2 624,529.1 625,529.1 625,529.3 626,529.3 626,529.1 627,529.1 627,527.9 628,527.9 628,526.2 629,526.2 629,525.5 630,525.5 630,525.7 631,525.7 631,523.8 632,523.8 632,523.5 633,523.5 633,521.5 634,521.5 634,520.8 635,520.8 635,520.6 636,520.6 636,519.2 637,519.2 637,519.6 638,519.6 638,517.9 639,517.9 639,517.6 640,517.6 640,517.8 641,517.8 641,518.1 642,518.1 642,520.8 643,520.8 643,521.5 644,521.5 644,523.4 645,523.4 645,525.9 646,525.9 646,528.3 647,528.3 647,530.3 648,530.3 648,531.8 649,531.8 649,532.1 650,532.1 650,532.2 651,532.2 651,532.5 652,532.5 652,532.5 653,532.5 653,531.5 654,531.5 654,530.3 655,530.3 655,529.7 656,529.7 656,529.1 657,529.1 657,527.6 658,527.6 658,529.0 659,529.0 659,528.0 660,528.0 660,528.4 661,528.4 661,528.6 662,528.6 662,529.4 663,529.4 663,529.3 664,529.3 664,527.8 665,527.8 665,528.5 666,528.5 666,527.3 667,527.3 667,526.9 668,526.9 668,525.4 669,525.4 669,525.5 670,525.5 670,526.9 671,526.9 671,525.4 672,525.4 672,526.8 673,526.8 673,525.3 674,525.3 674,526.7 675,526.7 675,525.6 676,525.6 676,526.1 677,526.1 677,525.4 678,525.4 678,526.1 679,526.1 679,526.3 680,526.3 680,527.0 681,527.0 681,525.5 682,525.5 682,525.5 683,525.5 683,526.8 684,526.8 684,526.4 685,526.4 685,526.2 686,526.2 686,526.4 687,526.4 687,525.7 688,525.7 688,525.5 689,525.5 689,523.8 690,523.8 690,523.7 691,523.7 691,522.8 692,522.8 692,521.3 693,521.3 693,521.7 694,521.7 694,523.6 695,523.6 695,526.1 696,526.1 696,527.3 697,527.3 697,527.6 698,527.6 698,528.5 699,528.5 699,529.2 700,529.2 700,530.2 701,530.2 701,530.8 702,530.8 702,531.5 703,531.5 703,531.7 704,531.7 704,532.0 705,532.0 705,532.3 706,532.3 706,532.4 707,532.4 707,532.6 708,532.6 708,532.9 709,532.9 709,532.7 710,532.7 710,532.8 711,532.8 711,532.8 712,532.8 712,532.9 713,532.9 713,532.9 714,532.9 714,532.8 715,532.8 715,532.7 716,532.7 716,532.8 717,532.8 717,532.7 718,532.7 718,532.8 719,532.8 719,532.9 720,532.9 720,532.8 721,532.8 721,532.8 722,532.8 722,532.7 723,532.7 723,532.9 724,532.9 724,532.9 725,532.9 725,532.9 726,532.9 726,532.8 727,532.8 727,532.8 728,532.8 728,532.8 729,532.8 729,532.8 730,532.8 730,532.9 731,532.9 731,532.8 732,532.8 732,532.8 733,532.8 733,532.8 734,532.8 734,532.8 735,532.8 735,532.8 736,532.8 736,532.9 737,532.9 737,532.8 738,532.8 738,532.0 739,532.0 739,529.9 740,529.9 740,527.6 741,527.6 741,525.4 742,525.4 742,524.7 743,524.7 743,525.3 744,525.3 744,525.0 745,525.0 745,525.6 746,525.6 746,526.0 747,526.0 747,527.2 748,527.2 748,527.2 749,527.2 749,528.7 750,528.7 750,528.3 751,528.3 751,529.5 752,529.5 752,530.0 753,530.0 753,530.5 754,530.5 754,530.8 755,530.8 755,530.4 756,530.4 756,530.6 757,530.6 757,530.4 758,530.4 758,531.1 759,531.1 759,531.4 760,531.4 760,531.9 761,531.9 761,532.2 762,532.2 762,532.6 763,532.6 763,532.2 764,532.2 764,530.5 765,530.5 765,528.6 766,528.6 766,527.8 767,527.8 767,525.7 768,525.7 768,526.0 769,526.0 769,525.4 770,525.4 770,523.4 771,523.4 771,522.4 772,522.4 772,521.3 773,521.3 773,521.2 774,521.2 774,521.9 775,521.9 775,520.9 776,520.9 776,522.1 777,522.1 777,523.2 778,523.2 778,522.3 779,522.3 779,523.2 780,523.2 780,523.5 781,523.5 781,523.4 782,523.4 782,526.2 783,526.2 783,525.7 784,525.7 784,527.1 785,527.1 785,528.6 786,528.6 786,528.3 787,528.3 787,528.7 788,528.7 788,528.2 789,528.2 789,527.1 790,527.1 790,527.6 791,527.6 791,527.9 792,527.9 792,529.0 793,529.0 793,529.7 794,529.7 794,529.9 795,529.9 795,530.7 796,530.7 796,531.6 797,531.6 797,531.8 798,531.8 798,532.2 799,532.2 799,532.1 800,532.1 800,532.4 801,532.4 801,531.6 802,531.6 802,529.8 803,529.8 803,528.1 804,528.1 804,527.7 805,527.7 805,525.2 806,525.2 806,527.0 807,527.0 807,526.8 808,526.8 808,527.4 809,527.4 809,527.2 810,527.2 810,528.4 811,528.4 811,529.2 812,529.2 812,529.5 813,529.5 813,529.8 814,529.8 814,530.2 815,530.2 815,530.8 816,530.8 816,531.5 817,531.5 817,531.8 818,531.8 818,532.2 819,532.2 819,532.1 820,532.1 820,531.2 821,531.2 821,530.0 822,530.0 822,530.0 823,530.0 823,528.7 824,528.7 824,527.5 825,527.5 825,528.1 826,528.1 826,527.2 827,527.2 827,527.7 828,527.7 828,527.2 829,527.2 829,528.7 830,528.7 830,527.7 831,527.7 831,527.2 832,527.2 832,528.0 833,528.0 833,527.6 834,527.6 834,527.5 835,527.5 835,528.0 836,528.0 836,527.7 837,527.7 837,527.3 838,527.3 838,526.2 839,526.2 839,526.5 840,526.5 840,526.3 841,526.3 841,525.1 842,525.1 842,526.1 843,526.1 843,524.6 844,524.6 844,525.0 845,525.0 845,526.0 846,526.0 846,525.6 847,525.6 847,523.8 848,523.8 848,524.8 849,524.8 849,525.1 850,525.1 850,524.7 851,524.7 851,524.2 852,524.2 852,524.9 853,524.9 853,525.5 854,525.5 854,525.4 855,525.4 855,525.0 856,525.0 856,524.8 857,524.8 857,524.5 858,524.5 858,524.4 859,524.4 859,524.8 860,524.8 860,525.4 861,525.4 861,525.1 862,525.1 862,524.2 863,524.2 863,523.7 864,523.7 864,524.1 865,524.1 865,522.6 866,522.6 866,523.7 867,523.7 867,524.4 868,524.4 868,524.0 869,524.0 869,523.0 870,523.0 870,525.2 871,525.2 871,525.2 872,525.2 872,525.7 873,525.7 873,526.0 874,526.0 874,527.1 875,527.1 875,526.5 876,526.5 876,525.0 877,525.0 877,526.3 878,526.3 878,525.8 879,525.8 879,525.6 880,525.6 880,524.9 881,524.9 881,523.6 882,523.6 882,524.2 883,524.2 883,523.3 884,523.3 884,523.2 885,523.2 885,524.3 886,524.3 886,524.3 887,524.3 887,524.7 888,524.7 888,524.3 889,524.3 889,524.8 890,524.8 890,523.9 891,523.9 891,524.5 892,524.5 892,526.1 893,526.1 893,524.7 894,524.7 894,524.7 895,524.7 895,525.2 896,525.2 896,524.4 897,524.4 897,524.8 898,524.8 898,522.0 899,522.0 899,522.8 900,522.8 900,522.2 901,522.2 901,520.4 902,520.4 902,522.3 903,522.3 903,524.4 904,524.4 904,525.0 905,525.0 905,525.8 906,525.8 906,525.1 907,525.1 907,526.1 908,526.1 908,526.8 909,526.8 909,526.7 910,526.7 910,527.7 911,527.7 911,526.8 912,526.8 912,526.9 913,526.9 913,527.2 914,527.2 914,527.9 915,527.9 915,528.7 916,528.7 916,528.7 917,528.7 917,527.4 918,527.4 918,528.0 919,528.0 919,527.3 920,527.3 920,527.8 921,527.8 921,527.8 922,527.8 922,527.8 923,527.8 923,526.9 924,526.9 924,528.4 925,528.4 925,528.7 926,528.7 926,528.8 927,528.8 927,529.3 928,529.3 928,528.7 929,528.7 929,529.9 930,529.9 930,530.1 931,530.1 931,529.9 932,529.9 932,530.6 933,530.6 933,531.0 934,531.0 934,531.1 935,531.1 935,531.2 936,531.2 936,531.7 937,531.7 937,531.7 938,531.7 938,532.1 939,532.1 939,532.2 940,532.2 940,532.4 941,532.4 941,531.9 942,531.9 942,530.5 943,530.5 943,529.2 944,529.2 944,529.1 945,529.1 945,527.3 946,527.3 946,528.3 947,528.3 947,528.5 948,528.5 948,528.0 949,528.0 949,529.2 950,529.2 950,529.8 951,529.8 951,529.2 952,529.2 952,530.6 953,530.6 953,531.0 954,531.0 954,531.1 955,531.1 955,531.8 956,531.8 956,532.4 957,532.4 957,531.0 958,531.0 958,530.3 959,530.3 959,529.4 960,529.4 960,527.2 961,527.2 961,526.9 962,526.9 962,526.6 963,526.6 963,526.3 964,526.3 964,528.0 965,528.0 965,527.0 966,527.0 966,527.5 967,527.5 967,528.0 968,528.0 968,528.5 969,528.5 969,529.6 970,529.6 970,529.6 971,529.6 971,529.8 972,529.8 972,530.5 973,530.5 973,531.3 974,531.3 974,531.9 975,531.9 975,532.3 976,532.3 976,532.1 977,532.1 977,531.4 978,531.4 978,530.5 979,530.5 979,529.5 980,529.5 980,529.7 981,529.7 981,529.1 982,529.1 982,529.2 983,529.2 983,529.2 984,529.2 984,528.1 985,528.1 985,528.3 986,528.3 986,528.9 987,528.9 987,528.9 988,528.9 988,529.1 989,529.1 989,528.5 990,528.5 990,529.4 991,529.4 991,529.6 992,529.6 992,530.3 993,530.3 993,529.7 994,529.7 994,530.1 995,530.1 995,530.8 996,530.8 996,530.9 997,530.9 997,531.1 998,531.1 998,531.9 999,531.9 999,532.1 1000,532.1 1000,532.4 1001,532.4 1001,532.7 1002,532.7 1002,532.7 1003,532.7 1003,532.6 1004,532.6 1004,532.5 1005,532.5 1005,532.5 1006,532.5 1006,532.4 1007,532.4 1007,532.4 1008,532.4 1008,532.3 1009,532.3 1009,532.3 1010,532.3 1010,532.1 1011,532.1 1011,531.8 1012,531.8 1012,531.1 1013,531.1 1013,530.7 1014,530.7 1014,530.5 1015,530.5 1015,529.4 1016,529.4 1016,529.8 1017,529.8 1017,530.5 1018,530.5 1018,530.5 1019,530.5 1019,531.3 1020,531.3 1020,531.6 1021,531.6 1021,531.4 1022,531.4 1022,532.0 1023,532.0 1023,532.0 1024,532.0 1024,532.6 1025,532.6 1025,532.7 1026,532.7 1026,532.6 1027,532.6 1027,532.6 1028,532.6 1028,532.7 1029,532.7 1029,532.5 1030,532.5 1030,532.5 1031,532.5 1031,532.2 1032,532.2 1032,532.5 1033,532.5 1033,532.3 1034,532.3 1034,532.4 1035,532.4 1035,532.7 1036,532.7 1036,532.6 1037,532.6 1037,532.6 1038,532.6 1038,532.7 1039,532.7 1039,532.8 1040,532.8 1040,532.8 1041,532.8 1041,532.7 1042,532.7 1042,532.7 1043,532.7 1043,532.6 1044,532.6 1044,532.4 1045,532.4 1045,532.2 1046,532.2 1046,532.4 1047,532.4 1047,532.3 1048,532.3 1048,531.5 1049,531.5 1049,530.2 1050,530.2 1050,529.0 1051,529.0 1051,527.9 1052,527.9 1052,527.1 1053,527.1 1053,526.5 1054,526.5 1054,525.6 1055,525.6 1055,526.7 1056,526.7 1056,526.7 1057,526.7 1057,527.7 1058,527.7 1058,528.4 1059,528.4 1059,529.2 1060,529.2 1060,529.9 1061,529.9 1061,530.0 1062,530.0 1062,530.3 1063,530.3 1063,530.6 1064,530.6 1064,531.7 1065,531.7 1065,532.2 1066,532.2 1066,532.2 1067,532.2 1067,532.4 1068,532.4 1068,532.3 1069,532.3 1069,532.6 1070,532.6 1070,532.2 1071,532.2 1071,531.7 1072,531.7 1072,531.0 1073,531.0 1073,531.1 1074,531.1 1074,530.6 1075,530.6 1075,530.5 1076,530.5 1076,531.0 1077,531.0 1077,530.6 1078,530.6 1078,531.0 1079,531.0 1079,531.4 1080,531.4 1080,531.2 1081,531.2 1081,532.0 1082,532.0 1082,532.0 1083,532.0 1083,532.5 1084,532.5 1084,531.0 1085,531.0 1085,530.0 1086,530.0 1086,528.3 1087,528.3 1087,527.1 1088,527.1 1088,526.0 1089,526.0 1089,524.3 1090,524.3 1090,524.5 1091,524.5 1091,523.8 1092,523.8 1092,526.2 1093,526.2 1093,525.4 1094,525.4 1094,526.8 1095,526.8 1095,527.6 1096,527.6 1096,528.7 1097,528.7 1097,529.6 1098,529.6 1098,530.2 1099,530.2 1099,530.5 1100,530.5 1100,531.8 1101,531.8 1101,532.2 1102,532.2 1102,532.2 1103,532.2 1103,532.4 1104,532.4 1104,532.5 1105,532.5 1105,532.5 1106,532.5 1106,532.5 1107,532.5 1107,532.6 1108,532.6 1108,532.8 1109,532.8 1109,532.8 1110,532.8 1110,532.8 1111,532.8 1111,532.9 1112,532.9 1112,532.9 1113,532.9 1113,532.8 1114,532.8 1114,532.8 1115,532.8 1115,532.8 1116,532.8 1116,532.8 1117,532.8 1117,532.9 1118,532.9 1118,532.7 1119,532.7 1119,532.8 1120,532.8 1120,532.7 1121,532.7 1121,532.9 1122,532.9 1122,532.7 1123,532.7 1123,532.9 1124,532.9 1124,532.7 1125,532.7 1125,532.8 1126,532.8 1126,532.8 1127,532.8 1127,532.8 1128,532.8 1128,532.9 1129,532.9 1129,532.9 1130,532.9 1130,532.8 1131,532.8 1131,532.9 1132,532.9 1132,532.9 1133,532.9 1133,532.9 1134,532.9 1134,532.8 1135,532.8 1135,532.8 1136,532.8 1136,532.7 1137,532.7 1137,532.9 1138,532.9 1138,532.8 1139,532.8 1139,532.8 1140,532.8 1140,534.2 1139,534.2 1139,534.2 1138,534.2 1138,534.1 1137,534.1 1137,534.3 1136,534.3 1136,534.2 1135,534.2 1135,534.2 1134,534.2 1134,534.1 1133,534.1 1133,534.1 1132,534.1 1132,534.1 1131,534.1 1131,534.2 1130,534.2 1130,534.1 1129,534.1 1129,534.1 1128,534.1 1128,534.2 1127,534.2 1127,534.2 1126,534.2 1126,534.2 1125,534.2 1125,534.3 1124,534.3 1124,534.1 1123,534.1 1123,534.3 1122,534.3 1122,534.1 1121,534.1 1121,534.3 1120,534.3 1120,534.2 1119,534.2 1119,534.3 1118,534.3 1118,534.1 1117,534.1 1117,534.2 1116,534.2 1116,534.2 1115,534.2 1115,534.2 1114,534.2 1114,534.2 1113,534.2 1113,534.1 1112,534.1 1112,534.1 1111,534.1 1111,534.2 1110,534.2 1110,534.2 1109,534.2 1109,534.2 1108,534.2 1108,534.4 1107,534.4 1107,534.5 1106,534.5 1106,534.5 1105,534.5 1105,534.5 1104,534.5 1104,534.6 1103,534.6 1103,534.8 1102,534.8 1102,534.8 1101,534.8 1101,535.2 1100,535.2 1100,536.5 1099,536.5 1099,536.8 1098,536.8 1098,537.4 1097,537.4 1097,538.3 1096,538.3 1096,539.4 1095,539.4 1095,540.2 1094,540.2 1094,541.6 1093,541.6 1093,540.8 1092,540.8 1092,543.2 1091,543.2 1091,542.5 1090,542.5 1090,542.7 1089,542.7 1089,541.0 1088,541.0 1088,539.9 1087,539.9 1087,538.7 1086,538.7 1086,537.0 1085,537.0 1085,536.0 1084,536.0 1084,534.5 1083,534.5 1083,535.0 1082,535.0 1082,535.0 1081,535.0 1081,535.8 1080,535.8 1080,535.6 1079,535.6 1079,536.0 1078,536.0 1078,536.4 1077,536.4 1077,536.0 1076,536.0 1076,536.5 1075,536.5 1075,536.4 1074,536.4 1074,535.9 1073,535.9 1073,536.0 1072,536.0 1072,535.3 1071,535.3 1071,534.8 1070,534.8 1070,534.4 1069,534.4 1069,534.7 1068,534.7 1068,534.6 1067,534.6 1067,534.8 1066,534.8 1066,534.8 1065,534.8 1065,535.3 1064,535.3 1064,536.4 1063,536.4 1063,536.7 1062,536.7 1062,537.0 1061,537.0 1061,537.1 1060,537.1 1060,537.8 1059,537.8 1059,538.6 1058,538.6 1058,539.3 1057,539.3 1057,540.3 1056,540.3 1056,540.3 1055,540.3 1055,541.4 1054,541.4 1054,540.5 1053,540.5 1053,539.9 1052,539.9 1052,539.1 1051,539.1 1051,538.0 1050,538.0 1050,536.8 1049,536.8 1049,535.5 1048,535.5 1048,534.7 1047,534.7 1047,534.6 1046,534.6 1046,534.8 1045,534.8 1045,534.6 1044,534.6 1044,534.4 1043,534.4 1043,534.3 1042,534.3 1042,534.3 1041,534.3 1041,534.2 1040,534.2 1040,534.2 1039,534.2 1039,534.3 1038,534.3 1038,534.4 1037,534.4 1037,534.4 1036,534.4 1036,534.3 1035,534.3 1035,534.6 1034,534.6 1034,534.7 1033,534.7 1033,534.5 1032,534.5 1032,534.8 1031,534.8 1031,534.5 1030,534.5 1030,534.5 1029,534.5 1029,534.3 1028,534.3 1028,534.4 1027,534.4 1027,534.4 1026,534.4 1026,534.3 1025,534.3 1025,534.4 1024,534.4 1024,535.0 1023,535.0 1023,535.0 1022,535.0 1022,535.6 1021,535.6 1021,535.4 1020,535.4 1020,535.7 1019,535.7 1019,536.5 1018,536.5 1018,536.5 1017,536.5 1017,537.2 1016,537.2 1016,537.6 1015,537.6 1015,536.5 1014,536.5 1014,536.3 1013,536.3 1013,535.9 1012,535.9 1012,535.2 1011,535.2 1011,534.9 1010,534.9 1010,534.7 1009,534.7 1009,534.7 1008,534.7 1008,534.6 1007,534.6 1007,534.6 1006,534.6 1006,534.5 1005,534.5 1005,534.5 1004,534.5 1004,534.4 1003,534.4 1003,534.3 1002,534.3 1002,534.3 1001,534.3 1001,534.6 1000,534.6 1000,534.9 999,534.9 999,535.1 998,535.1 998,535.9 997,535.9 997,536.1 996,536.1 996,536.2 995,536.2 995,536.9 994,536.9 994,537.3 993,537.3 993,536.7 992,536.7 992,537.4 991,537.4 991,537.6 990,537.6 990,538.5 989,538.5 989,537.9 988,537.9 988,538.1 987,538.1 987,538.1 986,538.1 986,538.7 985,538.7 985,538.9 984,538.9 984,537.8 983,537.8 983,537.8 982,537.8 982,537.9 981,537.9 981,537.3 980,537.3 980,537.5 979,537.5 979,536.5 978,536.5 978,535.6 977,535.6 977,534.9 976,534.9 976,534.7 975,534.7 975,535.1 974,535.1 974,535.7 973,535.7 973,536.5 972,536.5 972,537.2 971,537.2 971,537.4 970,537.4 970,537.4 969,537.4 969,538.5 968,538.5 968,539.0 967,539.0 967,539.5 966,539.5 966,540.0 965,540.0 965,539.0 964,539.0 964,540.7 963,540.7 963,540.4 962,540.4 962,540.1 961,540.1 961,539.8 960,539.8 960,537.6 959,537.6 959,536.7 958,536.7 958,536.0 957,536.0 957,534.6 956,534.6 956,535.2 955,535.2 955,535.9 954,535.9 954,536.0 953,536.0 953,536.4 952,536.4 952,537.8 951,537.8 951,537.2 950,537.2 950,537.8 949,537.8 949,539.0 948,539.0 948,538.5 947,538.5 947,538.7 946,538.7 946,539.7 945,539.7 945,537.9 944,537.9 944,537.8 943,537.8 943,536.5 942,536.5 942,535.1 941,535.1 941,534.6 940,534.6 940,534.8 939,534.8 939,534.9 938,534.9 938,535.3 937,535.3 937,535.3 936,535.3 936,535.8 935,535.8 935,535.9 934,535.9 934,536.0 933,536.0 933,536.4 932,536.4 932,537.1 931,537.1 931,536.9 930,536.9 930,537.1 929,537.1 929,538.3 928,538.3 928,537.7 927,537.7 927,538.2 926,538.2 926,538.3 925,538.3 925,538.6 924,538.6 924,540.1 923,540.1 923,539.2 922,539.2 922,539.2 921,539.2 921,539.2 920,539.2 920,539.7 919,539.7 919,539.0 918,539.0 918,539.6 917,539.6 917,538.3 916,538.3 916,538.3 915,538.3 915,539.1 914,539.1 914,539.8 913,539.8 913,540.1 912,540.1 912,540.2 911,540.2 911,539.3 910,539.3 910,540.3 909,540.3 909,540.2 908,540.2 908,540.9 907,540.9 907,541.9 906,541.9 906,541.2 905,541.2 905,542.0 904,542.0 904,542.6 903,542.6 903,544.7 902,544.7 902,546.6 901,546.6 901,544.8 900,544.8 900,544.2 899,544.2 899,545.0 898,545.0 898,542.2 897,542.2 897,542.6 896,542.6 896,541.8 895,541.8 895,542.3 894,542.3 894,542.3 893,542.3 893,540.9 892,540.9 892,542.5 891,542.5 891,543.1 890,543.1 890,542.2 889,542.2 889,542.7 888,542.7 888,542.3 887,542.3 887,542.7 886,542.7 886,542.7 885,542.7 885,543.8 884,543.8 884,543.7 883,543.7 883,542.8 882,542.8 882,543.4 881,543.4 881,542.1 880,542.1 880,541.4 879,541.4 879,541.2 878,541.2 878,540.7 877,540.7 877,542.0 876,542.0 876,540.5 875,540.5 875,539.9 874,539.9 874,541.0 873,541.0 873,541.3 872,541.3 872,541.8 871,541.8 871,541.8 870,541.8 870,544.0 869,544.0 869,543.0 868,543.0 868,542.6 867,542.6 867,543.3 866,543.3 866,544.4 865,544.4 865,542.9 864,542.9 864,543.3 863,543.3 863,542.8 862,542.8 862,541.9 861,541.9 861,541.6 860,541.6 860,542.2 859,542.2 859,542.6 858,542.6 858,542.5 857,542.5 857,542.2 856,542.2 856,542.0 855,542.0 855,541.6 854,541.6 854,541.5 853,541.5 853,542.1 852,542.1 852,542.8 851,542.8 851,542.3 850,542.3 850,541.9 849,541.9 849,542.2 848,542.2 848,543.2 847,543.2 847,541.4 846,541.4 846,541.0 845,541.0 845,542.0 844,542.0 844,542.4 843,542.4 843,540.9 842,540.9 842,541.9 841,541.9 841,540.7 840,540.7 840,540.5 839,540.5 839,540.8 838,540.8 838,539.7 837,539.7 837,539.3 836,539.3 836,539.0 835,539.0 835,539.5 834,539.5 834,539.4 833,539.4 833,539.0 832,539.0 832,539.8 831,539.8 831,539.3 830,539.3 830,538.3 829,538.3 829,539.8 828,539.8 828,539.3 827,539.3 827,539.8 826,539.8 826,538.9 825,538.9 825,539.5 824,539.5 824,538.3 823,538.3 823,537.0 822,537.0 822,537.0 821,537.0 821,535.8 820,535.8 820,534.9 819,534.9 819,534.8 818,534.8 818,535.2 817,535.2 817,535.5 816,535.5 816,536.2 815,536.2 815,536.8 814,536.8 814,537.2 813,537.2 813,537.5 812,537.5 812,537.8 811,537.8 811,538.6 810,538.6 810,539.8 809,539.8 809,539.6 808,539.6 808,540.2 807,540.2 807,540.0 806,540.0 806,541.8 805,541.8 805,539.3 804,539.3 804,538.9 803,538.9 803,537.2 802,537.2 802,535.4 801,535.4 801,534.6 800,534.6 800,534.9 799,534.9 799,534.8 798,534.8 798,535.2 797,535.2 797,535.4 796,535.4 796,536.3 795,536.3 795,537.1 794,537.1 794,537.3 793,537.3 793,538.0 792,538.0 792,539.1 791,539.1 791,539.4 790,539.4 790,539.9 789,539.9 789,538.8 788,538.8 788,538.3 787,538.3 787,538.7 786,538.7 786,538.4 785,538.4 785,539.9 784,539.9 784,541.3 783,541.3 783,540.8 782,540.8 782,543.6 781,543.6 781,543.5 780,543.5 780,543.8 779,543.8 779,544.7 778,544.7 778,543.8 777,543.8 777,544.9 776,544.9 776,546.1 775,546.1 775,545.1 774,545.1 774,545.8 773,545.8 773,545.7 772,545.7 772,544.6 771,544.6 771,543.6 770,543.6 770,541.6 769,541.6 769,541.0 768,541.0 768,541.3 767,541.3 767,539.2 766,539.2 766,538.4 765,538.4 765,536.5 764,536.5 764,534.8 763,534.8 763,534.4 762,534.4 762,534.8 761,534.8 761,535.1 760,535.1 760,535.6 759,535.6 759,535.9 758,535.9 758,536.6 757,536.6 757,536.4 756,536.4 756,536.6 755,536.6 755,536.2 754,536.2 754,536.5 753,536.5 753,537.0 752,537.0 752,537.5 751,537.5 751,538.7 750,538.7 750,538.3 749,538.3 749,539.8 748,539.8 748,539.8 747,539.8 747,541.0 746,541.0 746,541.4 745,541.4 745,542.0 744,542.0 744,541.7 743,541.7 743,542.3 742,542.3 742,541.6 741,541.6 741,539.4 740,539.4 740,537.1 739,537.1 739,535.0 738,535.0 738,534.2 737,534.2 737,534.1 736,534.1 736,534.2 735,534.2 735,534.2 734,534.2 734,534.2 733,534.2 733,534.2 732,534.2 732,534.2 731,534.2 731,534.1 730,534.1 730,534.2 729,534.2 729,534.2 728,534.2 728,534.2 727,534.2 727,534.2 726,534.2 726,534.1 725,534.1 725,534.1 724,534.1 724,534.1 723,534.1 723,534.3 722,534.3 722,534.2 721,534.2 721,534.2 720,534.2 720,534.1 719,534.1 719,534.2 718,534.2 718,534.3 717,534.3 717,534.2 716,534.2 716,534.3 715,534.3 715,534.2 714,534.2 714,534.1 713,534.1 713,534.1 712,534.1 712,534.2 711,534.2 711,534.2 710,534.2 710,534.3 709,534.3 709,534.1 708,534.1 708,534.4 707,534.4 707,534.6 706,534.6 706,534.7 705,534.7 705,535.0 704,535.0 704,535.3 703,535.3 703,535.5 702,535.5 702,536.2 701,536.2 701,536.8 700,536.8 700,537.8 699,537.8 699,538.5 698,538.5 698,539.4 697,539.4 697,539.7 696,539.7 696,540.9 695,540.9 695,543.4 694,543.4 694,545.3 693,545.3 693,545.7 692,545.7 692,544.2 691,544.2 691,543.3 690,543.3 690,543.2 689,543.2 689,541.5 688,541.5 688,541.3 687,541.3 687,540.6 686,540.6 686,540.8 685,540.8 685,540.6 684,540.6 684,540.2 683,540.2 683,541.5 682,541.5 682,541.5 681,541.5 681,540.0 680,540.0 680,540.7 679,540.7 679,540.9 678,540.9 678,541.6 677,541.6 677,540.9 676,540.9 676,541.4 675,541.4 675,540.3 674,540.3 674,541.7 673,541.7 673,540.2 672,540.2 672,541.6 671,541.6 671,540.1 670,540.1 670,541.5 669,541.5 669,541.6 668,541.6 668,540.1 667,540.1 667,539.7 666,539.7 666,538.5 665,538.5 665,539.2 664,539.2 664,537.7 663,537.7 663,537.6 662,537.6 662,538.4 661,538.4 661,538.6 660,538.6 660,539.0 659,539.0 659,538.0 658,538.0 658,539.4 657,539.4 657,537.9 656,537.9 656,537.3 655,537.3 655,536.7 654,536.7 654,535.5 653,535.5 653,534.5 652,534.5 652,534.5 651,534.5 651,534.8 650,534.8 650,534.9 649,534.9 649,535.2 648,535.2 648,536.7 647,536.7 647,538.7 646,538.7 646,541.1 645,541.1 645,543.6 644,543.6 644,545.5 643,545.5 643,546.2 642,546.2 642,548.9 641,548.9 641,549.2 640,549.2 640,549.4 639,549.4 639,549.1 638,549.1 638,547.4 637,547.4 637,547.8 636,547.8 636,546.4 635,546.4 635,546.2 634,546.2 634,545.5 633,545.5 633,543.5 632,543.5 632,543.2 631,543.2 631,541.3 630,541.3 630,541.5 629,541.5 629,540.8 628,540.8 628,539.1 627,539.1 627,537.9 626,537.9 626,537.7 625,537.7 625,537.9 624,537.9 624,538.8 623,538.8 623,539.1 622,539.1 622,539.2 621,539.2 621,539.1 620,539.1 620,538.6 619,538.6 619,537.9 618,537.9 618,537.8 617,537.8 617,536.7 616,536.7 616,536.1 615,536.1 615,535.6 614,535.6 614,535.0 613,535.0 613,535.0 612,535.0 612,535.6 611,535.6 611,536.2 610,536.2 610,536.6 609,536.6 609,537.5 608,537.5 608,537.3 607,537.3 607,537.6 606,537.6 606,538.0 605,538.0 605,538.2 604,538.2 604,538.5 603,538.5 603,537.4 602,537.4 602,537.4 601,537.4 601,536.5 600,536.5 600,536.0 599,536.0 599,535.5 598,535.5 598,535.0 597,535.0 597,534.5 596,534.5 596,534.7 595,534.7 595,535.2 594,535.2 594,535.4 593,535.4 593,536.0 592,536.0 592,536.2 591,536.2 591,536.6 590,536.6 590,536.9 589,536.9 589,538.7 588,538.7 588,540.2 587,540.2 587,542.0 586,542.0 586,540.7 585,540.7 585,541.8 584,541.8 584,541.1 583,541.1 583,542.1 582,542.1 582,542.3 581,542.3 581,542.2 580,542.2 580,540.7 579,540.7 579,538.1 578,538.1 578,537.2 577,537.2 577,535.5 576,535.5 576,534.7 575,534.7 575,534.8 574,534.8 574,534.7 573,534.7 573,534.7 572,534.7 572,534.8 571,534.8 571,535.1 570,535.1 570,535.2 569,535.2 569,535.2 568,535.2 568,536.4 567,536.4 567,538.8 566,538.8 566,540.3 565,540.3 565,541.8 564,541.8 564,543.4 563,543.4 563,545.0 562,545.0 562,546.0 561,546.0 561,547.8 560,547.8 560,547.8 559,547.8 559,551.0 558,551.0 558,550.8 557,550.8 557,550.1 556,550.1 556,549.4 555,549.4 555,545.5 554,545.5 554,546.2 553,546.2 553,543.3 552,543.3 552,542.0 551,542.0 551,540.9 550,540.9 550,539.3 549,539.3 549,538.0 548,538.0 548,537.2 547,537.2 547,538.4 546,538.4 546,540.5 545,540.5 545,541.0 544,541.0 544,541.7 543,541.7 543,540.1 542,540.1 542,540.3 541,540.3 541,540.4 540,540.4 540,541.1 539,541.1 539,540.4 538,540.4 538,541.3 537,541.3 537,541.9 536,541.9 536,542.9 535,542.9 535,543.5 534,543.5 534,545.0 533,545.0 533,543.4 532,543.4 532,546.6 531,546.6 531,546.3 530,546.3 530,546.9 529,546.9 529,548.1 528,548.1 528,548.7 527,548.7 527,546.7 526,546.7 526,546.6 525,546.6 525,549.6 524,549.6 524,550.8 523,550.8 523,547.5 522,547.5 522,543.3 521,543.3 521,540.1 520,540.1 520,536.0 519,536.0 519,534.3 518,534.3 518,534.2 517,534.2 517,534.3 516,534.3 516,534.2 515,534.2 515,534.4 514,534.4 514,534.6 513,534.6 513,534.9 512,534.9 512,535.3 511,535.3 511,535.3 510,535.3 510,535.9 509,535.9 509,536.3 508,536.3 508,537.2 507,537.2 507,538.0 506,538.0 506,538.0 505,538.0 505,539.0 504,539.0 504,538.8 503,538.8 503,539.7 502,539.7 502,540.2 501,540.2 501,539.9 500,539.9 500,540.2 499,540.2 499,542.6 498,542.6 498,542.5 497,542.5 497,543.6 496,543.6 496,542.1 495,542.1 495,542.7 494,542.7 494,544.6 493,544.6 493,543.7 492,543.7 492,542.5 491,542.5 491,542.7 490,542.7 490,543.3 489,543.3 489,542.5 488,542.5 488,543.7 487,543.7 487,543.6 486,543.6 486,545.6 485,545.6 485,545.0 484,545.0 484,547.9 483,547.9 483,548.8 482,548.8 482,546.7 481,546.7 481,544.4 480,544.4 480,544.0 479,544.0 479,542.6 478,542.6 478,537.2 477,537.2 477,534.2 476,534.2 476,534.2 475,534.2 475,534.1 474,534.1 474,534.1 473,534.1 473,534.1 472,534.1 472,534.2 471,534.2 471,534.2 470,534.2 470,534.2 469,534.2 469,534.2 468,534.2 468,534.1 467,534.1 467,534.2 466,534.2 466,534.2 465,534.2 465,534.1 464,534.1 464,534.2 463,534.2 463,534.2 462,534.2 462,534.2 461,534.2 461,534.2 460,534.2 460,534.1 459,534.1 459,534.1 458,534.1 458,534.2 457,534.2 457,534.3 456,534.3 456,534.3 455,534.3 455,534.1 454,534.1 454,534.2 453,534.2 453,534.2 452,534.2 452,534.1 451,534.1 451,534.2 450,534.2 450,534.2 449,534.2 449,534.2 448,534.2 448,534.2 447,534.2 447,534.2 446,534.2 446,534.2 445,534.2" fill="#6464dc"/></svg>
<svg style="left:0;top:0" width="1366" height="708"><polygon points="132,230.3 133,230.3 133,231.0 134,231.0 134,230.5 135,230.5 135,230.1 136,230.1 136,231.5 137,231.5 137,230.0 138,230.0 138,230.9 139,230.9 139,230.5 140,230.5 140,231.1 141,231.1 141,230.7 142,230.7 142,231.0 143,231.0 143,230.0 144,230.0 144,229.9 145,229.9 145,230.6 146,230.6 146,231.0 147,231.0 147,229.9 148,229.9 148,229.9 149,229.9 149,230.4 150,230.4 150,230.3 151,230.3 151,231.3 152,231.3 152,230.5 153,230.5 153,229.3 154,229.3 154,230.6 155,230.6 155,230.6 156,230.6 156,230.4 157,230.4 157,231.0 158,231.0 158,231.4 159,231.4 159,230.7 160,230.7 160,231.0 161,231.0 161,230.2 162,230.2 162,230.9 163,230.9 163,229.9 164,229.9 164,231.1 165,231.1 165,230.2 166,230.2 166,230.7 167,230.7 167,230.8 168,230.8 168,231.3 169,231.3 169,230.5 170,230.5 170,230.6 171,230.6 171,231.3 172,231.3 172,230.9 173,230.9 173,230.3 174,230.3 174,231.8 175,231.8 175,230.9 176,230.9 176,230.6 177,230.6 177,231.0 178,231.0 178,231.0 179,231.0 179,230.5 180,230.5 180,230.5 181,230.5 181,231.4 182,231.4 182,231.5 183,231.5 183,232.1 184,232.1 184,232.4 185,232.4 185,232.4 186,232.4 186,231.2 187,231.2 187,231.1 188,231.1 188,229.4 189,229.4 189,228.3 190,228.3 190,228.0 191,228.0 191,227.6 192,227.6 192,229.5 193,229.5 193,229.0 194,229.0 194,226.0 195,226.0 195,227.3 196,227.3 196,227.4 197,227.4 197,225.4 198,225.4 198,227.2 199,227.2 199,227.8 200,227.8 200,227.3 201,227.3 201,224.7 202,224.7 202,226.9 203,226.9 203,226.3 204,226.3 204,228.8 205,228.8 205,225.8 206,225.8 206,228.0 207,228.0 207,226.0 208,226.0 208,225.4 209,225.4 209,224.5 210,224.5 210,225.4 211,225.4 211,229.2 212,229.2 212,228.6 213,228.6 213,227.9 214,227.9 214,226.1 215,226.1 215,227.7 216,227.7 216,227.7 217,227.7 217,227.0 218,227.0 218,225.5 219,225.5 219,227.8 220,227.8 220,226.8 221,226.8 221,226.3 222,226.3 222,227.0 223,227.0 223,226.0 224,226.0 224,228.2 225,228.2 225,230.7 226,230.7 226,231.1 227,231.1 227,231.1 228,231.1 228,229.0 229,229.0 229,229.0 230,229.0 230,229.3 231,229.3 231,228.4 232,228.4 232,228.5 233,228.5 233,225.3 234,225.3 234,228.4 235,228.4 235,226.6 236,226.6 236,227.3 237,227.3 237,227.6 238,227.6 238,224.4 239,224.4 239,224.6 240,224.6 240,225.5 241,225.5 241,226.2 242,226.2 242,226.7 243,226.7 243,227.7 244,227.7 244,228.9 245,228.9 245,229.4 246,229.4 246,227.4 247,227.4 247,229.4 248,229.4 248,225.7 249,225.7 249,228.6 250,228.6 250,228.3 251,228.3 251,226.5 252,226.5 252,226.6 253,226.6 253,229.6 254,229.6 254,226.7 255,226.7 255,229.9 256,229.9 256,230.2 257,230.2 257,229.2 258,229.2 258,228.5 259,228.5 259,230.1 260,230.1 260,230.0 261,230.0 261,229.5 262,229.5 262,229.9 263,229.9 263,231.0 264,231.0 264,230.7 265,230.7 265,230.4 266,230.4 266,230.5 267,230.5 267,232.2 268,232.2 268,231.6 269,231.6 269,232.2 270,232.2 270,232.1 271,232.1 271,232.4 272,232.4 272,232.1 273,232.1 273,232.5 274,232.5 274,232.1 275,232.1 275,232.5 276,232.5 276,232.3 277,232.3 277,232.2 278,232.2 278,232.2 279,232.2 279,232.5 280,232.5 280,232.5 281,232.5 281,232.2 282,232.2 282,232.2 283,232.2 283,232.5 284,232.5 284,232.1 285,232.1 285,232.3 286,232.3 286,232.3 287,232.3 287,232.3 288,232.3 288,231.9 289,231.9 289,232.2 290,232.2 290,232.1 291,232.1 291,232.4 292,232.4 292,231.9 293,231.9 293,232.3 294,232.3 294,232.2 295,232.2 295,232.5 296,232.5 296,232.5 297,232.5 297,232.5 298,232.5 298,232.5 299,232.5 299,232.0 300,232.0 300,232.0 301,232.0 301,232.4 302,232.4 302,232.5 303,232.5 303,232.4 304,232.4 304,232.1 305,232.1 305,232.4 306,232.4 306,232.0 307,232.0 307,232.2 308,232.2 308,232.5 309,232.5 309,231.9 310,231.9 310,232.3 311,232.3 311,232.5 312,232.5 312,232.2 313,232.2 313,232.0 314,232.0 314,232.1 315,232.1 315,232.4 316,232.4 316,232.1 317,232.1 317,232.1 318,232.1 318,232.2 319,232.2 319,232.4 320,232.4 320,232.1 321,232.1 321,231.9 322,231.9 322,232.1 323,232.1 323,232.3 324,232.3 324,232.5 325,232.5 325,232.4 326,232.4 326,232.2 327,232.2 327,231.6 328,231.6 328,231.2 329,231.2 329,230.6 330,230.6 330,230.9 331,230.9 331,230.7 332,230.7 332,230.6 333,230.6 333,230.7 334,230.7 334,231.7 335,231.7 335,231.4 336,231.4 336,231.1 337,231.1 337,230.7 338,230.7 338,231.7 339,231.7 339,230.5 340,230.5 340,231.1 341,231.1 341,231.5 342,231.5 342,230.7 343,230.7 343,231.2 344,231.2 344,231.4 345,231.4 345,231.1 346,231.1 346,231.3 347,231.3 347,231.2 348,231.2 348,231.5 349,231.5 349,231.6 350,231.6 350,231.5 351,231.5 351,231.2 352,231.2 352,230.9 353,230.9 353,230.7 354,230.7 354,230.9 355,230.9 355,230.8 356,230.8 356,230.8 357,230.8 357,230.9 358,230.9 358,231.4 359,231.4 359,230.6 360,230.6 360,230.5 361,230.5 361,231.1 362,231.1 362,230.9 363,230.9 363,230.8 364,230.8 364,231.8 365,231.8 365,230.8 366,230.8 366,231.0 367,231.0 367,230.7 368,230.7 368,230.5 369,230.5 369,231.5 370,231.5 370,231.7 371,231.7 371,231.5 372,231.5 372,231.9 373,231.9 373,232.1 374,232.1 374,232.5 375,232.5 375,232.5 376,232.5 376,232.1 377,232.1 377,232.1 378,232.1 378,232.1 379,232.1 379,231.9 380,231.9 380,232.3 381,232.3 381,232.2 382,232.2 382,232.5 383,232.5 383,232.0 384,232.0 384,232.5 385,232.5 385,232.3 386,232.3 386,232.3 387,232.3 387,232.4 388,232.4 388,232.4 389,232.4 389,232.2 390,232.2 390,232.5 391,232.5 391,232.2 392,232.2 392,232.5 393,232.5 393,232.5 394,232.5 394,232.1 395,232.1 395,232.3 396,232.3 396,232.5 397,232.5 397,232.4 398,232.4 398,232.5 399,232.5 399,232.2 400,232.2 400,232.5 401,232.5 401,232.1 402,232.1 402,232.2 403,232.2 403,232.5 404,232.5 404,232.1 405,232.1 405,232.2 406,232.2 406,232.2 407,232.2 407,232.1 408,232.1 408,232.1 409,232.1 409,232.4 410,232.4 410,232.1 411,232.1 411,232.2 412,232.2 412,232.1 413,232.1 413,232.0 414,232.0 414,232.1 415,232.1 415,232.5 416,232.5 416,232.1 417,232.1 417,232.3 418,232.3 418,232.2 419,232.2 419,232.5 420,232.5 420,232.5 421,232.5 421,232.0 422,232.0 422,232.3 423,232.3 423,232.5 424,232.5 424,232.1 425,232.1 425,232.4 426,232.4 426,232.0 427,232.0 427,231.9 428,231.9 428,231.9 429,231.9 429,232.0 430,232.0 430,232.4 431,232.4 431,232.5 432,232.5 432,232.5 433,232.5 433,232.0 434,232.0 434,232.0 435,232.0 435,232.3 436,232.3 436,232.3 437,232.3 437,232.4 438,232.4 438,232.1 439,232.1 439,232.5 440,232.5 440,232.0 441,232.0 441,232.5 442,232.5 442,231.9 443,231.9 443,232.3 444,232.3 444,232.1 445,232.1 445,232.3 446,232.3 446,231.9 447,231.9 447,232.5 448,232.5 448,232.5 449,232.5 449,232.1 450,232.1 450,232.3 451,232.3 451,232.1 452,232.1 452,232.1 453,232.1 453,232.5 454,232.5 454,232.1 455,232.1 455,232.2 456,232.2 456,232.2 457,232.2 457,232.5 458,232.5 458,232.2 459,232.2 459,232.3 460,232.3 460,232.4 461,232.4 461,232.0 462,232.0 462,232.0 463,232.0 463,232.5 464,232.5 464,232.1 465,232.1 465,232.5 466,232.5 466,232.0 467,232.0 467,232.4 468,232.4 468,229.7 469,229.7 469,226.6 470,226.6 470,219.4 471,219.4 471,218.3 472,218.3 472,221.8 473,221.8 473,220.9 474,220.9 474,216.6 475,216.6 475,220.3 476,220.3 476,222.3 477,222.3 477,219.1 478,219.1 478,218.9 479,218.9 479,216.9 480,216.9 480,218.1 481,218.1 481,221.9 482,221.9 482,221.0 483,221.0 483,221.9 484,221.9 484,224.9 485,224.9 485,224.0 486,224.0 486,222.1 487,222.1 487,223.7 488,223.7 488,224.5 489,224.5 489,228.2 490,228.2 490,229.3 491,229.3 491,230.1 492,230.1 492,229.5 493,229.5 493,230.4 494,230.4 494,229.9 495,229.9 495,229.8 496,229.8 496,230.3 497,230.3 497,230.3 498,230.3 498,231.3 499,231.3 499,230.4 500,230.4 500,231.3 501,231.3 501,230.7 502,230.7 502,230.8 503,230.8 503,232.0 504,232.0 504,231.6 505,231.6 505,231.6 506,231.6 506,231.3 507,231.3 507,231.9 508,231.9 508,232.3 509,232.3 509,231.3 510,231.3 510,229.7 511,229.7 511,225.1 512,225.1 512,220.2 513,220.2 513,224.9 514,224.9 514,224.1 515,224.1 515,222.3 516,222.3 516,223.8 517,223.8 517,221.9 518,221.9 518,225.9 519,225.9 519,223.5 520,223.5 520,224.9 521,224.9 521,223.6 522,223.6 522,226.6 523,226.6 523,228.2 524,228.2 524,227.1 525,227.1 525,228.0 526,228.0 526,226.0 527,226.0 527,229.2 528,229.2 528,230.3 529,230.3 529,230.7 530,230.7 530,229.7 531,229.7 531,230.7 532,230.7 532,230.9 533,230.9 533,232.0 534,232.0 534,231.4 535,231.4 535,229.5 536,229.5 536,227.8 537,227.8 537,226.2 538,226.2 538,226.5 539,226.5 539,223.3 540,223.3 540,219.8 541,219.8 541,220.4 542,220.4 542,216.5 543,216.5 543,217.2 544,217.2 544,218.9 545,218.9 545,218.7 546,218.7 546,224.0 547,224.0 547,219.0 548,219.0 548,221.8 549,221.8 549,224.7 550,224.7 550,221.3 551,221.3 551,228.1 552,228.1 552,224.9 553,224.9 553,225.1 554,225.1 554,227.5 555,227.5 555,226.5 556,226.5 556,229.8 557,229.8 557,228.9 558,228.9 558,230.0 559,230.0 559,229.3 560,229.3 560,230.6 561,230.6 561,231.1 562,231.1 562,230.4 563,230.4 563,231.6 564,231.6 564,231.8 565,231.8 565,231.9 566,231.9 566,232.4 567,232.4 567,231.4 568,231.4 568,230.2 569,230.2 569,229.0 570,229.0 570,227.3 571,227.3 571,227.1 572,227.1 572,227.4 573,227.4 573,225.4 574,225.4 574,227.4 575,227.4 575,227.9 576,227.9 576,227.7 577,227.7 577,227.1 578,227.1 578,226.6 579,226.6 579,226.8 580,226.8 580,224.7 581,224.7 581,228.6 582,228.6 582,227.4 583,227.4 583,227.6 584,227.6 584,229.7 585,229.7 585,229.6 586,229.6 586,231.1 587,231.1 587,232.0 588,232.0 588,230.7 589,230.7 589,231.2 590,231.2 590,229.9 591,229.9 591,227.6 592,227.6 592,227.9 593,227.9 593,228.0 594,228.0 594,225.0 595,225.0 595,228.4 596,228.4 596,226.6 597,226.6 597,226.2 598,226.2 598,227.5 599,227.5 599,225.7 600,225.7 600,229.5 601,229.5 601,229.2 602,229.2 602,228.0 603,228.0 603,229.2 604,229.2 604,227.8 605,227.8 605,230.7 606,230.7 606,230.2 607,230.2 607,229.9 608,229.9 608,230.9 609,230.9 609,231.0 610,231.0 610,231.0 611,231.0 611,231.1 612,231.1 612,231.2 613,231.2 613,231.8 614,231.8 614,230.3 615,230.3 615,230.5 616,230.5 616,228.4 617,228.4 617,227.4 618,227.4 618,228.7 619,228.7 619,225.1 620,225.1 620,227.9 621,227.9 621,224.9 622,224.9 622,229.3 623,229.3 623,226.5 624,226.5 624,228.5 625,228.5 625,229.9 626,229.9 626,228.3 627,228.3 627,230.8 628,230.8 628,231.4 629,231.4 629,230.3 630,230.3 630,231.0 631,231.0 631,232.5 632,232.5 632,232.4 633,232.4 633,232.4 634,232.4 634,231.4 635,231.4 635,231.1 636,231.1 636,231.5 637,231.5 637,231.1 638,231.1 638,230.7 639,230.7 639,230.7 640,230.7 640,230.1 641,230.1 641,231.3 642,231.3 642,230.7 643,230.7 643,230.9 644,230.9 644,229.2 645,229.2 645,230.2 646,230.2 646,229.5 647,229.5 647,230.5 648,230.5 648,230.5 649,230.5 649,230.9 650,230.9 650,231.2 651,231.2 651,231.1 652,231.1 652,231.8 653,231.8 653,231.5 654,231.5 654,230.4 655,230.4 655,229.2 656,229.2 656,229.0 657,229.0 657,230.1 658,230.1 658,228.9 659,228.9 659,228.6 660,228.6 660,228.7 661,228.7 661,229.8 662,229.8 662,229.8 663,229.8 663,230.8 664,230.8 664,231.4 665,231.4 665,230.9 666,230.9 666,230.0 667,230.0 667,229.2 668,229.2 668,230.6 669,230.6 669,229.0 670,229.0 670,229.7 671,229.7 671,227.0 672,227.0 672,228.9 673,228.9 673,228.2 674,228.2 674,227.8 675,227.8 675,229.5 676,229.5 676,228.0 677,228.0 677,229.5 678,229.5 678,229.0 679,229.0 679,228.1 680,228.1 680,228.4 681,228.4 681,228.7 682,228.7 682,230.0 683,230.0 683,231.2 684,231.2 684,230.6 685,230.6 685,230.8 686,230.8 686,230.7 687,230.7 687,231.9 688,231.9 688,231.5 689,231.5 689,231.8 690,231.8 690,231.5 691,231.5 691,231.9 692,231.9 692,232.3 693,232.3 693,232.5 694,232.5 694,231.9 695,231.9 695,232.4 696,232.4 696,232.3 697,232.3 697,232.5 698,232.5 698,232.0 699,232.0 699,232.0 700,232.0 700,232.1 701,232.1 701,232.2 702,232.2 702,232.1 703,232.1 703,232.1 704,232.1 704,232.5 705,232.5 705,232.5 706,232.5 706,232.2 707,232.2 707,232.1 708,232.1 708,232.2 709,232.2 709,232.5 710,232.5 710,232.5 711,232.5 711,232.4 712,232.4 712,232.2 713,232.2 713,232.4 714,232.4 714,232.3 715,232.3 715,231.9 716,231.9 716,232.1 717,232.1 717,232.3 718,232.3 718,232.2 719,232.2 719,232.4 720,232.4 720,232.0 721,232.0 721,232.1 722,232.1 722,232.5 723,232.5 723,232.5 724,232.5 724,232.4 725,232.4 725,232.2 726,232.2 726,232.5 727,232.5 727,232.3 728,232.3 728,232.5 729,232.5 729,232.4 730,232.4 730,232.3 731,232.3 731,229.5 732,229.5 732,229.4 733,229.4 733,227.3 734,227.3 734,223.5 735,223.5 735,225.0 736,225.0 736,226.6 737,226.6 737,226.6 738,226.6 738,228.0 739,228.0 739,228.5 740,228.5 740,230.2 741,230.2 741,230.2 742,230.2 742,230.4 743,230.4 743,231.0 744,231.0 744,231.7 745,231.7 745,231.2 746,231.2 746,230.6 747,230.6 747,231.1 748,231.1 748,230.5 749,230.5 749,230.9 750,230.9 750,230.4 751,230.4 751,230.7 752,230.7 752,231.2 753,231.2 753,231.4 754,231.4 754,231.7 755,231.7 755,229.3 756,229.3 756,226.7 757,226.7 757,226.7 758,226.7 758,221.8 759,221.8 759,222.1 760,222.1 760,222.9 761,222.9 761,221.5 762,221.5 762,221.8 763,221.8 763,221.4 764,221.4 764,224.5 765,224.5 765,223.4 766,223.4 766,226.7 767,226.7 767,219.8 768,219.8 768,224.1 769,224.1 769,224.6 770,224.6 770,224.9 771,224.9 771,220.2 772,220.2 772,222.7 773,222.7 773,221.5 774,221.5 774,225.3 775,225.3 775,227.5 776,227.5 776,224.2 777,224.2 777,224.2 778,224.2 778,226.2 779,226.2 779,226.5 780,226.5 780,227.0 781,227.0 781,230.0 782,230.0 782,230.5 783,230.5 783,230.3 784,230.3 784,231.1 785,231.1 785,231.1 786,231.1 786,232.1 787,232.1 787,231.9 788,231.9 788,230.9 789,230.9 789,230.0 790,230.0 790,229.4 791,229.4 791,229.2 792,229.2 792,227.2 793,227.2 793,228.6 794,228.6 794,225.8 795,225.8 795,225.9 796,225.9 796,225.0 797,225.0 797,224.1 798,224.1 798,227.3 799,227.3 799,226.2 800,226.2 800,226.8 801,226.8 801,227.5 802,227.5 802,230.2 803,230.2 803,228.5 804,228.5 804,229.7 805,229.7 805,229.0 806,229.0 806,229.6 807,229.6 807,230.6 808,230.6 808,230.5 809,230.5 809,230.4 810,230.4 810,228.2 811,228.2 811,229.7 812,229.7 812,229.0 813,229.0 813,226.0 814,226.0 814,229.4 815,229.4 815,228.6 816,228.6 816,228.7 817,228.7 817,227.6 818,227.6 818,228.0 819,228.0 819,227.3 820,227.3 820,228.1 821,228.1 821,227.7 822,227.7 822,225.6 823,225.6 823,225.6 824,225.6 824,224.5 825,224.5 825,225.0 826,225.0 826,227.1 827,227.1 827,224.4 828,224.4 828,223.2 829,223.2 829,226.4 830,226.4 830,225.2 831,225.2 831,223.2 832,223.2 832,223.7 833,223.7 833,226.6 834,226.6 834,226.4 835,226.4 835,223.1 836,223.1 836,221.9 837,221.9 837,223.0 838,223.0 838,224.6 839,224.6 839,222.9 840,222.9 840,226.3 841,226.3 841,223.8 842,223.8 842,223.3 843,223.3 843,226.3 844,226.3 844,226.2 845,226.2 845,225.3 846,225.3 846,225.8 847,225.8 847,224.2 848,224.2 848,222.5 849,222.5 849,224.2 850,224.2 850,225.3 851,225.3 851,227.4 852,227.4 852,228.5 853,228.5 853,229.0 854,229.0 854,231.4 855,231.4 855,231.0 856,231.0 856,231.4 857,231.4 857,229.7 858,229.7 858,229.7 859,229.7 859,230.0 860,230.0 860,228.5 861,228.5 861,228.4 862,228.4 862,228.9 863,228.9 863,227.0 864,227.0 864,226.1 865,226.1 865,227.9 866,227.9 866,227.2 867,227.2 867,228.4 868,228.4 868,227.5 869,227.5 869,226.0 870,226.0 870,227.1 871,227.1 871,224.9 872,224.9 872,227.8 873,227.8 873,224.3 874,224.3 874,224.8 875,224.8 875,224.0 876,224.0 876,227.9 877,227.9 877,224.5 878,224.5 878,227.5 879,227.5 879,223.7 880,223.7 880,227.3 881,227.3 881,226.7 882,226.7 882,226.4 883,226.4 883,224.4 884,224.4 884,224.1 885,224.1 885,226.3 886,226.3 886,224.2 887,224.2 887,224.3 888,224.3 888,227.0 889,227.0 889,226.6 890,226.6 890,227.7 891,227.7 891,224.7 892,224.7 892,224.8 893,224.8 893,228.6 894,228.6 894,227.5 895,227.5 895,226.0 896,226.0 896,225.8 897,225.8 897,227.5 898,227.5 898,228.4 899,228.4 899,228.3 900,228.3 900,228.3 901,228.3 901,230.2 902,230.2 902,229.3 903,229.3 903,230.4 904,230.4 904,230.9 905,230.9 905,230.3 906,230.3 906,229.8 907,229.8 907,230.8 908,230.8 908,230.2 909,230.2 909,229.8 910,229.8 910,229.9 911,229.9 911,228.1 912,228.1 912,229.9 913,229.9 913,227.5 914,227.5 914,227.3 915,227.3 915,228.9 916,228.9 916,228.6 917,228.6 917,227.9 918,227.9 918,230.4 919,230.4 919,229.8 920,229.8 920,231.1 921,231.1 921,230.2 922,230.2 922,229.6 923,229.6 923,230.3 924,230.3 924,231.5 925,231.5 925,231.2 926,231.2 926,231.3 927,231.3 927,232.0 928,232.0 928,231.9 929,231.9 929,231.5 930,231.5 930,230.9 931,230.9 931,229.2 932,229.2 932,228.7 933,228.7 933,227.5 934,227.5 934,227.9 935,227.9 935,226.4 936,226.4 936,228.2 937,228.2 937,228.1 938,228.1 938,228.5 939,228.5 939,225.1 940,225.1 940,225.1 941,225.1 941,224.1 942,224.1 942,224.5 943,224.5 943,223.5 944,223.5 944,223.9 945,223.9 945,224.0 946,224.0 946,226.1 947,226.1 947,223.9 948,223.9 948,227.2 949,227.2 949,225.1 950,225.1 950,224.8 951,224.8 951,223.0 952,223.0 952,223.5 953,223.5 953,226.8 954,226.8 954,225.0 955,225.0 955,224.7 956,224.7 956,228.8 957,228.8 957,226.0 958,226.0 958,227.9 959,227.9 959,229.4 960,229.4 960,228.8 961,228.8 961,229.3 962,229.3 962,230.3 963,230.3 963,231.0 964,231.0 964,230.5 965,230.5 965,230.1 966,230.1 966,229.6 967,229.6 967,229.4 968,229.4 968,227.1 969,227.1 969,227.4 970,227.4 970,229.5 971,229.5 971,226.2 972,226.2 972,228.9 973,228.9 973,229.0 974,229.0 974,227.9 975,227.9 975,225.7 976,225.7 976,229.0 977,229.0 977,228.7 978,228.7 978,227.2 979,227.2 979,226.7 980,226.7 980,227.3 981,227.3 981,226.8 982,226.8 982,229.3 983,229.3 983,229.2 984,229.2 984,229.0 985,229.0 985,229.6 986,229.6 986,228.6 987,228.6 987,229.0 988,229.0 988,229.2 989,229.2 989,230.5 990,230.5 990,229.6 991,229.6 991,229.7 992,229.7 992,230.0 993,230.0 993,230.3 994,230.3 994,229.5 995,229.5 995,229.9 996,229.9 996,230.4 997,230.4 997,229.0 998,229.0 998,229.0 999,229.0 999,228.2 1000,228.2 1000,229.2 1001,229.2 1001,228.4 1002,228.4 1002,230.1 1003,230.1 1003,229.6 1004,229.6 1004,230.3 1005,230.3 1005,230.1 1006,230.1 1006,230.7 1007,230.7 1007,229.8 1008,229.8 1008,230.1 1009,230.1 1009,231.0 1010,231.0 1010,230.5 1011,230.5 1011,230.2 1012,230.2 1012,230.6 1013,230.6 1013,230.9 1014,230.9 1014,230.8 1015,230.8 1015,230.8 1016,230.8 1016,231.6 1017,231.6 1017,231.6 1018,231.6 1018,231.8 1019,231.8 1019,231.3 1020,231.3 1020,231.5 1021,231.5 1021,232.0 1022,232.0 1022,231.7 1023,231.7 1023,231.9 1024,231.9 1024,231.6 1025,231.6 1025,231.7 1026,231.7 1026,232.1 1027,232.1 1027,232.1 1028,232.1 1028,231.7 1029,231.7 1029,232.5 1030,232.5 1030,232.2 1031,232.2 1031,232.0 1032,232.0 1032,232.2 1033,232.2 1033,232.1 1034,232.1 1034,231.8 1035,231.8 1035,230.9 1036,230.9 1036,230.1 1037,230.1 1037,229.7 1038,229.7 1038,229.2 1039,229.2 1039,229.9 1040,229.9 1040,228.1 1041,228.1 1041,227.1 1042,227.1 1042,226.5 1043,226.5 1043,224.8 1044,224.8 1044,227.2 1045,227.2 1045,224.2 1046,224.2 1046,227.1 1047,227.1 1047,228.4 1048,228.4 1048,225.8 1049,225.8 1049,228.5 1050,228.5 1050,227.4 1051,227.4 1051,229.2 1052,229.2 1052,229.3 1053,229.3 1053,230.9 1054,230.9 1054,230.8 1055,230.8 1055,230.8 1056,230.8 1056,231.1 1057,231.1 1057,230.7 1058,230.7 1058,231.0 1059,231.0 1059,230.7 1060,230.7 1060,231.4 1061,231.4 1061,230.9 1062,230.9 1062,231.6 1063,231.6 1063,231.0 1064,231.0 1064,230.7 1065,230.7 1065,231.0 1066,231.0 1066,231.5 1067,231.5 1067,230.9 1068,230.9 1068,230.3 1069,230.3 1069,231.9 1070,231.9 1070,231.2 1071,231.2 1071,232.1 1072,232.1 1072,231.7 1073,231.7 1073,230.6 1074,230.6 1074,230.3 1075,230.3 1075,229.2 1076,229.2 1076,229.9 1077,229.9 1077,227.2 1078,227.2 1078,226.0 1079,226.0 1079,226.2 1080,226.2 1080,226.1 1081,226.1 1081,223.9 1082,223.9 1082,227.1 1083,227.1 1083,227.0 1084,227.0 1084,227.4 1085,227.4 1085,228.9 1086,228.9 1086,227.2 1087,227.2 1087,227.6 1088,227.6 1088,228.3 1089,228.3 1089,230.6 1090,230.6 1090,230.1 1091,230.1 1091,231.0 1092,231.0 1092,229.9 1093,229.9 1093,231.2 1094,231.2 1094,231.4 1095,231.4 1095,232.1 1096,232.1 1096,231.7 1097,231.7 1097,231.8 1098,231.8 1098,231.8 1099,231.8 1099,232.4 1100,232.4 1100,232.0 1101,232.0 1101,232.1 1102,232.1 1102,232.2 1103,232.2 1103,232.4 1104,232.4 1104,232.3 1105,232.3 1105,232.3 1106,232.3 1106,232.1 1107,232.1 1107,232.4 1108,232.4 1108,232.5 1109,232.5 1109,232.2 1110,232.2 1110,231.9 1111,231.9 1111,231.9 1112,231.9 1112,232.5 1113,232.5 1113,232.4 1114,232.4 1114,232.1 1115,232.1 1115,232.1 1116,232.1 1116,232.2 1117,232.2 1117,232.1 1118,232.1 1118,232.4 1119,232.4 1119,232.1 1120,232.1 1120,232.2 1121,232.2 1121,232.5 1122,232.5 1122,232.1 1123,232.1 1123,232.3 1124,232.3 1124,232.1 1125,232.1 1125,232.4 1126,232.4 1126,231.9 1127,231.9 1127,232.1 1128,232.1 1128,232.5 1129,232.5 1129,232.4 1130,232.4 1130,232.2 1131,232.2 1131,232.5 1132,232.5 1132,232.1 1133,232.1 1133,232.2 1134,232.2 1134,231.9 1135,231.9 1135,232.0 1136,232.0 1136,232.0 1137,232.0 1137,232.5 1138,232.5 1138,232.2 1139,232.2 1139,232.1 1140,232.1 1140,232.1 1141,232.1 1141,232.4 1142,232.4 1142,231.9 1143,231.9 1143,232.4 1144,232.4 1144,232.5 1145,232.5 1145,232.5 1146,232.5 1146,232.1 1147,232.1 1147,232.0 1148,232.0 1148,232.4 1149,232.4 1149,232.5 1150,232.5 1150,232.4 1151,232.4 1151,232.5 1152,232.5 1152,232.1 1153,232.1 1153,232.1 1154,232.1 1154,232.1 1155,232.1 1155,232.4 1156,232.4 1156,232.4 1157,232.4 1157,232.0 1158,232.0 1158,232.5 1159,232.5 1159,232.3 1160,232.3 1160,232.2 1161,232.2 1161,232.4 1162,232.4 1162,232.3 1163,232.3 1163,231.9 1164,231.9 1164,232.1 1165,232.1 1165,232.1 1166,232.1 1166,232.3 1167,232.3 1167,232.5 1168,232.5 1168,232.3 1169,232.3 1169,232.3 1170,232.3 1170,232.0 1171,232.0 1171,232.1 1172,232.1 1172,231.9 1173,231.9 1173,232.0 1174,232.0 1174,232.5 1175,232.5 1175,232.4 1176,232.4 1176,232.3 1177,232.3 1177,232.4 1178,232.4 1178,232.2 1179,232.2 1179,232.3 1180,232.3 1180,232.2 1181,232.2 1181,232.1 1182,232.1 1182,232.5 1183,232.5 1183,232.1 1184,232.1 1184,231.9 1185,231.9 1185,232.2 1186,232.2 1186,232.2 1187,232.2 1187,232.4 1188,232.4 1188,232.1 1189,232.1 1189,232.1 1190,232.1 1190,231.0 1191,231.0 1191,228.5 1192,228.5 1192,227.4 1193,227.4 1193,223.8 1194,223.8 1194,217.2 1195,217.2 1195,213.5 1196,213.5 1196,218.4 1197,218.4 1197,214.0 1198,214.0 1198,214.4 1199,214.4 1199,218.9 1200,218.9 1200,222.1 1201,222.1 1201,220.0 1202,220.0 1202,218.6 1203,218.6 1203,221.1 1204,221.1 1204,226.8 1205,226.8 1205,225.2 1206,225.2 1206,226.8 1207,226.8 1207,227.3 1208,227.3 1208,229.9 1209,229.9 1209,229.1 1210,229.1 1210,229.9 1211,229.9 1211,230.6 1212,230.6 1212,229.4 1213,229.4 1213,229.8 1214,229.8 1214,230.9 1215,230.9 1215,231.2 1216,231.2 1216,230.7 1217,230.7 1217,231.5 1218,231.5 1218,231.3 1219,231.3 1219,231.1 1220,231.1 1220,231.6 1221,231.6 1221,232.0 1222,232.0 1222,231.5 1223,231.5 1223,231.4 1224,231.4 1224,231.6 1225,231.6 1225,232.2 1226,232.2 1226,231.3 1227,231.3 1227,231.4 1228,231.4 1228,231.9 1229,231.9 1229,231.1 1230,231.1 1230,230.9 1231,230.9 1231,230.6 1232,230.6 1232,231.4 1233,231.4 1233,231.2 1234,231.2 1234,229.8 1235,229.8 1235,230.4 1236,230.4 1236,230.1 1237,230.1 1237,229.3 1238,229.3 1238,228.8 1239,228.8 1239,230.1 1240,230.1 1240,229.5 1241,229.5 1241,228.3 1242,228.3 1242,229.7 1243,229.7 1243,228.9 1244,228.9 1244,230.6 1245,230.6 1245,228.1 1246,228.1 1246,229.1 1247,229.1 1247,229.8 1248,229.8 1248,228.3 1249,228.3 1249,230.0 1250,230.0 1250,228.8 1251,228.8 1251,227.1 1252,227.1 1252,227.0 1253,227.0 1253,227.0 1254,227.0 1254,229.1 1255,229.1 1255,228.0 1256,228.0 1256,227.0 1257,227.0 1257,229.4 1258,229.4 1258,227.8 1259,227.8 1259,229.9 1260,229.9 1260,229.5 1261,229.5 1261,228.9 1262,228.9 1262,230.6 1263,230.6 1263,231.3 1264,231.3 1264,231.5 1265,231.5 1265,230.9 1266,230.9 1266,231.5 1267,231.5 1267,231.4 1268,231.4 1268,231.4 1269,231.4 1269,230.7 1270,230.7 1270,229.6 1271,229.6 1271,228.7 1272,228.7 1272,230.2 1273,230.2 1273,228.3 1274,228.3 1274,227.9 1275,227.9 1275,226.9 1276,226.9 1276,226.3 1277,226.3 1277,228.7 1278,228.7 1278,226.5 1279,226.5 1279,224.7 1280,224.7 1280,226.7 1281,226.7 1281,223.9 1282,223.9 1282,226.2 1283,226.2 1283,223.2 1284,223.2 1284,225.6 1285,225.6 1285,226.7 1286,226.7 1286,228.6 1287,228.6 1287,229.3 1288,229.3 1288,229.4 1289,229.4 1289,229.1 1290,229.1 1290,229.8 1291,229.8 1291,231.2 1292,231.2 1292,231.5 1293,231.5 1293,230.0 1294,230.0 1294,230.8 1295,230.8 1295,230.5 1296,230.5 1296,230.1 1297,230.1 1297,230.6 1298,230.6 1298,230.5 1299,230.5 1299,230.3 1300,230.3 1300,231.1 1301,231.1 1301,230.1 1302,230.1 1302,229.0 1303,229.0 1303,227.9 1304,227.9 1304,227.4 1305,227.4 1305,228.6 1306,228.6 1306,228.3 1307,228.3 1307,227.2 1308,227.2 1308,227.7 1309,227.7 1309,226.2 1310,226.2 1310,225.1 1311,225.1 1311,225.6 1312,225.6 1312,227.0 1313,227.0 1313,229.0 1314,229.0 1314,225.8 1315,225.8 1315,227.9 1316,227.9 1316,228.7 1317,228.7 1317,229.4 1318,229.4 1318,228.8 1319,228.8 1319,229.6 1320,229.6 1320,228.7 1321,228.7 1321,230.5 1322,230.5 1322,230.4 1323,230.4 1323,230.1 1324,230.1 1324,230.7 1325,230.7 1325,230.3 1326,230.3 1326,229.7 1327,229.7 1327,228.5 1328,228.5 1328,227.9 1329,227.9 1329,229.1 1330,229.1 1330,228.3 1331,228.3 1331,228.5 1332,228.5 1332,229.8 1333,229.8 1333,228.1 1334,228.1 1334,229.3 1335,229.3 1335,227.2 1336,227.2 1336,227.7 1337,227.7 1337,230.5 1338,230.5 1338,227.2 1339,227.2 1339,227.2 1340,227.2 1340,228.9 1341,228.9 1341,228.7 1342,228.7 1342,227.9 1343,227.9 1343,238.3 1342,238.3 1342,236.0 1341,236.0 1341,238.8 1340,238.8 1340,236.8 1339,236.8 1339,236.6 1338,236.6 1338,238.5 1337,238.5 1337,237.7 1336,237.7 1336,237.6 1335,237.6 1335,236.7 1334,236.7 1334,238.2 1333,238.2 1333,236.3 1332,236.3 1332,238.7 1331,238.7 1331,237.8 1330,237.8 1330,237.7 1329,237.7 1329,238.1 1328,238.1 1328,238.0 1327,238.0 1327,237.6 1326,237.6 1326,237.6 1325,237.6 1325,235.7 1324,235.7 1324,236.0 1323,236.0 1323,235.8 1322,235.8 1322,236.3 1321,236.3 1321,236.1 1320,236.1 1320,236.8 1319,236.8 1319,237.5 1318,237.5 1318,236.7 1317,236.7 1317,237.3 1316,237.3 1316,237.5 1315,237.5 1315,238.4 1314,238.4 1314,236.9 1313,236.9 1313,237.7 1312,237.7 1312,236.9 1311,236.9 1311,238.4 1310,238.4 1310,237.6 1309,237.6 1309,236.3 1308,236.3 1308,237.0 1307,237.0 1307,237.3 1306,237.3 1306,237.6 1305,237.6 1305,236.1 1304,236.1 1304,236.3 1303,236.3 1303,236.9 1302,236.9 1302,235.3 1301,235.3 1301,236.7 1300,236.7 1300,236.8 1299,236.8 1299,236.2 1298,236.2 1298,236.6 1297,236.6 1297,235.5 1296,235.5 1296,236.4 1295,236.4 1295,236.9 1294,236.9 1294,237.0 1293,237.0 1293,237.1 1292,237.1 1292,236.4 1291,236.4 1291,235.8 1290,235.8 1290,236.5 1289,236.5 1289,236.8 1288,236.8 1288,236.9 1287,236.9 1287,238.4 1286,238.4 1286,239.3 1285,239.3 1285,238.5 1284,238.5 1284,237.7 1283,237.7 1283,239.3 1282,239.3 1282,238.8 1281,238.8 1281,237.5 1280,237.5 1280,237.8 1279,237.8 1279,239.1 1278,239.1 1278,237.3 1277,237.3 1277,236.1 1276,236.1 1276,237.9 1275,237.9 1275,236.8 1274,236.8 1274,236.7 1273,236.7 1273,236.7 1272,236.7 1272,237.2 1271,237.2 1271,235.4 1270,235.4 1270,235.9 1269,235.9 1269,235.0 1268,235.0 1268,235.3 1267,235.3 1267,235.6 1266,235.6 1266,235.5 1265,235.5 1265,236.2 1264,236.2 1264,236.5 1263,236.5 1263,235.8 1262,235.8 1262,237.3 1261,237.3 1261,237.7 1260,237.7 1260,237.3 1259,237.3 1259,237.6 1258,237.6 1258,237.6 1257,237.6 1257,236.7 1256,236.7 1256,238.4 1255,238.4 1255,239.1 1254,239.1 1254,237.5 1253,237.5 1253,236.7 1252,236.7 1252,238.5 1251,238.5 1251,238.9 1250,238.9 1250,239.1 1249,239.1 1249,237.8 1248,237.8 1248,236.6 1247,236.6 1247,238.5 1246,238.5 1246,238.0 1245,238.0 1245,239.1 1244,239.1 1244,237.0 1243,237.0 1243,236.8 1242,236.8 1242,237.1 1241,237.1 1241,237.6 1240,237.6 1240,236.7 1239,236.7 1239,236.7 1238,236.7 1238,238.2 1237,238.2 1237,236.0 1236,236.0 1236,237.2 1235,237.2 1235,236.1 1234,236.1 1234,236.0 1233,236.0 1233,236.4 1232,236.4 1232,236.3 1231,236.3 1231,236.5 1230,236.5 1230,235.9 1229,235.9 1229,235.5 1228,235.5 1228,235.0 1227,235.0 1227,234.9 1226,234.9 1226,234.6 1225,234.6 1225,235.2 1224,235.2 1224,235.4 1223,235.4 1223,235.8 1222,235.8 1222,235.7 1221,235.7 1221,235.9 1220,235.9 1220,235.3 1219,235.3 1219,236.1 1218,236.1 1218,235.5 1217,235.5 1217,235.8 1216,235.8 1216,235.6 1215,235.6 1215,235.7 1214,235.7 1214,238.0 1213,238.0 1213,238.8 1212,238.8 1212,239.2 1211,239.2 1211,237.2 1210,237.2 1210,239.9 1209,239.9 1209,241.0 1208,241.0 1208,241.6 1207,241.6 1207,244.1 1206,244.1 1206,239.9 1205,239.9 1205,245.4 1204,245.4 1204,246.6 1203,246.6 1203,248.5 1202,248.5 1202,250.0 1201,250.0 1201,249.2 1200,249.2 1200,245.0 1199,245.0 1199,247.9 1198,247.9 1198,250.8 1197,250.8 1197,252.5 1196,252.5 1196,246.8 1195,246.8 1195,246.2 1194,246.2 1194,240.7 1193,240.7 1193,241.6 1192,241.6 1192,239.4 1191,239.4 1191,236.5 1190,236.5 1190,235.0 1189,235.0 1189,234.5 1188,234.5 1188,234.9 1187,234.9 1187,234.9 1186,234.9 1186,234.7 1185,234.7 1185,234.7 1184,234.7 1184,234.7 1183,234.7 1183,234.7 1182,234.7 1182,235.0 1181,235.0 1181,234.6 1180,234.6 1180,234.9 1179,234.9 1179,234.5 1178,234.5 1178,234.8 1177,234.8 1177,234.8 1176,234.8 1176,234.7 1175,234.7 1175,235.1 1174,235.1 1174,235.1 1173,235.1 1173,234.5 1172,234.5 1172,234.9 1171,234.9 1171,235.1 1170,235.1 1170,234.7 1169,234.7 1169,234.6 1168,234.6 1168,234.5 1167,234.5 1167,234.8 1166,234.8 1166,234.9 1165,234.9 1165,234.5 1164,234.5 1164,235.0 1163,235.0 1163,235.0 1162,235.0 1162,234.7 1161,234.7 1161,234.9 1160,234.9 1160,234.6 1159,234.6 1159,234.7 1158,234.7 1158,234.7 1157,234.7 1157,234.9 1156,234.9 1156,234.6 1155,234.6 1155,234.8 1154,234.8 1154,235.1 1153,235.1 1153,234.5 1152,234.5 1152,234.5 1151,234.5 1151,234.5 1150,234.5 1150,234.8 1149,234.8 1149,234.5 1148,234.5 1148,234.6 1147,234.6 1147,234.8 1146,234.8 1146,234.5 1145,234.5 1145,234.9 1144,234.9 1144,234.8 1143,234.8 1143,235.0 1142,235.0 1142,234.7 1141,234.7 1141,234.5 1140,234.5 1140,235.0 1139,235.0 1139,234.7 1138,234.7 1138,234.8 1137,234.8 1137,234.5 1136,234.5 1136,234.8 1135,234.8 1135,235.0 1134,235.0 1134,234.6 1133,234.6 1133,234.5 1132,234.5 1132,234.9 1131,234.9 1131,234.5 1130,234.5 1130,234.7 1129,234.7 1129,234.6 1128,234.6 1128,234.8 1127,234.8 1127,234.6 1126,234.6 1126,234.8 1125,234.8 1125,234.9 1124,234.9 1124,234.5 1123,234.5 1123,234.8 1122,234.8 1122,234.7 1121,234.7 1121,234.9 1120,234.9 1120,234.7 1119,234.7 1119,234.8 1118,234.8 1118,234.8 1117,234.8 1117,234.8 1116,234.8 1116,234.5 1115,234.5 1115,234.5 1114,234.5 1114,235.0 1113,235.0 1113,234.5 1112,234.5 1112,234.6 1111,234.6 1111,234.6 1110,234.6 1110,234.5 1109,234.5 1109,234.8 1108,234.8 1108,234.9 1107,234.9 1107,234.9 1106,234.9 1106,234.9 1105,234.9 1105,234.5 1104,234.5 1104,234.8 1103,234.8 1103,234.5 1102,234.5 1102,234.5 1101,234.5 1101,234.5 1100,234.5 1100,235.2 1099,235.2 1099,235.3 1098,235.3 1098,234.9 1097,234.9 1097,235.1 1096,235.1 1096,235.2 1095,235.2 1095,235.6 1094,235.6 1094,235.7 1093,235.7 1093,236.3 1092,236.3 1092,236.1 1091,236.1 1091,235.4 1090,235.4 1090,237.5 1089,237.5 1089,236.6 1088,236.6 1088,237.0 1087,237.0 1087,237.6 1086,237.6 1086,237.2 1085,237.2 1085,239.9 1084,239.9 1084,241.5 1083,241.5 1083,240.3 1082,240.3 1082,243.6 1081,243.6 1081,242.3 1080,242.3 1080,239.7 1079,239.7 1079,238.6 1078,238.6 1078,239.8 1077,239.8 1077,237.8 1076,237.8 1076,237.3 1075,237.3 1075,236.0 1074,236.0 1074,235.8 1073,235.8 1073,235.1 1072,235.1 1072,235.5 1071,235.5 1071,235.8 1070,235.8 1070,235.7 1069,235.7 1069,236.4 1068,236.4 1068,236.2 1067,236.2 1067,236.0 1066,236.0 1066,236.0 1065,236.0 1065,235.1 1064,235.1 1064,235.5 1063,235.5 1063,235.5 1062,235.5 1062,236.5 1061,236.5 1061,236.4 1060,236.4 1060,236.0 1059,236.0 1059,236.7 1058,236.7 1058,235.3 1057,235.3 1057,235.9 1056,235.9 1056,236.1 1055,236.1 1055,236.2 1054,236.2 1054,236.9 1053,236.9 1053,237.2 1052,237.2 1052,237.6 1051,237.6 1051,237.6 1050,237.6 1050,238.7 1049,238.7 1049,239.1 1048,239.1 1048,238.9 1047,238.9 1047,240.6 1046,240.6 1046,238.8 1045,238.8 1045,239.5 1044,239.5 1044,238.5 1043,238.5 1043,237.6 1042,237.6 1042,237.7 1041,237.7 1041,236.4 1040,236.4 1040,236.9 1039,236.9 1039,236.8 1038,236.8 1038,236.4 1037,236.4 1037,236.5 1036,236.5 1036,235.4 1035,235.4 1035,235.5 1034,235.5 1034,234.8 1033,234.8 1033,234.6 1032,234.6 1032,234.6 1031,234.6 1031,235.1 1030,235.1 1030,234.8 1029,234.8 1029,234.5 1028,234.5 1028,235.2 1027,235.2 1027,234.8 1026,234.8 1026,234.8 1025,234.8 1025,234.9 1024,234.9 1024,235.0 1023,235.0 1023,235.3 1022,235.3 1022,235.4 1021,235.4 1021,235.5 1020,235.5 1020,235.2 1019,235.2 1019,234.8 1018,234.8 1018,235.1 1017,235.1 1017,236.0 1016,236.0 1016,235.3 1015,235.3 1015,236.2 1014,236.2 1014,235.8 1013,235.8 1013,236.3 1012,236.3 1012,235.7 1011,235.7 1011,236.1 1010,236.1 1010,235.7 1009,235.7 1009,235.9 1008,235.9 1008,235.9 1007,235.9 1007,236.2 1006,236.2 1006,235.9 1005,235.9 1005,235.8 1004,235.8 1004,236.4 1003,236.4 1003,236.4 1002,236.4 1002,235.0 1001,235.0 1001,235.4 1000,235.4 1000,236.0 999,236.0 999,235.9 998,235.9 998,236.7 997,236.7 997,236.7 996,236.7 996,237.1 995,237.1 995,236.6 994,236.6 994,235.8 993,235.8 993,237.1 992,237.1 992,236.3 991,236.3 991,237.4 990,237.4 990,237.6 989,237.6 989,238.5 988,238.5 988,238.6 987,238.6 987,236.9 986,236.9 986,236.6 985,236.6 985,238.8 984,238.8 984,238.7 983,238.7 983,239.0 982,239.0 982,236.7 981,236.7 981,237.5 980,237.5 980,238.0 979,238.0 979,239.3 978,239.3 978,238.7 977,238.7 977,240.2 976,240.2 976,239.5 975,239.5 975,238.4 974,238.4 974,239.5 973,239.5 973,238.0 972,238.0 972,240.1 971,240.1 971,239.3 970,239.3 970,238.1 969,238.1 969,238.6 968,238.6 968,238.1 967,238.1 967,238.6 966,238.6 966,237.8 965,237.8 965,236.6 964,236.6 964,235.6 963,235.6 963,236.7 962,236.7 962,236.9 961,236.9 961,237.0 960,237.0 960,237.9 959,237.9 959,237.1 958,237.1 958,237.0 957,237.0 957,238.1 956,238.1 956,236.9 955,236.9 955,239.5 954,239.5 954,239.9 953,239.9 953,239.2 952,239.2 952,240.7 951,240.7 951,240.2 950,240.2 950,240.3 949,240.3 949,240.6 948,240.6 948,240.1 947,240.1 947,241.3 946,241.3 946,239.2 945,239.2 945,241.2 944,241.2 944,240.7 943,240.7 943,240.7 942,240.7 942,242.7 941,242.7 941,239.1 940,239.1 940,240.0 939,240.0 939,240.0 938,240.0 938,241.6 937,241.6 937,240.5 936,240.5 936,238.3 935,238.3 935,237.1 934,237.1 934,236.4 933,236.4 933,237.1 932,237.1 932,235.9 931,235.9 931,236.7 930,236.7 930,235.1 929,235.1 929,235.2 928,235.2 928,235.1 927,235.1 927,235.5 926,235.5 926,235.7 925,235.7 925,236.9 924,236.9 924,236.2 923,236.2 923,236.0 922,236.0 922,236.9 921,236.9 921,237.9 920,237.9 920,238.0 919,238.0 919,238.3 918,238.3 918,238.1 917,238.1 917,237.5 916,237.5 916,237.6 915,237.6 915,238.2 914,238.2 914,237.8 913,237.8 913,239.7 912,239.7 912,238.8 911,238.8 911,238.2 910,238.2 910,238.1 909,238.1 909,237.1 908,237.1 908,237.2 907,237.2 907,237.2 906,237.2 906,236.0 905,236.0 905,236.3 904,236.3 904,236.6 903,236.6 903,236.5 902,236.5 902,238.5 901,238.5 901,239.0 900,239.0 900,238.7 899,238.7 899,240.8 898,240.8 898,239.8 897,239.8 897,241.0 896,241.0 896,242.8 895,242.8 895,241.6 894,241.6 894,244.8 893,244.8 893,241.1 892,241.1 892,243.3 891,243.3 891,245.6 890,245.6 890,245.6 889,245.6 889,245.2 888,245.2 888,246.5 887,246.5 887,244.7 886,244.7 886,244.8 885,244.8 885,248.8 884,248.8 884,250.4 883,250.4 883,244.3 882,244.3 882,245.4 881,245.4 881,245.2 880,245.2 880,248.5 879,248.5 879,245.2 878,245.2 878,246.0 877,246.0 877,243.3 876,243.3 876,241.7 875,241.7 875,246.1 874,246.1 874,241.5 873,241.5 873,243.1 872,243.1 872,242.1 871,242.1 871,242.9 870,242.9 870,243.9 869,243.9 869,239.1 868,239.1 868,240.3 867,240.3 867,241.7 866,241.7 866,240.2 865,240.2 865,238.1 864,238.1 864,237.9 863,237.9 863,237.7 862,237.7 862,237.0 861,237.0 861,238.3 860,238.3 860,237.9 859,237.9 859,235.9 858,235.9 858,237.0 857,237.0 857,235.7 856,235.7 856,235.7 855,235.7 855,235.7 854,235.7 854,235.7 853,235.7 853,238.7 852,238.7 852,238.8 851,238.8 851,237.7 850,237.7 850,239.9 849,239.9 849,239.6 848,239.6 848,241.3 847,241.3 847,237.9 846,237.9 846,240.5 845,240.5 845,239.6 844,239.6 844,241.4 843,241.4 843,237.7 842,237.7 842,238.1 841,238.1 841,240.6 840,240.6 840,241.9 839,241.9 839,238.4 838,238.4 838,239.7 837,239.7 837,238.3 836,238.3 836,241.4 835,241.4 835,240.3 834,240.3 834,240.0 833,240.0 833,238.5 832,238.5 832,237.5 831,237.5 831,241.8 830,241.8 830,241.3 829,241.3 829,239.7 828,239.7 828,237.5 827,237.5 827,238.5 826,238.5 826,240.8 825,240.8 825,240.6 824,240.6 824,239.8 823,239.8 823,237.4 822,237.4 822,240.7 821,240.7 821,239.2 820,239.2 820,237.7 819,237.7 819,240.4 818,240.4 818,239.7 817,239.7 817,238.4 816,238.4 816,238.6 815,238.6 815,238.3 814,238.3 814,239.1 813,239.1 813,237.2 812,237.2 812,237.2 811,237.2 811,236.7 810,236.7 810,236.1 809,236.1 809,238.1 808,238.1 808,237.3 807,237.3 807,237.8 806,237.8 806,237.6 805,237.6 805,237.9 804,237.9 804,237.5 803,237.5 803,238.2 802,238.2 802,239.4 801,239.4 801,238.6 800,238.6 800,241.0 799,241.0 799,241.5 798,241.5 798,239.2 797,239.2 797,241.5 796,241.5 796,240.1 795,240.1 795,240.9 794,240.9 794,240.4 793,240.4 793,239.2 792,239.2 792,238.9 791,238.9 791,236.7 790,236.7 790,236.4 789,236.4 789,236.3 788,236.3 788,235.0 787,235.0 787,235.1 786,235.1 786,236.6 785,236.6 785,237.2 784,237.2 784,237.2 783,237.2 783,238.7 782,238.7 782,238.6 781,238.6 781,239.1 780,239.1 780,241.0 779,241.0 779,238.2 778,238.2 778,238.1 777,238.1 777,238.5 776,238.5 776,241.4 775,241.4 775,240.5 774,240.5 774,240.1 773,240.1 773,238.9 772,238.9 772,240.6 771,240.6 771,240.5 770,240.5 770,243.7 769,243.7 769,244.1 768,244.1 768,244.6 767,244.6 767,244.0 766,244.0 766,249.2 765,249.2 765,243.7 764,243.7 764,245.5 763,245.5 763,248.1 762,248.1 762,249.6 761,249.6 761,250.5 760,250.5 760,247.1 759,247.1 759,241.9 758,241.9 758,239.1 757,239.1 757,237.8 756,237.8 756,236.4 755,236.4 755,235.6 754,235.6 754,235.7 753,235.7 753,235.7 752,235.7 752,235.1 751,235.1 751,235.8 750,235.8 750,236.8 749,236.8 749,237.5 748,237.5 748,235.2 747,235.2 747,236.2 746,236.2 746,235.2 745,235.2 745,235.3 744,235.3 744,235.8 743,235.8 743,235.6 742,235.6 742,236.5 741,236.5 741,236.1 740,236.1 740,237.9 739,237.9 739,238.2 738,238.2 738,239.9 737,239.9 737,240.0 736,240.0 736,243.4 735,243.4 735,243.1 734,243.1 734,240.7 733,240.7 733,239.9 732,239.9 732,237.0 731,237.0 731,234.8 730,234.8 730,235.0 729,235.0 729,234.6 728,234.6 728,234.9 727,234.9 727,234.8 726,234.8 726,234.6 725,234.6 725,234.7 724,234.7 724,234.6 723,234.6 723,235.0 722,235.0 722,234.9 721,234.9 721,234.5 720,234.5 720,234.7 719,234.7 719,234.7 718,234.7 718,234.6 717,234.6 717,234.5 716,234.5 716,234.7 715,234.7 715,235.0 714,235.0 714,234.5 713,234.5 713,234.5 712,234.5 712,234.8 711,234.8 711,234.6 710,234.6 710,234.9 709,234.9 709,235.1 708,235.1 708,234.6 707,234.6 707,234.6 706,234.6 706,234.7 705,234.7 705,235.0 704,235.0 704,234.9 703,234.9 703,234.9 702,234.9 702,234.9 701,234.9 701,234.5 700,234.5 700,234.9 699,234.9 699,235.0 698,235.0 698,234.6 697,234.6 697,234.6 696,234.6 696,234.9 695,234.9 695,235.0 694,235.0 694,234.8 693,234.8 693,234.8 692,234.8 692,234.7 691,234.7 691,234.6 690,234.6 690,235.0 689,235.0 689,235.1 688,235.1 688,236.1 687,236.1 687,235.6 686,235.6 686,235.9 685,235.9 685,235.6 684,235.6 684,237.2 683,237.2 683,237.0 682,237.0 682,237.6 681,237.6 681,239.4 680,239.4 680,239.3 679,239.3 679,240.2 678,240.2 678,241.2 677,241.2 677,241.2 676,241.2 676,240.4 675,240.4 675,242.7 674,242.7 674,241.6 673,241.6 673,243.0 672,243.0 672,239.9 671,239.9 671,241.0 670,241.0 670,239.7 669,239.7 669,238.9 668,238.9 668,236.8 667,236.8 667,238.2 666,238.2 666,237.2 665,237.2 665,237.9 664,237.9 664,237.3 663,237.3 663,238.5 662,238.5 662,239.7 661,239.7 661,238.0 660,238.0 660,240.2 659,240.2 659,237.8 658,237.8 658,241.5 657,241.5 657,240.2 656,240.2 656,237.4 655,237.4 655,236.5 654,236.5 654,235.6 653,235.6 653,235.3 652,235.3 652,235.5 651,235.5 651,235.8 650,235.8 650,236.6 649,236.6 649,237.1 648,237.1 648,237.6 647,237.6 647,236.2 646,236.2 646,237.2 645,237.2 645,237.7 644,237.7 644,236.8 643,236.8 643,236.0 642,236.0 642,236.4 641,236.4 641,236.4 640,236.4 640,236.3 639,236.3 639,236.1 638,236.1 638,235.4 637,235.4 637,235.6 636,235.6 636,235.1 635,235.1 635,234.6 634,234.6 634,235.2 633,235.2 633,234.6 632,234.6 632,235.1 631,235.1 631,235.4 630,235.4 630,236.6 629,236.6 629,237.0 628,237.0 628,236.1 627,236.1 627,238.4 626,238.4 626,237.5 625,237.5 625,237.2 624,237.2 624,237.8 623,237.8 623,238.6 622,238.6 622,240.0 621,240.0 621,239.6 620,239.6 620,236.9 619,236.9 619,239.1 618,239.1 618,236.9 617,236.9 617,236.3 616,236.3 616,236.8 615,236.8 615,235.4 614,235.4 614,235.0 613,235.0 613,235.7 612,235.7 612,236.2 611,236.2 611,235.6 610,235.6 610,236.7 609,236.7 609,236.7 608,236.7 608,236.7 607,236.7 607,237.9 606,237.9 606,237.1 605,237.1 605,237.3 604,237.3 604,238.0 603,238.0 603,237.8 602,237.8 602,238.3 601,238.3 601,238.1 600,238.1 600,237.8 599,237.8 599,236.6 598,236.6 598,238.4 597,238.4 597,239.0 596,239.0 596,239.0 595,239.0 595,238.7 594,238.7 594,238.3 593,238.3 593,238.1 592,238.1 592,236.7 591,236.7 591,237.1 590,237.1 590,235.7 589,235.7 589,235.5 588,235.5 588,234.9 587,234.9 587,235.3 586,235.3 586,237.3 585,237.3 585,238.4 584,238.4 584,239.7 583,239.7 583,239.3 582,239.3 582,239.8 581,239.8 581,238.9 580,238.9 580,239.4 579,239.4 579,238.6 578,238.6 578,240.8 577,240.8 577,238.7 576,238.7 576,239.2 575,239.2 575,240.3 574,240.3 574,237.8 573,237.8 573,239.0 572,239.0 572,236.7 571,236.7 571,237.6 570,237.6 570,237.0 569,237.0 569,236.7 568,236.7 568,235.9 567,235.9 567,235.6 566,235.6 566,235.9 565,235.9 565,236.3 564,236.3 564,236.0 563,236.0 563,235.7 562,235.7 562,236.9 561,236.9 561,237.8 560,237.8 560,237.3 559,237.3 559,238.2 558,238.2 558,238.5 557,238.5 557,239.8 556,239.8 556,242.5 555,242.5 555,241.2 554,241.2 554,247.0 553,247.0 553,246.8 552,246.8 552,251.0 551,251.0 551,245.9 550,245.9 550,251.8 549,251.8 549,253.9 548,253.9 548,247.6 547,247.6 547,252.2 546,252.2 546,246.0 545,246.0 545,251.3 544,251.3 544,249.4 543,249.4 543,247.6 542,247.6 542,248.6 541,248.6 541,241.2 540,241.2 540,242.5 539,242.5 539,243.6 538,243.6 538,240.1 537,240.1 537,237.8 536,237.8 536,237.7 535,237.7 535,236.2 534,236.2 534,234.8 533,234.8 533,235.8 532,235.8 532,237.7 531,237.7 531,239.2 530,239.2 530,239.8 529,239.8 529,240.1 528,240.1 528,238.5 527,238.5 527,240.0 526,240.0 526,241.3 525,241.3 525,242.9 524,242.9 524,241.0 523,241.0 523,241.1 522,241.1 522,245.4 521,245.4 521,241.2 520,241.2 520,248.1 519,248.1 519,244.7 518,244.7 518,243.1 517,243.1 517,245.9 516,245.9 516,245.2 515,245.2 515,248.2 514,248.2 514,249.2 513,249.2 513,245.1 512,245.1 512,243.9 511,243.9 511,236.5 510,236.5 510,234.9 509,234.9 509,234.7 508,234.7 508,235.2 507,235.2 507,234.9 506,234.9 506,235.3 505,235.3 505,235.2 504,235.2 504,235.5 503,235.5 503,235.2 502,235.2 502,235.2 501,235.2 501,235.4 500,235.4 500,236.0 499,236.0 499,235.9 498,235.9 498,235.9 497,235.9 497,236.3 496,236.3 496,237.2 495,237.2 495,236.3 494,236.3 494,236.8 493,236.8 493,237.5 492,237.5 492,238.1 491,238.1 491,238.4 490,238.4 490,239.5 489,239.5 489,243.7 488,243.7 488,247.6 487,247.6 487,251.8 486,251.8 486,252.6 485,252.6 485,250.6 484,250.6 484,244.6 483,244.6 483,245.9 482,245.9 482,246.0 481,246.0 481,246.3 480,246.3 480,247.5 479,247.5 479,246.3 478,246.3 478,245.0 477,245.0 477,246.2 476,246.2 476,240.5 475,240.5 475,242.1 474,242.1 474,245.2 473,245.2 473,242.0 472,242.0 472,243.6 471,243.6 471,245.7 470,245.7 470,239.7 469,239.7 469,236.2 468,236.2 468,234.6 467,234.6 467,234.8 466,234.8 466,234.8 465,234.8 465,235.0 464,235.0 464,235.1 463,235.1 463,234.5 462,234.5 462,235.1 461,235.1 461,234.5 460,234.5 460,234.9 459,234.9 459,234.9 458,234.9 458,234.6 457,234.6 457,234.5 456,234.5 456,234.8 455,234.8 455,234.5 454,234.5 454,235.0 453,235.0 453,235.0 452,235.0 452,234.6 451,234.6 451,234.7 450,234.7 450,234.6 449,234.6 449,235.0 448,235.0 448,234.9 447,234.9 447,234.5 446,234.5 446,234.6 445,234.6 445,235.1 444,235.1 444,235.0 443,235.0 443,234.5 442,234.5 442,234.8 441,234.8 441,235.0 440,235.0 440,234.7 439,234.7 439,235.1 438,235.1 438,234.9 437,234.9 437,234.5 436,234.5 436,234.8 435,234.8 435,234.9 434,234.9 434,234.9 433,234.9 433,235.1 432,235.1 432,234.7 431,234.7 431,234.8 430,234.8 430,234.5 429,234.5 429,234.9 428,234.9 428,234.5 427,234.5 427,234.8 426,234.8 426,234.5 425,234.5 425,234.7 424,234.7 424,234.5 423,234.5 423,235.0 422,235.0 422,234.9 421,234.9 421,234.8 420,234.8 420,235.0 419,235.0 419,234.6 418,234.6 418,234.7 417,234.7 417,234.9 416,234.9 416,234.5 415,234.5 415,235.0 414,235.0 414,234.6 413,234.6 413,234.8 412,234.8 412,235.1 411,235.1 411,235.1 410,235.1 410,234.7 409,234.7 409,234.6 408,234.6 408,235.1 407,235.1 407,234.8 406,234.8 406,234.7 405,234.7 405,234.5 404,234.5 404,234.5 403,234.5 403,234.7 402,234.7 402,234.8 401,234.8 401,234.8 400,234.8 400,234.5 399,234.5 399,234.8 398,234.8 398,234.8 397,234.8 397,234.9 396,234.9 396,235.1 395,235.1 395,234.8 394,234.8 394,234.9 393,234.9 393,234.8 392,234.8 392,234.8 391,234.8 391,235.0 390,235.0 390,235.1 389,235.1 389,234.6 388,234.6 388,234.7 387,234.7 387,234.9 386,234.9 386,234.7 385,234.7 385,234.8 384,234.8 384,234.6 383,234.6 383,235.1 382,235.1 382,234.8 381,234.8 381,235.1 380,235.1 380,234.7 379,234.7 379,234.7 378,234.7 378,234.9 377,234.9 377,234.5 376,234.5 376,234.5 375,234.5 375,234.5 374,234.5 374,235.0 373,235.0 373,235.1 372,235.1 372,235.0 371,235.0 371,235.4 370,235.4 370,235.8 369,235.8 369,235.7 368,235.7 368,236.3 367,236.3 367,235.5 366,235.5 366,235.7 365,235.7 365,236.7 364,236.7 364,235.8 363,235.8 363,236.3 362,236.3 362,235.3 361,235.3 361,235.2 360,235.2 360,235.5 359,235.5 359,235.8 358,235.8 358,235.3 357,235.3 357,236.3 356,236.3 356,235.8 355,235.8 355,235.8 354,235.8 354,236.2 353,236.2 353,235.3 352,235.3 352,236.5 351,236.5 351,236.5 350,236.5 350,235.6 349,235.6 349,235.5 348,235.5 348,236.3 347,236.3 347,235.4 346,235.4 346,236.0 345,236.0 345,236.4 344,236.4 344,236.4 343,236.4 343,236.2 342,236.2 342,236.2 341,236.2 341,235.7 340,235.7 340,235.0 339,235.0 339,236.7 338,236.7 338,235.7 337,235.7 337,236.7 336,236.7 336,235.6 335,235.6 335,236.2 334,236.2 334,236.1 333,236.1 333,235.3 332,235.3 332,236.7 331,236.7 331,236.7 330,236.7 330,236.7 329,236.7 329,235.1 328,235.1 328,235.1 327,235.1 327,234.8 326,234.8 326,234.9 325,234.9 325,234.5 324,234.5 324,234.5 323,234.5 323,234.8 322,234.8 322,234.5 321,234.5 321,234.9 320,234.9 320,234.5 319,234.5 319,234.7 318,234.7 318,234.5 317,234.5 317,234.5 316,234.5 316,234.8 315,234.8 315,235.1 314,235.1 314,234.5 313,234.5 313,234.8 312,234.8 312,234.5 311,234.5 311,234.7 310,234.7 310,235.1 309,235.1 309,234.9 308,234.9 308,234.6 307,234.6 307,234.8 306,234.8 306,234.9 305,234.9 305,234.5 304,234.5 304,234.5 303,234.5 303,234.7 302,234.7 302,234.9 301,234.9 301,235.0 300,235.0 300,234.9 299,234.9 299,234.7 298,234.7 298,234.8 297,234.8 297,234.5 296,234.5 296,234.9 295,234.9 295,235.1 294,235.1 294,234.8 293,234.8 293,234.9 292,234.9 292,234.5 291,234.5 291,234.9 290,234.9 290,234.9 289,234.9 289,234.7 288,234.7 288,234.9 287,234.9 287,234.5 286,234.5 286,234.8 285,234.8 285,234.6 284,234.6 284,235.1 283,235.1 283,234.6 282,234.6 282,234.7 281,234.7 281,234.6 280,234.6 280,234.6 279,234.6 279,235.1 278,235.1 278,234.5 277,234.5 277,234.5 276,234.5 276,235.0 275,235.0 275,235.1 274,235.1 274,234.9 273,234.9 273,234.8 272,234.8 272,234.9 271,234.9 271,234.8 270,234.8 270,234.7 269,234.7 269,234.8 268,234.8 268,234.8 267,234.8 267,236.3 266,236.3 266,237.0 265,237.0 265,237.0 264,237.0 264,237.0 263,237.0 263,236.5 262,236.5 262,240.0 261,240.0 261,240.3 260,240.3 260,238.9 259,238.9 259,238.8 258,238.8 258,238.8 257,238.8 257,238.6 256,238.6 256,239.8 255,239.8 255,240.6 254,240.6 254,237.7 253,237.7 253,238.1 252,238.1 252,239.4 251,239.4 251,240.4 250,240.4 250,240.4 249,240.4 249,238.6 248,238.6 248,239.6 247,239.6 247,238.7 246,238.7 246,238.9 245,238.9 245,239.8 244,239.8 244,238.3 243,238.3 243,237.8 242,237.8 242,241.1 241,241.1 241,241.2 240,241.2 240,240.1 239,240.1 239,241.8 238,241.8 238,239.0 237,239.0 237,241.4 236,241.4 236,239.7 235,239.7 235,238.8 234,238.8 234,239.5 233,239.5 233,238.4 232,238.4 232,239.8 231,239.8 231,238.9 230,238.9 230,238.7 229,238.7 229,238.1 228,238.1 228,236.2 227,236.2 227,235.3 226,235.3 226,235.8 225,235.8 225,238.6 224,238.6 224,237.0 223,237.0 223,239.0 222,239.0 222,238.3 221,238.3 221,240.4 220,240.4 220,238.2 219,238.2 219,237.2 218,237.2 218,239.1 217,239.1 217,239.6 216,239.6 216,239.8 215,239.8 215,239.9 214,239.9 214,239.8 213,239.8 213,240.8 212,240.8 212,240.0 211,240.0 211,239.3 210,239.3 210,238.3 209,238.3 209,240.0 208,240.0 208,239.8 207,239.8 207,240.8 206,240.8 206,239.8 205,239.8 205,238.5 204,238.5 204,237.1 203,237.1 203,237.0 202,237.0 202,240.4 201,240.4 201,238.5 200,238.5 200,237.6 199,237.6 199,240.7 198,240.7 198,238.4 197,238.4 197,238.8 196,238.8 196,237.8 195,237.8 195,238.2 194,238.2 194,238.0 193,238.0 193,238.6 192,238.6 192,238.3 191,238.3 191,238.4 190,238.4 190,236.4 189,236.4 189,237.4 188,237.4 188,235.4 187,235.4 187,235.1 186,235.1 186,235.7 185,235.7 185,234.6 184,234.6 184,234.6 183,234.6 183,235.4 182,235.4 182,235.2 181,235.2 181,236.4 180,236.4 180,236.2 179,236.2 179,236.0 178,236.0 178,236.1 177,236.1 177,235.4 176,235.4 176,236.4 175,236.4 175,236.9 174,236.9 174,236.0 173,236.0 173,235.6 172,235.6 172,235.8 171,235.8 171,236.3 170,236.3 170,236.0 169,236.0 169,236.8 168,236.8 168,236.2 167,236.2 167,235.8 166,235.8 166,235.6 165,235.6 165,236.6 164,236.6 164,237.1 163,237.1 163,236.0 162,236.0 162,236.0 161,236.0 161,237.0 160,237.0 160,235.9 159,235.9 159,236.6 158,236.6 158,235.6 157,235.6 157,235.8 156,235.8 156,236.4 155,236.4 155,235.6 154,235.6 154,237.7 153,237.7 153,237.7 152,237.7 152,237.3 151,237.3 151,237.3 150,237.3 150,237.5 149,237.5 149,237.2 148,237.2 148,237.0 147,237.0 147,236.3 146,236.3 146,237.3 145,237.3 145,236.9 144,236.9 144,237.2 143,237.2 143,236.6 142,236.6 142,235.4 141,235.4 141,236.9 140,236.9 140,235.8 139,235.8 139,235.9 138,235.9 138,237.0 137,237.0 137,235.8 136,235.8 136,236.7 135,236.7 135,235.4 134,235.4 134,236.8 133,236.8 133,236.2 132,236.2" fill="#3232c8"/><polygon points="132,232.1 133,232.1 133,232.2 134,232.2 134,231.9 135,231.9 135,232.1 136,232.1 136,232.0 137,232.0 137,232.1 138,232.1 138,232.0 139,232.0 139,231.8 140,231.8 140,231.8 141,231.8 141,231.9 142,231.9 142,231.9 143,231.9 143,231.8 144,231.8 144,231.8 145,231.8 145,231.7 146,231.7 146,231.8 147,231.8 147,231.8 148,231.8 148,231.9 149,231.9 149,231.8 150,231.8 150,231.6 151,231.6 151,231.6 152,231.6 152,231.9 153,231.9 153,231.8 154,231.8 154,231.8 155,231.8 155,231.4 156,231.4 156,231.8 157,231.8 157,231.9 158,231.9 158,231.7 159,231.7 159,231.6 160,231.6 160,231.6 161,231.6 161,232.0 162,232.0 162,231.8 163,231.8 163,231.9 164,231.9 164,231.8 165,231.8 165,231.7 166,231.7 166,231.7 167,231.7 167,232.0 168,232.0 168,231.8 169,231.8 169,232.1 170,232.1 170,231.8 171,231.8 171,231.9 172,231.9 172,232.0 173,232.0 173,232.0 174,232.0 174,232.1 175,232.1 175,232.0 176,232.0 176,232.1 177,232.1 177,232.1 178,232.1 178,232.1 179,232.1 179,232.2 180,232.2 180,232.1 181,232.1 181,232.1 182,232.1 182,232.4 183,232.4 183,232.8 184,232.8 184,232.9 185,232.9 185,232.7 186,232.7 186,232.2 187,232.2 187,232.0 188,232.0 188,231.3 189,231.3 189,231.3 190,231.3 190,230.6 191,230.6 191,230.3 192,230.3 192,230.8 193,230.8 193,230.6 194,230.6 194,230.8 195,230.8 195,230.6 196,230.6 196,230.2 197,230.2 197,229.9 198,229.9 198,229.7 199,229.7 199,229.7 200,229.7 200,229.9 201,229.9 201,229.4 202,229.4 202,230.3 203,230.3 203,230.2 204,230.2 204,229.8 205,229.8 205,230.0 206,230.0 206,229.5 207,229.5 207,229.8 208,229.8 208,229.5 209,229.5 209,230.0 210,230.0 210,229.7 211,229.7 211,229.9 212,229.9 212,230.1 213,230.1 213,230.0 214,230.0 214,230.3 215,230.3 215,230.4 216,230.4 216,230.2 217,230.2 217,230.3 218,230.3 218,230.1 219,230.1 219,229.9 220,229.9 220,230.0 221,230.0 221,230.5 222,230.5 222,230.2 223,230.2 223,230.4 224,230.4 224,231.0 225,231.0 225,232.2 226,232.2 226,232.4 227,232.4 227,231.7 228,231.7 228,231.6 229,231.6 229,231.2 230,231.2 230,230.2 231,230.2 231,230.2 232,230.2 232,230.3 233,230.3 233,230.3 234,230.3 234,229.3 235,229.3 235,229.7 236,229.7 236,229.5 237,229.5 237,229.7 238,229.7 238,229.5 239,229.5 239,229.3 240,229.3 240,230.1 241,230.1 241,229.5 242,229.5 242,229.5 243,229.5 243,229.7 244,229.7 244,230.2 245,230.2 245,229.8 246,229.8 246,229.8 247,229.8 247,230.2 248,230.2 248,230.1 249,230.1 249,230.4 250,230.4 250,229.9 251,229.9 251,230.2 252,230.2 252,229.8 253,229.8 253,229.9 254,229.9 254,229.9 255,229.9 255,230.4 256,230.4 256,230.7 257,230.7 257,230.4 258,230.4 258,230.5 259,230.5 259,230.8 260,230.8 260,230.3 261,230.3 261,230.5 262,230.5 262,230.8 263,230.8 263,231.3 264,231.3 264,231.7 265,231.7 265,231.9 266,231.9 266,232.0 267,232.0 267,232.5 268,232.5 268,232.6 269,232.6 269,232.7 270,232.7 270,232.8 271,232.8 271,232.9 272,232.9 272,232.7 273,232.7 273,232.9 274,232.9 274,232.8 275,232.8 275,232.8 276,232.8 276,232.9 277,232.9 277,232.9 278,232.9 278,232.8 279,232.8 279,232.8 280,232.8 280,232.9 281,232.9 281,232.7 282,232.7 282,232.7 283,232.7 283,232.8 284,232.8 284,232.9 285,232.9 285,232.8 286,232.8 286,232.8 287,232.8 287,232.9 288,232.9 288,232.8 289,232.8 289,232.9 290,232.9 290,232.8 291,232.8 291,232.8 292,232.8 292,232.9 293,232.9 293,232.8 294,232.8 294,232.8 295,232.8 295,232.9 296,232.9 296,232.8 297,232.8 297,232.8 298,232.8 298,232.9 299,232.9 299,232.7 300,232.7 300,232.7 301,232.7 301,232.8 302,232.8 302,232.9 303,232.9 303,232.8 304,232.8 304,232.8 305,232.8 305,232.7 306,232.7 306,232.9 307,232.9 307,232.9 308,232.9 308,232.8 309,232.8 309,232.9 310,232.9 310,232.9 311,232.9 311,232.8 312,232.8 312,232.8 313,232.8 313,232.8 314,232.8 314,232.8 315,232.8 315,232.8 316,232.8 316,232.9 317,232.9 317,232.9 318,232.9 318,232.9 319,232.9 319,232.8 320,232.8 320,232.8 321,232.8 321,232.8 322,232.8 322,232.8 323,232.8 323,232.9 324,232.9 324,232.8 325,232.8 325,232.7 326,232.7 326,232.7 327,232.7 327,232.6 328,232.6 328,232.4 329,232.4 329,232.3 330,232.3 330,232.1 331,232.1 331,232.0 332,232.0 332,232.3 333,232.3 333,232.2 334,232.2 334,232.1 335,232.1 335,232.2 336,232.2 336,232.1 337,232.1 337,232.2 338,232.2 338,232.2 339,232.2 339,232.3 340,232.3 340,231.9 341,231.9 341,232.1 342,232.1 342,232.2 343,232.2 343,232.3 344,232.3 344,232.0 345,232.0 345,232.1 346,232.1 346,232.0 347,232.0 347,232.1 348,232.1 348,232.0 349,232.0 349,232.2 350,232.2 350,231.9 351,231.9 351,232.1 352,232.1 352,232.3 353,232.3 353,232.1 354,232.1 354,232.1 355,232.1 355,232.0 356,232.0 356,232.1 357,232.1 357,232.0 358,232.0 358,232.1 359,232.1 359,232.2 360,232.2 360,232.1 361,232.1 361,232.0 362,232.0 362,231.9 363,231.9 363,231.9 364,231.9 364,232.1 365,232.1 365,232.0 366,232.0 366,232.2 367,232.2 367,232.1 368,232.1 368,232.0 369,232.0 369,232.2 370,232.2 370,232.4 371,232.4 371,232.5 372,232.5 372,232.6 373,232.6 373,232.7 374,232.7 374,232.9 375,232.9 375,232.9 376,232.9 376,232.8 377,232.8 377,232.8 378,232.8 378,232.9 379,232.9 379,232.9 380,232.9 380,232.7 381,232.7 381,232.8 382,232.8 382,232.8 383,232.8 383,232.8 384,232.8 384,232.8 385,232.8 385,232.8 386,232.8 386,232.8 387,232.8 387,232.8 388,232.8 388,232.8 389,232.8 389,232.8 390,232.8 390,232.8 391,232.8 391,232.8 392,232.8 392,232.9 393,232.9 393,232.8 394,232.8 394,232.8 395,232.8 395,232.8 396,232.8 396,232.8 397,232.8 397,232.8 398,232.8 398,232.9 399,232.9 399,232.8 400,232.8 400,232.9 401,232.9 401,232.9 402,232.9 402,232.7 403,232.7 403,232.9 404,232.9 404,232.9 405,232.9 405,232.8 406,232.8 406,232.8 407,232.8 407,232.7 408,232.7 408,232.7 409,232.7 409,232.8 410,232.8 410,232.9 411,232.9 411,232.7 412,232.7 412,232.7 413,232.7 413,232.8 414,232.8 414,232.8 415,232.8 415,232.8 416,232.8 416,232.7 417,232.7 417,232.9 418,232.9 418,232.8 419,232.8 419,232.8 420,232.8 420,232.9 421,232.9 421,232.9 422,232.9 422,232.7 423,232.7 423,232.9 424,232.9 424,232.9 425,232.9 425,232.8 426,232.8 426,232.9 427,232.9 427,232.8 428,232.8 428,232.8 429,232.8 429,232.8 430,232.8 430,232.8 431,232.8 431,232.9 432,232.9 432,232.8 433,232.8 433,232.8 434,232.8 434,232.8 435,232.8 435,232.9 436,232.9 436,232.8 437,232.8 437,232.8 438,232.8 438,232.7 439,232.7 439,232.9 440,232.9 440,232.8 441,232.8 441,232.9 442,232.9 442,232.8 443,232.8 443,232.9 444,232.9 444,232.9 445,232.9 445,232.8 446,232.8 446,232.8 447,232.8 447,232.8 448,232.8 448,232.9 449,232.9 449,232.8 450,232.8 450,232.8 451,232.8 451,232.8 452,232.8 452,232.8 453,232.8 453,232.9 454,232.9 454,232.9 455,232.9 455,232.9 456,232.9 456,232.8 457,232.8 457,232.8 458,232.8 458,232.7 459,232.7 459,232.7 460,232.7 460,232.8 461,232.8 461,232.8 462,232.8 462,232.8 463,232.8 463,232.9 464,232.9 464,232.7 465,232.7 465,232.8 466,232.8 466,232.8 467,232.8 467,232.8 468,232.8 468,231.7 469,231.7 469,229.2 470,229.2 470,226.3 471,226.3 471,226.7 472,226.7 472,226.5 473,226.5 473,226.7 474,226.7 474,227.6 475,227.6 475,226.8 476,226.8 476,227.0 477,227.0 477,226.6 478,226.6 478,226.1 479,226.1 479,226.3 480,226.3 480,225.6 481,225.6 481,226.7 482,226.7 482,225.5 483,225.5 483,226.0 484,226.0 484,225.4 485,225.4 485,226.9 486,226.9 486,224.9 487,224.9 487,226.9 488,226.9 488,228.9 489,228.9 489,230.4 490,230.4 490,231.0 491,231.0 491,231.6 492,231.6 492,231.5 493,231.5 493,231.7 494,231.7 494,231.9 495,231.9 495,231.9 496,231.9 496,231.8 497,231.8 497,232.0 498,232.0 498,232.2 499,232.2 499,232.4 500,232.4 500,232.4 501,232.4 501,232.4 502,232.4 502,232.3 503,232.3 503,232.3 504,232.3 504,232.3 505,232.3 505,232.4 506,232.4 506,232.6 507,232.6 507,232.5 508,232.5 508,232.6 509,232.6 509,232.6 510,232.6 510,231.5 511,231.5 511,228.6 512,228.6 512,226.9 513,226.9 513,226.0 514,226.0 514,227.1 515,227.1 515,226.2 516,226.2 516,226.0 517,226.0 517,226.7 518,226.7 518,226.5 519,226.5 519,226.4 520,226.4 520,227.6 521,227.6 521,228.0 522,228.0 522,227.9 523,227.9 523,228.7 524,228.7 524,228.9 525,228.9 525,229.9 526,229.9 526,229.6 527,229.6 527,229.8 528,229.8 528,230.6 529,230.6 529,231.0 530,231.0 530,231.2 531,231.2 531,231.9 532,231.9 532,232.1 533,232.1 533,232.6 534,232.6 534,232.1 535,232.1 535,231.1 536,231.1 536,230.4 537,230.4 537,229.4 538,229.4 538,229.2 539,229.2 539,228.2 540,228.2 540,227.0 541,227.0 541,226.6 542,226.6 542,225.5 543,225.5 543,226.2 544,226.2 544,225.2 545,225.2 545,225.0 546,225.0 546,225.4 547,225.4 547,225.3 548,225.3 548,225.6 549,225.6 549,226.3 550,226.3 550,226.6 551,226.6 551,228.4 552,228.4 552,227.6 553,227.6 553,228.3 554,228.3 554,229.0 555,229.0 555,229.5 556,229.5 556,230.3 557,230.3 557,230.5 558,230.5 558,230.9 559,230.9 559,231.3 560,231.3 560,231.2 561,231.2 561,231.6 562,231.6 562,232.0 563,232.0 563,231.9 564,231.9 564,232.1 565,232.1 565,232.5 566,232.5 566,232.7 567,232.7 567,232.2 568,232.2 568,231.7 569,231.7 569,231.5 570,231.5 570,231.3 571,231.3 571,230.9 572,230.9 572,230.7 573,230.7 573,229.8 574,229.8 574,229.3 575,229.3 575,228.8 576,228.8 576,229.3 577,229.3 577,229.3 578,229.3 578,230.0 579,230.0 579,229.9 580,229.9 580,229.4 581,229.4 581,230.0 582,230.0 582,230.6 583,230.6 583,230.4 584,230.4 584,230.9 585,230.9 585,231.6 586,231.6 586,232.0 587,232.0 587,232.7 588,232.7 588,232.3 589,232.3 589,231.8 590,231.8 590,231.7 591,231.7 591,230.9 592,230.9 592,231.1 593,231.1 593,230.7 594,230.7 594,229.6 595,229.6 595,230.5 596,230.5 596,230.5 597,230.5 597,230.5 598,230.5 598,230.7 599,230.7 599,230.5 600,230.5 600,230.9 601,230.9 601,230.8 602,230.8 602,230.9 603,230.9 603,231.0 604,231.0 604,230.8 605,230.8 605,231.3 606,231.3 606,231.6 607,231.6 607,231.6 608,231.6 608,232.0 609,232.0 609,232.0 610,232.0 610,232.0 611,232.0 611,232.2 612,232.2 612,232.5 613,232.5 613,232.5 614,232.5 614,231.9 615,231.9 615,231.7 616,231.7 616,231.3 617,231.3 617,230.6 618,230.6 618,230.8 619,230.8 619,230.4 620,230.4 620,229.5 621,229.5 621,229.8 622,229.8 622,230.6 623,230.6 623,230.5 624,230.5 624,230.5 625,230.5 625,231.0 626,231.0 626,231.3 627,231.3 627,231.3 628,231.3 628,231.7 629,231.7 629,232.1 630,232.1 630,232.4 631,232.4 631,232.8 632,232.8 632,232.7 633,232.7 633,232.7 634,232.7 634,232.7 635,232.7 635,232.4 636,232.4 636,232.3 637,232.3 637,232.0 638,232.0 638,232.2 639,232.2 639,232.0 640,232.0 640,231.6 641,231.6 641,231.9 642,231.9 642,231.6 643,231.6 643,231.5 644,231.5 644,231.4 645,231.4 645,231.5 646,231.5 646,231.4 647,231.4 647,231.3 648,231.3 648,231.9 649,231.9 649,231.8 650,231.8 650,232.2 651,232.2 651,232.4 652,232.4 652,232.4 653,232.4 653,232.4 654,232.4 654,231.7 655,231.7 655,231.3 656,231.3 656,230.7 657,230.7 657,230.4 658,230.4 658,230.4 659,230.4 659,230.6 660,230.6 660,231.1 661,231.1 661,231.2 662,231.2 662,231.6 663,231.6 663,231.7 664,231.7 664,231.9 665,231.9 665,231.5 666,231.5 666,231.2 667,231.2 667,231.4 668,231.4 668,230.9 669,230.9 669,230.8 670,230.8 670,230.7 671,230.7 671,229.6 672,229.6 672,229.4 673,229.4 673,229.9 674,229.9 674,228.9 675,228.9 675,229.8 676,229.8 676,230.3 677,230.3 677,230.1 678,230.1 678,230.7 679,230.7 679,230.9 680,230.9 680,231.2 681,231.2 681,231.4 682,231.4 682,231.1 683,231.1 683,231.5 684,231.5 684,231.7 685,231.7 685,232.1 686,232.1 686,232.2 687,232.2 687,232.2 688,232.2 688,232.4 689,232.4 689,232.4 690,232.4 690,232.7 691,232.7 691,232.7 692,232.7 692,232.8 693,232.8 693,232.9 694,232.9 694,232.8 695,232.8 695,232.9 696,232.9 696,232.8 697,232.8 697,232.9 698,232.9 698,232.8 699,232.8 699,232.8 700,232.8 700,232.9 701,232.9 701,232.7 702,232.7 702,232.8 703,232.8 703,232.8 704,232.8 704,232.8 705,232.8 705,232.8 706,232.8 706,232.8 707,232.8 707,232.7 708,232.7 708,232.8 709,232.8 709,232.8 710,232.8 710,232.8 711,232.8 711,232.7 712,232.7 712,232.8 713,232.8 713,232.8 714,232.8 714,232.9 715,232.9 715,232.7 716,232.7 716,232.8 717,232.8 717,232.8 718,232.8 718,232.8 719,232.8 719,232.8 720,232.8 720,232.8 721,232.8 721,232.9 722,232.9 722,232.8 723,232.8 723,232.8 724,232.8 724,232.8 725,232.8 725,232.8 726,232.8 726,232.8 727,232.8 727,232.9 728,232.9 728,232.8 729,232.8 729,232.8 730,232.8 730,232.7 731,232.7 731,231.4 732,231.4 732,230.2 733,230.2 733,229.5 734,229.5 734,228.8 735,228.8 735,229.2 736,229.2 736,229.9 737,229.9 737,230.3 738,230.3 738,230.7 739,230.7 739,230.8 740,230.8 740,231.2 741,231.2 741,231.5 742,231.5 742,232.0 743,232.0 743,232.2 744,232.2 744,232.7 745,232.7 745,232.5 746,232.5 746,232.3 747,232.3 747,232.1 748,232.1 748,231.6 749,231.6 749,231.7 750,231.7 750,231.9 751,231.9 751,232.3 752,232.3 752,232.3 753,232.3 753,232.5 754,232.5 754,232.1 755,232.1 755,231.5 756,231.5 756,230.4 757,230.4 757,229.4 758,229.4 758,229.2 759,229.2 759,227.5 760,227.5 760,227.5 761,227.5 761,227.4 762,227.4 762,225.7 763,225.7 763,226.0 764,226.0 764,225.2 765,225.2 765,225.8 766,225.8 766,227.7 767,227.7 767,227.2 768,227.2 768,227.4 769,227.4 769,227.9 770,227.9 770,228.2 771,228.2 771,228.9 772,228.9 772,228.9 773,228.9 773,228.5 774,228.5 774,229.0 775,229.0 775,229.9 776,229.9 776,229.4 777,229.4 777,230.2 778,230.2 778,229.9 779,229.9 779,229.8 780,229.8 780,230.0 781,230.0 781,231.0 782,231.0 782,231.2 783,231.2 783,231.2 784,231.2 784,231.8 785,231.8 785,231.7 786,231.7 786,232.4 787,232.4 787,232.5 788,232.5 788,232.3 789,232.3 789,231.6 790,231.6 790,231.5 791,231.5 791,230.8 792,230.8 792,230.7 793,230.7 793,229.9 794,229.9 794,229.5 795,229.5 795,229.8 796,229.8 796,228.5 797,228.5 797,228.6 798,228.6 798,229.5 799,229.5 799,229.9 800,229.9 800,229.9 801,229.9 801,230.7 802,230.7 802,230.6 803,230.6 803,231.2 804,231.2 804,231.4 805,231.4 805,231.6 806,231.6 806,231.7 807,231.7 807,231.6 808,231.6 808,231.2 809,231.2 809,231.2 810,231.2 810,231.0 811,231.0 811,230.9 812,230.9 812,230.8 813,230.8 813,230.2 814,230.2 814,230.2 815,230.2 815,230.2 816,230.2 816,230.0 817,230.0 817,229.4 818,229.4 818,230.1 819,230.1 819,229.8 820,229.8 820,229.5 821,229.5 821,230.1 822,230.1 822,229.9 823,229.9 823,229.2 824,229.2 824,229.8 825,229.8 825,229.9 826,229.9 826,228.9 827,228.9 827,229.8 828,229.8 828,229.6 829,229.6 829,228.7 830,228.7 830,229.3 831,229.3 831,229.8 832,229.8 832,228.8 833,228.8 833,229.6 834,229.6 834,228.6 835,228.6 835,229.2 836,229.2 836,229.4 837,229.4 837,228.7 838,228.7 838,229.0 839,229.0 839,228.6 840,228.6 840,229.3 841,229.3 841,229.2 842,229.2 842,229.6 843,229.6 843,229.2 844,229.2 844,229.4 845,229.4 845,229.4 846,229.4 846,229.4 847,229.4 847,228.9 848,228.9 848,229.7 849,229.7 849,229.6 850,229.6 850,230.3 851,230.3 851,230.8 852,230.8 852,231.3 853,231.3 853,231.6 854,231.6 854,231.9 855,231.9 855,232.2 856,232.2 856,231.8 857,231.8 857,231.8 858,231.8 858,231.5 859,231.5 859,231.2 860,231.2 860,231.3 861,231.3 861,231.1 862,231.1 862,230.4 863,230.4 863,230.2 864,230.2 864,230.3 865,230.3 865,229.5 866,229.5 866,229.6 867,229.6 867,229.1 868,229.1 868,229.4 869,229.4 869,229.2 870,229.2 870,228.9 871,228.9 871,228.1 872,228.1 872,229.1 873,229.1 873,228.6 874,228.6 874,228.3 875,228.3 875,228.5 876,228.5 876,228.2 877,228.2 877,227.9 878,227.9 878,227.8 879,227.8 879,226.8 880,226.8 880,227.6 881,227.6 881,227.8 882,227.8 882,227.9 883,227.9 883,227.1 884,227.1 884,227.1 885,227.1 885,228.4 886,228.4 886,227.5 887,227.5 887,227.7 888,227.7 888,228.7 889,228.7 889,227.9 890,227.9 890,228.3 891,228.3 891,228.2 892,228.2 892,229.3 893,229.3 893,229.4 894,229.4 894,228.5 895,228.5 895,229.0 896,229.0 896,229.2 897,229.2 897,230.2 898,230.2 898,229.8 899,229.8 899,230.8 900,230.8 900,230.7 901,230.7 901,231.2 902,231.2 902,231.3 903,231.3 903,231.6 904,231.6 904,232.1 905,232.1 905,232.1 906,232.1 906,231.5 907,231.5 907,231.5 908,231.5 908,231.6 909,231.6 909,231.3 910,231.3 910,230.9 911,230.9 911,230.5 912,230.5 912,230.9 913,230.9 913,229.9 914,229.9 914,230.4 915,230.4 915,230.8 916,230.8 916,230.3 917,230.3 917,231.1 918,231.1 918,231.1 919,231.1 919,230.9 920,230.9 920,231.4 921,231.4 921,231.4 922,231.4 922,231.5 923,231.5 923,231.9 924,231.9 924,232.1 925,232.1 925,232.2 926,232.2 926,232.3 927,232.3 927,232.4 928,232.4 928,232.4 929,232.4 929,232.2 930,232.2 930,231.6 931,231.6 931,231.7 932,231.7 932,231.1 933,231.1 933,231.3 934,231.3 934,230.6 935,230.6 935,230.4 936,230.4 936,230.4 937,230.4 937,229.7 938,229.7 938,229.5 939,229.5 939,228.7 940,228.7 940,228.9 941,228.9 941,228.8 942,228.8 942,228.6 943,228.6 943,229.4 944,229.4 944,229.0 945,229.0 945,228.8 946,228.8 946,228.9 947,228.9 947,229.3 948,229.3 948,229.7 949,229.7 949,229.1 950,229.1 950,229.5 951,229.5 951,229.2 952,229.2 952,228.8 953,228.8 953,229.8 954,229.8 954,229.7 955,229.7 955,230.4 956,230.4 956,230.0 957,230.0 957,230.8 958,230.8 958,230.8 959,230.8 959,231.0 960,231.0 960,231.4 961,231.4 961,231.8 962,231.8 962,231.9 963,231.9 963,232.0 964,232.0 964,231.9 965,231.9 965,231.4 966,231.4 966,231.4 967,231.4 967,230.8 968,230.8 968,230.5 969,230.5 969,230.0 970,230.0 970,230.5 971,230.5 971,229.7 972,229.7 972,229.8 973,229.8 973,229.3 974,229.3 974,229.4 975,229.4 975,230.0 976,230.0 976,229.8 977,229.8 977,229.7 978,229.7 978,230.2 979,230.2 979,230.7 980,230.7 980,230.4 981,230.4 981,230.8 982,230.8 982,230.7 983,230.7 983,230.6 984,230.6 984,231.3 985,231.3 985,231.2 986,231.2 986,231.3 987,231.3 987,231.5 988,231.5 988,231.2 989,231.2 989,231.5 990,231.5 990,231.6 991,231.6 991,231.1 992,231.1 992,231.3 993,231.3 993,231.5 994,231.5 994,231.5 995,231.5 995,231.7 996,231.7 996,231.3 997,231.3 997,231.8 998,231.8 998,231.5 999,231.5 999,231.5 1000,231.5 1000,231.9 1001,231.9 1001,232.3 1002,232.3 1002,231.7 1003,231.7 1003,231.8 1004,231.8 1004,231.9 1005,231.9 1005,232.0 1006,232.0 1006,231.9 1007,231.9 1007,232.0 1008,232.0 1008,232.0 1009,232.0 1009,232.1 1010,232.1 1010,232.0 1011,232.0 1011,232.1 1012,232.1 1012,232.3 1013,232.3 1013,232.2 1014,232.2 1014,232.2 1015,232.2 1015,232.1 1016,232.1 1016,232.4 1017,232.4 1017,232.4 1018,232.4 1018,232.5 1019,232.5 1019,232.5 1020,232.5 1020,232.3 1021,232.3 1021,232.6 1022,232.6 1022,232.6 1023,232.6 1023,232.4 1024,232.4 1024,232.7 1025,232.7 1025,232.5 1026,232.5 1026,232.6 1027,232.6 1027,232.6 1028,232.6 1028,232.8 1029,232.8 1029,232.8 1030,232.8 1030,232.7 1031,232.7 1031,232.8 1032,232.8 1032,232.8 1033,232.8 1033,232.7 1034,232.7 1034,232.6 1035,232.6 1035,232.2 1036,232.2 1036,232.1 1037,232.1 1037,231.9 1038,231.9 1038,231.7 1039,231.7 1039,231.5 1040,231.5 1040,231.0 1041,231.0 1041,230.5 1042,230.5 1042,230.2 1043,230.2 1043,229.8 1044,229.8 1044,229.9 1045,229.9 1045,229.7 1046,229.7 1046,229.9 1047,229.9 1047,230.2 1048,230.2 1048,230.4 1049,230.4 1049,230.8 1050,230.8 1050,231.2 1051,231.2 1051,230.9 1052,230.9 1052,231.6 1053,231.6 1053,231.8 1054,231.8 1054,232.2 1055,232.2 1055,232.2 1056,232.2 1056,232.0 1057,232.0 1057,232.1 1058,232.1 1058,232.0 1059,232.0 1059,232.3 1060,232.3 1060,232.0 1061,232.0 1061,232.1 1062,232.1 1062,232.2 1063,232.2 1063,232.1 1064,232.1 1064,232.3 1065,232.3 1065,232.2 1066,232.2 1066,232.1 1067,232.1 1067,232.0 1068,232.0 1068,232.3 1069,232.3 1069,232.2 1070,232.2 1070,232.5 1071,232.5 1071,232.5 1072,232.5 1072,232.6 1073,232.6 1073,232.1 1074,232.1 1074,231.7 1075,231.7 1075,231.2 1076,231.2 1076,231.1 1077,231.1 1077,230.5 1078,230.5 1078,229.7 1079,229.7 1079,229.8 1080,229.8 1080,228.5 1081,228.5 1081,228.5 1082,228.5 1082,229.6 1083,229.6 1083,229.8 1084,229.8 1084,229.6 1085,229.6 1085,230.5 1086,230.5 1086,230.6 1087,230.6 1087,231.2 1088,231.2 1088,231.5 1089,231.5 1089,231.6 1090,231.6 1090,231.9 1091,231.9 1091,231.9 1092,231.9 1092,232.2 1093,232.2 1093,232.4 1094,232.4 1094,232.5 1095,232.5 1095,232.5 1096,232.5 1096,232.6 1097,232.6 1097,232.7 1098,232.7 1098,232.6 1099,232.6 1099,232.7 1100,232.7 1100,232.8 1101,232.8 1101,232.8 1102,232.8 1102,232.8 1103,232.8 1103,232.8 1104,232.8 1104,232.8 1105,232.8 1105,232.8 1106,232.8 1106,232.8 1107,232.8 1107,232.8 1108,232.8 1108,232.9 1109,232.9 1109,232.8 1110,232.8 1110,232.8 1111,232.8 1111,232.9 1112,232.9 1112,232.8 1113,232.8 1113,232.7 1114,232.7 1114,232.8 1115,232.8 1115,232.8 1116,232.8 1116,232.8 1117,232.8 1117,232.8 1118,232.8 1118,232.8 1119,232.8 1119,232.8 1120,232.8 1120,232.7 1121,232.7 1121,232.8 1122,232.8 1122,232.9 1123,232.9 1123,232.8 1124,232.8 1124,232.8 1125,232.8 1125,232.8 1126,232.8 1126,232.9 1127,232.9 1127,232.8 1128,232.8 1128,232.9 1129,232.9 1129,232.8 1130,232.8 1130,232.8 1131,232.8 1131,232.8 1132,232.8 1132,232.8 1133,232.8 1133,232.8 1134,232.8 1134,232.8 1135,232.8 1135,232.8 1136,232.8 1136,232.9 1137,232.9 1137,232.8 1138,232.8 1138,232.8 1139,232.8 1139,232.8 1140,232.8 1140,232.8 1141,232.8 1141,232.7 1142,232.7 1142,232.9 1143,232.9 1143,232.7 1144,232.7 1144,232.8 1145,232.8 1145,232.9 1146,232.9 1146,232.8 1147,232.8 1147,232.7 1148,232.7 1148,232.8 1149,232.8 1149,232.8 1150,232.8 1150,232.8 1151,232.8 1151,232.9 1152,232.9 1152,232.9 1153,232.9 1153,232.8 1154,232.8 1154,232.8 1155,232.8 1155,232.9 1156,232.9 1156,232.8 1157,232.8 1157,232.9 1158,232.9 1158,232.8 1159,232.8 1159,232.8 1160,232.8 1160,232.8 1161,232.8 1161,232.7 1162,232.7 1162,232.8 1163,232.8 1163,232.7 1164,232.7 1164,232.8 1165,232.8 1165,232.9 1166,232.9 1166,232.8 1167,232.8 1167,232.8 1168,232.8 1168,232.7 1169,232.7 1169,232.8 1170,232.8 1170,232.9 1171,232.9 1171,232.8 1172,232.8 1172,232.8 1173,232.8 1173,232.8 1174,232.8 1174,232.8 1175,232.8 1175,232.9 1176,232.9 1176,232.8 1177,232.8 1177,232.8 1178,232.8 1178,232.8 1179,232.8 1179,232.8 1180,232.8 1180,232.8 1181,232.8 1181,232.9 1182,232.9 1182,232.8 1183,232.8 1183,232.9 1184,232.9 1184,232.8 1185,232.8 1185,232.9 1186,232.9 1186,232.8 1187,232.8 1187,232.8 1188,232.8 1188,232.8 1189,232.8 1189,232.8 1190,232.8 1190,232.1 1191,232.1 1191,230.2 1192,230.2 1192,229.3 1193,229.3 1193,227.4 1194,227.4 1194,224.8 1195,224.8 1195,223.1 1196,223.1 1196,222.9 1197,222.9 1197,223.3 1198,223.3 1198,223.5 1199,223.5 1199,225.1 1200,225.1 1200,225.5 1201,225.5 1201,224.7 1202,224.7 1202,225.6 1203,225.6 1203,227.9 1204,227.9 1204,227.7 1205,227.7 1205,228.3 1206,228.3 1206,229.5 1207,229.5 1207,229.4 1208,229.4 1208,230.6 1209,230.6 1209,230.8 1210,230.8 1210,230.6 1211,230.6 1211,231.3 1212,231.3 1212,231.1 1213,231.1 1213,231.6 1214,231.6 1214,232.1 1215,232.1 1215,232.1 1216,232.1 1216,232.3 1217,232.3 1217,232.4 1218,232.4 1218,232.2 1219,232.2 1219,232.2 1220,232.2 1220,232.4 1221,232.4 1221,232.3 1222,232.3 1222,232.4 1223,232.4 1223,232.4 1224,232.4 1224,232.5 1225,232.5 1225,232.7 1226,232.7 1226,232.4 1227,232.4 1227,232.5 1228,232.5 1228,232.5 1229,232.5 1229,232.3 1230,232.3 1230,232.1 1231,232.1 1231,231.9 1232,231.9 1232,231.7 1233,231.7 1233,231.9 1234,231.9 1234,231.4 1235,231.4 1235,231.5 1236,231.5 1236,231.6 1237,231.6 1237,231.2 1238,231.2 1238,230.9 1239,230.9 1239,231.2 1240,231.2 1240,230.8 1241,230.8 1241,230.9 1242,230.9 1242,230.9 1243,230.9 1243,230.9 1244,230.9 1244,231.1 1245,231.1 1245,231.1 1246,231.1 1246,230.6 1247,230.6 1247,230.8 1248,230.8 1248,230.6 1249,230.6 1249,231.0 1250,231.0 1250,231.0 1251,231.0 1251,230.9 1252,230.9 1252,230.9 1253,230.9 1253,230.5 1254,230.5 1254,230.8 1255,230.8 1255,230.6 1256,230.6 1256,230.6 1257,230.6 1257,230.9 1258,230.9 1258,231.0 1259,231.0 1259,231.0 1260,231.0 1260,231.0 1261,231.0 1261,231.4 1262,231.4 1262,231.7 1263,231.7 1263,231.7 1264,231.7 1264,232.1 1265,232.1 1265,232.3 1266,232.3 1266,232.5 1267,232.5 1267,232.4 1268,232.4 1268,232.4 1269,232.4 1269,232.0 1270,232.0 1270,231.9 1271,231.9 1271,231.8 1272,231.8 1272,231.4 1273,231.4 1273,230.9 1274,230.9 1274,230.8 1275,230.8 1275,230.5 1276,230.5 1276,231.2 1277,231.2 1277,230.6 1278,230.6 1278,230.4 1279,230.4 1279,230.0 1280,230.0 1280,229.8 1281,229.8 1281,230.2 1282,230.2 1282,230.2 1283,230.2 1283,230.1 1284,230.1 1284,229.8 1285,229.8 1285,230.3 1286,230.3 1286,230.3 1287,230.3 1287,231.2 1288,231.2 1288,231.0 1289,231.0 1289,231.2 1290,231.2 1290,231.5 1291,231.5 1291,231.5 1292,231.5 1292,231.8 1293,231.8 1293,231.7 1294,231.7 1294,231.9 1295,231.9 1295,232.1 1296,232.1 1296,231.9 1297,231.9 1297,232.1 1298,232.1 1298,232.1 1299,232.1 1299,232.0 1300,232.0 1300,231.9 1301,231.9 1301,232.0 1302,232.0 1302,231.8 1303,231.8 1303,231.5 1304,231.5 1304,231.5 1305,231.5 1305,231.1 1306,231.1 1306,231.2 1307,231.2 1307,230.6 1308,230.6 1308,231.0 1309,231.0 1309,230.5 1310,230.5 1310,230.6 1311,230.6 1311,230.4 1312,230.4 1312,230.6 1313,230.6 1313,230.5 1314,230.5 1314,230.8 1315,230.8 1315,230.9 1316,230.9 1316,230.8 1317,230.8 1317,231.4 1318,231.4 1318,231.3 1319,231.3 1319,231.1 1320,231.1 1320,231.4 1321,231.4 1321,231.9 1322,231.9 1322,231.5 1323,231.5 1323,231.4 1324,231.4 1324,231.6 1325,231.6 1325,231.7 1326,231.7 1326,231.0 1327,231.0 1327,231.4 1328,231.4 1328,231.4 1329,231.4 1329,231.2 1330,231.2 1330,230.8 1331,230.8 1331,231.3 1332,231.3 1332,231.0 1333,231.0 1333,230.9 1334,230.9 1334,230.7 1335,230.7 1335,230.9 1336,230.9 1336,230.8 1337,230.8 1337,231.2 1338,231.2 1338,231.3 1339,231.3 1339,231.1 1340,231.1 1340,230.7 1341,230.7 1341,231.3 1342,231.3 1342,230.9 1343,230.9 1343,236.1 1342,236.1 1342,235.7 1341,235.7 1341,236.3 1340,236.3 1340,235.9 1339,235.9 1339,235.7 1338,235.7 1338,235.8 1337,235.8 1337,236.2 1336,236.2 1336,236.1 1335,236.1 1335,236.3 1334,236.3 1334,236.1 1333,236.1 1333,236.0 1332,236.0 1332,235.7 1331,235.7 1331,236.2 1330,236.2 1330,235.8 1329,235.8 1329,235.6 1328,235.6 1328,235.6 1327,235.6 1327,236.0 1326,236.0 1326,235.3 1325,235.3 1325,235.4 1324,235.4 1324,235.6 1323,235.6 1323,235.5 1322,235.5 1322,235.1 1321,235.1 1321,235.6 1320,235.6 1320,235.9 1319,235.9 1319,235.7 1318,235.7 1318,235.6 1317,235.6 1317,236.2 1316,236.2 1316,236.1 1315,236.1 1315,236.2 1314,236.2 1314,236.5 1313,236.5 1313,236.4 1312,236.4 1312,236.6 1311,236.6 1311,236.4 1310,236.4 1310,236.5 1309,236.5 1309,236.0 1308,236.0 1308,236.4 1307,236.4 1307,235.8 1306,235.8 1306,235.9 1305,235.9 1305,235.5 1304,235.5 1304,235.5 1303,235.5 1303,235.2 1302,235.2 1302,235.0 1301,235.0 1301,235.1 1300,235.1 1300,235.0 1299,235.0 1299,234.9 1298,234.9 1298,234.9 1297,234.9 1297,235.1 1296,235.1 1296,234.9 1295,234.9 1295,235.1 1294,235.1 1294,235.3 1293,235.3 1293,235.2 1292,235.2 1292,235.5 1291,235.5 1291,235.5 1290,235.5 1290,235.8 1289,235.8 1289,236.0 1288,236.0 1288,235.8 1287,235.8 1287,236.7 1286,236.7 1286,236.7 1285,236.7 1285,237.2 1284,237.2 1284,236.9 1283,236.9 1283,236.8 1282,236.8 1282,236.8 1281,236.8 1281,237.2 1280,237.2 1280,237.0 1279,237.0 1279,236.6 1278,236.6 1278,236.4 1277,236.4 1277,235.8 1276,235.8 1276,236.5 1275,236.5 1275,236.2 1274,236.2 1274,236.1 1273,236.1 1273,235.6 1272,235.6 1272,235.2 1271,235.2 1271,235.1 1270,235.1 1270,235.0 1269,235.0 1269,234.6 1268,234.6 1268,234.6 1267,234.6 1267,234.5 1266,234.5 1266,234.7 1265,234.7 1265,234.9 1264,234.9 1264,235.3 1263,235.3 1263,235.3 1262,235.3 1262,235.6 1261,235.6 1261,236.0 1260,236.0 1260,236.0 1259,236.0 1259,236.0 1258,236.0 1258,236.1 1257,236.1 1257,236.4 1256,236.4 1256,236.4 1255,236.4 1255,236.2 1254,236.2 1254,236.5 1253,236.5 1253,236.1 1252,236.1 1252,236.1 1251,236.1 1251,236.0 1250,236.0 1250,236.0 1249,236.0 1249,236.4 1248,236.4 1248,236.2 1247,236.2 1247,236.4 1246,236.4 1246,235.9 1245,235.9 1245,235.9 1244,235.9 1244,236.1 1243,236.1 1243,236.1 1242,236.1 1242,236.1 1241,236.1 1241,236.2 1240,236.2 1240,235.8 1239,235.8 1239,236.1 1238,236.1 1238,235.8 1237,235.8 1237,235.4 1236,235.4 1236,235.5 1235,235.5 1235,235.6 1234,235.6 1234,235.1 1233,235.1 1233,235.3 1232,235.3 1232,235.1 1231,235.1 1231,234.9 1230,234.9 1230,234.7 1229,234.7 1229,234.5 1228,234.5 1228,234.5 1227,234.5 1227,234.6 1226,234.6 1226,234.3 1225,234.3 1225,234.5 1224,234.5 1224,234.6 1223,234.6 1223,234.6 1222,234.6 1222,234.7 1221,234.7 1221,234.6 1220,234.6 1220,234.8 1219,234.8 1219,234.8 1218,234.8 1218,234.6 1217,234.6 1217,234.7 1216,234.7 1216,234.9 1215,234.9 1215,234.9 1214,234.9 1214,235.4 1213,235.4 1213,235.9 1212,235.9 1212,235.7 1211,235.7 1211,236.4 1210,236.4 1210,236.2 1209,236.2 1209,236.4 1208,236.4 1208,237.6 1207,237.6 1207,237.5 1206,237.5 1206,238.7 1205,238.7 1205,239.3 1204,239.3 1204,239.1 1203,239.1 1203,241.4 1202,241.4 1202,242.3 1201,242.3 1201,241.5 1200,241.5 1200,241.9 1199,241.9 1199,243.5 1198,243.5 1198,243.7 1197,243.7 1197,244.1 1196,244.1 1196,243.9 1195,243.9 1195,242.2 1194,242.2 1194,239.6 1193,239.6 1193,237.7 1192,237.7 1192,236.8 1191,236.8 1191,234.9 1190,234.9 1190,234.2 1189,234.2 1189,234.2 1188,234.2 1188,234.2 1187,234.2 1187,234.2 1186,234.2 1186,234.1 1185,234.1 1185,234.2 1184,234.2 1184,234.1 1183,234.1 1183,234.2 1182,234.2 1182,234.1 1181,234.1 1181,234.2 1180,234.2 1180,234.2 1179,234.2 1179,234.2 1178,234.2 1178,234.2 1177,234.2 1177,234.2 1176,234.2 1176,234.1 1175,234.1 1175,234.2 1174,234.2 1174,234.2 1173,234.2 1173,234.2 1172,234.2 1172,234.2 1171,234.2 1171,234.1 1170,234.1 1170,234.2 1169,234.2 1169,234.3 1168,234.3 1168,234.2 1167,234.2 1167,234.2 1166,234.2 1166,234.1 1165,234.1 1165,234.2 1164,234.2 1164,234.3 1163,234.3 1163,234.2 1162,234.2 1162,234.3 1161,234.3 1161,234.2 1160,234.2 1160,234.2 1159,234.2 1159,234.2 1158,234.2 1158,234.1 1157,234.1 1157,234.2 1156,234.2 1156,234.1 1155,234.1 1155,234.2 1154,234.2 1154,234.2 1153,234.2 1153,234.1 1152,234.1 1152,234.1 1151,234.1 1151,234.2 1150,234.2 1150,234.2 1149,234.2 1149,234.2 1148,234.2 1148,234.3 1147,234.3 1147,234.2 1146,234.2 1146,234.1 1145,234.1 1145,234.2 1144,234.2 1144,234.3 1143,234.3 1143,234.1 1142,234.1 1142,234.3 1141,234.3 1141,234.2 1140,234.2 1140,234.2 1139,234.2 1139,234.2 1138,234.2 1138,234.2 1137,234.2 1137,234.1 1136,234.1 1136,234.2 1135,234.2 1135,234.2 1134,234.2 1134,234.2 1133,234.2 1133,234.2 1132,234.2 1132,234.2 1131,234.2 1131,234.2 1130,234.2 1130,234.2 1129,234.2 1129,234.1 1128,234.1 1128,234.2 1127,234.2 1127,234.1 1126,234.1 1126,234.2 1125,234.2 1125,234.2 1124,234.2 1124,234.2 1123,234.2 1123,234.1 1122,234.1 1122,234.2 1121,234.2 1121,234.3 1120,234.3 1120,234.2 1119,234.2 1119,234.2 1118,234.2 1118,234.2 1117,234.2 1117,234.2 1116,234.2 1116,234.2 1115,234.2 1115,234.2 1114,234.2 1114,234.3 1113,234.3 1113,234.2 1112,234.2 1112,234.1 1111,234.1 1111,234.2 1110,234.2 1110,234.2 1109,234.2 1109,234.1 1108,234.1 1108,234.2 1107,234.2 1107,234.2 1106,234.2 1106,234.2 1105,234.2 1105,234.2 1104,234.2 1104,234.2 1103,234.2 1103,234.2 1102,234.2 1102,234.2 1101,234.2 1101,234.2 1100,234.2 1100,234.3 1099,234.3 1099,234.4 1098,234.4 1098,234.3 1097,234.3 1097,234.4 1096,234.4 1096,234.5 1095,234.5 1095,234.5 1094,234.5 1094,234.6 1093,234.6 1093,234.8 1092,234.8 1092,235.1 1091,235.1 1091,235.1 1090,235.1 1090,235.4 1089,235.4 1089,235.5 1088,235.5 1088,235.8 1087,235.8 1087,236.4 1086,236.4 1086,236.5 1085,236.5 1085,237.4 1084,237.4 1084,237.2 1083,237.2 1083,237.4 1082,237.4 1082,238.5 1081,238.5 1081,238.5 1080,238.5 1080,237.2 1079,237.2 1079,237.3 1078,237.3 1078,236.5 1077,236.5 1077,235.9 1076,235.9 1076,235.8 1075,235.8 1075,235.3 1074,235.3 1074,234.9 1073,234.9 1073,234.4 1072,234.4 1072,234.5 1071,234.5 1071,234.5 1070,234.5 1070,234.8 1069,234.8 1069,234.7 1068,234.7 1068,235.0 1067,235.0 1067,234.9 1066,234.9 1066,234.8 1065,234.8 1065,234.7 1064,234.7 1064,234.9 1063,234.9 1063,234.8 1062,234.8 1062,234.9 1061,234.9 1061,235.0 1060,235.0 1060,234.7 1059,234.7 1059,235.0 1058,235.0 1058,234.9 1057,234.9 1057,235.0 1056,235.0 1056,234.8 1055,234.8 1055,234.8 1054,234.8 1054,235.2 1053,235.2 1053,235.4 1052,235.4 1052,236.1 1051,236.1 1051,235.8 1050,235.8 1050,236.2 1049,236.2 1049,236.6 1048,236.6 1048,236.8 1047,236.8 1047,237.1 1046,237.1 1046,237.3 1045,237.3 1045,237.1 1044,237.1 1044,237.2 1043,237.2 1043,236.8 1042,236.8 1042,236.5 1041,236.5 1041,236.0 1040,236.0 1040,235.5 1039,235.5 1039,235.3 1038,235.3 1038,235.1 1037,235.1 1037,234.9 1036,234.9 1036,234.8 1035,234.8 1035,234.4 1034,234.4 1034,234.3 1033,234.3 1033,234.2 1032,234.2 1032,234.2 1031,234.2 1031,234.3 1030,234.3 1030,234.2 1029,234.2 1029,234.2 1028,234.2 1028,234.4 1027,234.4 1027,234.4 1026,234.4 1026,234.5 1025,234.5 1025,234.3 1024,234.3 1024,234.6 1023,234.6 1023,234.4 1022,234.4 1022,234.4 1021,234.4 1021,234.7 1020,234.7 1020,234.5 1019,234.5 1019,234.5 1018,234.5 1018,234.6 1017,234.6 1017,234.6 1016,234.6 1016,234.9 1015,234.9 1015,234.8 1014,234.8 1014,234.8 1013,234.8 1013,234.7 1012,234.7 1012,234.9 1011,234.9 1011,235.0 1010,235.0 1010,234.9 1009,234.9 1009,235.0 1008,235.0 1008,235.0 1007,235.0 1007,235.1 1006,235.1 1006,235.0 1005,235.0 1005,235.1 1004,235.1 1004,235.2 1003,235.2 1003,235.3 1002,235.3 1002,234.7 1001,234.7 1001,235.1 1000,235.1 1000,235.5 999,235.5 999,235.5 998,235.5 998,235.2 997,235.2 997,235.7 996,235.7 996,235.3 995,235.3 995,235.5 994,235.5 994,235.5 993,235.5 993,235.7 992,235.7 992,235.9 991,235.9 991,235.4 990,235.4 990,235.5 989,235.5 989,235.8 988,235.8 988,235.5 987,235.5 987,235.7 986,235.7 986,235.8 985,235.8 985,235.7 984,235.7 984,236.4 983,236.4 983,236.3 982,236.3 982,236.2 981,236.2 981,236.6 980,236.6 980,236.3 979,236.3 979,236.8 978,236.8 978,237.3 977,237.3 977,237.2 976,237.2 976,237.0 975,237.0 975,237.6 974,237.6 974,237.7 973,237.7 973,237.2 972,237.2 972,237.3 971,237.3 971,236.5 970,236.5 970,237.0 969,237.0 969,236.5 968,236.5 968,236.2 967,236.2 967,235.6 966,235.6 966,235.6 965,235.6 965,235.1 964,235.1 964,235.0 963,235.0 963,235.1 962,235.1 962,235.2 961,235.2 961,235.6 960,235.6 960,236.0 959,236.0 959,236.2 958,236.2 958,236.2 957,236.2 957,237.0 956,237.0 956,236.6 955,236.6 955,237.3 954,237.3 954,237.2 953,237.2 953,238.2 952,238.2 952,237.8 951,237.8 951,237.5 950,237.5 950,237.9 949,237.9 949,237.3 948,237.3 948,237.7 947,237.7 947,238.1 946,238.1 946,238.2 945,238.2 945,238.0 944,238.0 944,237.6 943,237.6 943,238.4 942,238.4 942,238.2 941,238.2 941,238.1 940,238.1 940,238.3 939,238.3 939,237.5 938,237.5 938,237.3 937,237.3 937,236.6 936,236.6 936,236.6 935,236.6 935,236.4 934,236.4 934,235.7 933,235.7 933,235.9 932,235.9 932,235.3 931,235.3 931,235.4 930,235.4 930,234.8 929,234.8 929,234.6 928,234.6 928,234.6 927,234.6 927,234.7 926,234.7 926,234.8 925,234.8 925,234.9 924,234.9 924,235.1 923,235.1 923,235.5 922,235.5 922,235.6 921,235.6 921,235.6 920,235.6 920,236.1 919,236.1 919,235.9 918,235.9 918,235.9 917,235.9 917,236.7 916,236.7 916,236.2 915,236.2 915,236.6 914,236.6 914,237.1 913,237.1 913,236.1 912,236.1 912,236.5 911,236.5 911,236.1 910,236.1 910,235.7 909,235.7 909,235.4 908,235.4 908,235.5 907,235.5 907,235.5 906,235.5 906,234.9 905,234.9 905,234.9 904,234.9 904,235.4 903,235.4 903,235.7 902,235.7 902,235.8 901,235.8 901,236.3 900,236.3 900,236.2 899,236.2 899,237.2 898,237.2 898,236.8 897,236.8 897,237.8 896,237.8 896,238.0 895,238.0 895,238.5 894,238.5 894,237.6 893,237.6 893,237.7 892,237.7 892,238.8 891,238.8 891,238.7 890,238.7 890,239.1 889,239.1 889,238.3 888,238.3 888,239.3 887,239.3 887,239.5 886,239.5 886,238.6 885,238.6 885,239.9 884,239.9 884,239.9 883,239.9 883,239.1 882,239.1 882,239.2 881,239.2 881,239.4 880,239.4 880,240.2 879,240.2 879,239.2 878,239.2 878,239.1 877,239.1 877,238.8 876,238.8 876,238.5 875,238.5 875,238.7 874,238.7 874,238.4 873,238.4 873,237.9 872,237.9 872,238.9 871,238.9 871,238.1 870,238.1 870,237.8 869,237.8 869,237.6 868,237.6 868,237.9 867,237.9 867,237.4 866,237.4 866,237.5 865,237.5 865,236.7 864,236.7 864,236.8 863,236.8 863,236.6 862,236.6 862,235.9 861,235.9 861,235.7 860,235.7 860,235.8 859,235.8 859,235.5 858,235.5 858,235.2 857,235.2 857,235.2 856,235.2 856,234.8 855,234.8 855,235.1 854,235.1 854,235.4 853,235.4 853,235.7 852,235.7 852,236.2 851,236.2 851,236.7 850,236.7 850,237.4 849,237.4 849,237.3 848,237.3 848,238.1 847,238.1 847,237.6 846,237.6 846,237.6 845,237.6 845,237.6 844,237.6 844,237.8 843,237.8 843,237.4 842,237.4 842,237.8 841,237.8 841,237.7 840,237.7 840,238.4 839,238.4 839,238.0 838,238.0 838,238.3 837,238.3 837,237.6 836,237.6 836,237.8 835,237.8 835,238.4 834,238.4 834,237.4 833,237.4 833,238.2 832,238.2 832,237.2 831,237.2 831,237.7 830,237.7 830,238.3 829,238.3 829,237.4 828,237.4 828,237.2 827,237.2 827,238.1 826,238.1 826,237.1 825,237.1 825,237.2 824,237.2 824,237.8 823,237.8 823,237.1 822,237.1 822,236.9 821,236.9 821,237.5 820,237.5 820,237.2 819,237.2 819,236.9 818,236.9 818,237.6 817,237.6 817,237.0 816,237.0 816,236.8 815,236.8 815,236.8 814,236.8 814,236.8 813,236.8 813,236.2 812,236.2 812,236.1 811,236.1 811,236.0 810,236.0 810,235.8 809,235.8 809,235.8 808,235.8 808,235.4 807,235.4 807,235.3 806,235.3 806,235.4 805,235.4 805,235.6 804,235.6 804,235.8 803,235.8 803,236.4 802,236.4 802,236.3 801,236.3 801,237.1 800,237.1 800,237.1 799,237.1 799,237.5 798,237.5 798,238.4 797,238.4 797,238.5 796,238.5 796,237.2 795,237.2 795,237.5 794,237.5 794,237.1 793,237.1 793,236.3 792,236.3 792,236.2 791,236.2 791,235.5 790,235.5 790,235.4 789,235.4 789,234.7 788,234.7 788,234.5 787,234.5 787,234.6 786,234.6 786,235.3 785,235.3 785,235.2 784,235.2 784,235.8 783,235.8 783,235.8 782,235.8 782,236.0 781,236.0 781,237.0 780,237.0 780,237.2 779,237.2 779,237.1 778,237.1 778,236.8 777,236.8 777,237.6 776,237.6 776,237.1 775,237.1 775,238.0 774,238.0 774,238.5 773,238.5 773,238.1 772,238.1 772,238.1 771,238.1 771,238.8 770,238.8 770,239.1 769,239.1 769,239.6 768,239.6 768,239.8 767,239.8 767,239.3 766,239.3 766,241.2 765,241.2 765,241.8 764,241.8 764,241.0 763,241.0 763,241.3 762,241.3 762,239.6 761,239.6 761,239.5 760,239.5 760,239.5 759,239.5 759,237.8 758,237.8 758,237.6 757,237.6 757,236.6 756,236.6 756,235.5 755,235.5 755,234.9 754,234.9 754,234.5 753,234.5 753,234.7 752,234.7 752,234.7 751,234.7 751,235.1 750,235.1 750,235.3 749,235.3 749,235.4 748,235.4 748,234.9 747,234.9 747,234.7 746,234.7 746,234.5 745,234.5 745,234.3 744,234.3 744,234.8 743,234.8 743,235.0 742,235.0 742,235.5 741,235.5 741,235.8 740,235.8 740,236.2 739,236.2 739,236.3 738,236.3 738,236.7 737,236.7 737,237.1 736,237.1 736,237.8 735,237.8 735,238.2 734,238.2 734,237.5 733,237.5 733,236.8 732,236.8 732,235.6 731,235.6 731,234.3 730,234.3 730,234.2 729,234.2 729,234.2 728,234.2 728,234.1 727,234.1 727,234.2 726,234.2 726,234.2 725,234.2 725,234.2 724,234.2 724,234.2 723,234.2 723,234.2 722,234.2 722,234.1 721,234.1 721,234.2 720,234.2 720,234.2 719,234.2 719,234.2 718,234.2 718,234.2 717,234.2 717,234.2 716,234.2 716,234.3 715,234.3 715,234.1 714,234.1 714,234.2 713,234.2 713,234.2 712,234.2 712,234.3 711,234.3 711,234.2 710,234.2 710,234.2 709,234.2 709,234.2 708,234.2 708,234.3 707,234.3 707,234.2 706,234.2 706,234.2 705,234.2 705,234.2 704,234.2 704,234.2 703,234.2 703,234.2 702,234.2 702,234.3 701,234.3 701,234.1 700,234.1 700,234.2 699,234.2 699,234.2 698,234.2 698,234.1 697,234.1 697,234.2 696,234.2 696,234.1 695,234.1 695,234.2 694,234.2 694,234.1 693,234.1 693,234.2 692,234.2 692,234.3 691,234.3 691,234.3 690,234.3 690,234.6 689,234.6 689,234.6 688,234.6 688,234.8 687,234.8 687,234.8 686,234.8 686,234.9 685,234.9 685,235.3 684,235.3 684,235.5 683,235.5 683,235.9 682,235.9 682,235.6 681,235.6 681,235.8 680,235.8 680,236.1 679,236.1 679,236.3 678,236.3 678,236.9 677,236.9 677,236.7 676,236.7 676,237.2 675,237.2 675,238.1 674,238.1 674,237.1 673,237.1 673,237.6 672,237.6 672,237.4 671,237.4 671,236.3 670,236.3 670,236.2 669,236.2 669,236.1 668,236.1 668,235.6 667,235.6 667,235.8 666,235.8 666,235.5 665,235.5 665,235.1 664,235.1 664,235.3 663,235.3 663,235.4 662,235.4 662,235.8 661,235.8 661,235.9 660,235.9 660,236.4 659,236.4 659,236.6 658,236.6 658,236.6 657,236.6 657,236.3 656,236.3 656,235.7 655,235.7 655,235.3 654,235.3 654,234.6 653,234.6 653,234.6 652,234.6 652,234.6 651,234.6 651,234.8 650,234.8 650,235.2 649,235.2 649,235.1 648,235.1 648,235.7 647,235.7 647,235.6 646,235.6 646,235.5 645,235.5 645,235.6 644,235.6 644,235.5 643,235.5 643,235.4 642,235.4 642,235.1 641,235.1 641,235.4 640,235.4 640,235.0 639,235.0 639,234.8 638,234.8 638,235.0 637,235.0 637,234.7 636,234.7 636,234.6 635,234.6 635,234.3 634,234.3 634,234.3 633,234.3 633,234.3 632,234.3 632,234.2 631,234.2 631,234.6 630,234.6 630,234.9 629,234.9 629,235.3 628,235.3 628,235.7 627,235.7 627,235.7 626,235.7 626,236.0 625,236.0 625,236.5 624,236.5 624,236.5 623,236.5 623,236.4 622,236.4 622,237.2 621,237.2 621,237.5 620,237.5 620,236.6 619,236.6 619,236.2 618,236.2 618,236.4 617,236.4 617,235.7 616,235.7 616,235.3 615,235.3 615,235.1 614,235.1 614,234.5 613,234.5 613,234.5 612,234.5 612,234.8 611,234.8 611,235.0 610,235.0 610,235.0 609,235.0 609,235.0 608,235.0 608,235.4 607,235.4 607,235.4 606,235.4 606,235.7 605,235.7 605,236.2 604,236.2 604,236.0 603,236.0 603,236.1 602,236.1 602,236.2 601,236.2 601,236.1 600,236.1 600,236.5 599,236.5 599,236.3 598,236.3 598,236.5 597,236.5 597,236.5 596,236.5 596,236.5 595,236.5 595,237.4 594,237.4 594,236.3 593,236.3 593,235.9 592,235.9 592,236.1 591,236.1 591,235.3 590,235.3 590,235.2 589,235.2 589,234.7 588,234.7 588,234.3 587,234.3 587,235.0 586,235.0 586,235.4 585,235.4 585,236.1 584,236.1 584,236.6 583,236.6 583,236.4 582,236.4 582,237.0 581,237.0 581,237.6 580,237.6 580,237.1 579,237.1 579,237.0 578,237.0 578,237.7 577,237.7 577,237.7 576,237.7 576,238.2 575,238.2 575,237.7 574,237.7 574,237.2 573,237.2 573,236.3 572,236.3 572,236.1 571,236.1 571,235.7 570,235.7 570,235.5 569,235.5 569,235.3 568,235.3 568,234.8 567,234.8 567,234.3 566,234.3 566,234.5 565,234.5 565,234.9 564,234.9 564,235.1 563,235.1 563,235.0 562,235.0 562,235.4 561,235.4 561,235.8 560,235.8 560,235.7 559,235.7 559,236.1 558,236.1 558,236.5 557,236.5 557,236.7 556,236.7 556,237.5 555,237.5 555,238.0 554,238.0 554,238.7 553,238.7 553,239.4 552,239.4 552,238.6 551,238.6 551,240.4 550,240.4 550,240.7 549,240.7 549,241.4 548,241.4 548,241.7 547,241.7 547,241.6 546,241.6 546,242.0 545,242.0 545,241.8 544,241.8 544,240.8 543,240.8 543,241.5 542,241.5 542,240.4 541,240.4 541,240.0 540,240.0 540,238.8 539,238.8 539,237.8 538,237.8 538,237.6 537,237.6 537,236.6 536,236.6 536,235.9 535,235.9 535,234.9 534,234.9 534,234.4 533,234.4 533,234.9 532,234.9 532,235.1 531,235.1 531,235.8 530,235.8 530,236.0 529,236.0 529,236.4 528,236.4 528,237.2 527,237.2 527,237.4 526,237.4 526,237.1 525,237.1 525,238.1 524,238.1 524,238.3 523,238.3 523,239.1 522,239.1 522,239.0 521,239.0 521,239.4 520,239.4 520,240.6 519,240.6 519,240.5 518,240.5 518,240.3 517,240.3 517,241.0 516,241.0 516,240.8 515,240.8 515,239.9 514,239.9 514,241.0 513,241.0 513,240.1 512,240.1 512,238.4 511,238.4 511,235.5 510,235.5 510,234.4 509,234.4 509,234.4 508,234.4 508,234.5 507,234.5 507,234.4 506,234.4 506,234.6 505,234.6 505,234.7 504,234.7 504,234.7 503,234.7 503,234.7 502,234.7 502,234.6 501,234.6 501,234.6 500,234.6 500,234.6 499,234.6 499,234.8 498,234.8 498,235.0 497,235.0 497,235.2 496,235.2 496,235.1 495,235.1 495,235.1 494,235.1 494,235.3 493,235.3 493,235.5 492,235.5 492,235.4 491,235.4 491,236.0 490,236.0 490,236.6 489,236.6 489,238.1 488,238.1 488,240.1 487,240.1 487,242.1 486,242.1 486,240.1 485,240.1 485,241.6 484,241.6 484,241.0 483,241.0 483,241.5 482,241.5 482,240.3 481,240.3 481,241.4 480,241.4 480,240.7 479,240.7 479,240.9 478,240.9 478,240.4 477,240.4 477,240.0 476,240.0 476,240.2 475,240.2 475,239.4 474,239.4 474,240.3 473,240.3 473,240.5 472,240.5 472,240.3 471,240.3 471,240.7 470,240.7 470,237.8 469,237.8 469,235.3 468,235.3 468,234.2 467,234.2 467,234.2 466,234.2 466,234.2 465,234.2 465,234.3 464,234.3 464,234.1 463,234.1 463,234.2 462,234.2 462,234.2 461,234.2 461,234.2 460,234.2 460,234.3 459,234.3 459,234.3 458,234.3 458,234.2 457,234.2 457,234.2 456,234.2 456,234.1 455,234.1 455,234.1 454,234.1 454,234.1 453,234.1 453,234.2 452,234.2 452,234.2 451,234.2 451,234.2 450,234.2 450,234.2 449,234.2 449,234.1 448,234.1 448,234.2 447,234.2 447,234.2 446,234.2 446,234.2 445,234.2 445,234.1 444,234.1 444,234.1 443,234.1 443,234.2 442,234.2 442,234.1 441,234.1 441,234.2 440,234.2 440,234.1 439,234.1 439,234.3 438,234.3 438,234.2 437,234.2 437,234.2 436,234.2 436,234.1 435,234.1 435,234.2 434,234.2 434,234.2 433,234.2 433,234.2 432,234.2 432,234.1 431,234.1 431,234.2 430,234.2 430,234.2 429,234.2 429,234.2 428,234.2 428,234.2 427,234.2 427,234.1 426,234.1 426,234.2 425,234.2 425,234.1 424,234.1 424,234.1 423,234.1 423,234.3 422,234.3 422,234.1 421,234.1 421,234.1 420,234.1 420,234.2 419,234.2 419,234.2 418,234.2 418,234.1 417,234.1 417,234.3 416,234.3 416,234.2 415,234.2 415,234.2 414,234.2 414,234.2 413,234.2 413,234.3 412,234.3 412,234.3 411,234.3 411,234.1 410,234.1 410,234.2 409,234.2 409,234.3 408,234.3 408,234.3 407,234.3 407,234.2 406,234.2 406,234.2 405,234.2 405,234.1 404,234.1 404,234.1 403,234.1 403,234.3 402,234.3 402,234.1 401,234.1 401,234.1 400,234.1 400,234.2 399,234.2 399,234.1 398,234.1 398,234.2 397,234.2 397,234.2 396,234.2 396,234.2 395,234.2 395,234.2 394,234.2 394,234.2 393,234.2 393,234.1 392,234.1 392,234.2 391,234.2 391,234.2 390,234.2 390,234.2 389,234.2 389,234.2 388,234.2 388,234.2 387,234.2 387,234.2 386,234.2 386,234.2 385,234.2 385,234.2 384,234.2 384,234.2 383,234.2 383,234.2 382,234.2 382,234.2 381,234.2 381,234.3 380,234.3 380,234.1 379,234.1 379,234.1 378,234.1 378,234.2 377,234.2 377,234.2 376,234.2 376,234.1 375,234.1 375,234.1 374,234.1 374,234.3 373,234.3 373,234.4 372,234.4 372,234.5 371,234.5 371,234.6 370,234.6 370,234.8 369,234.8 369,235.0 368,235.0 368,234.9 367,234.9 367,234.8 366,234.8 366,235.0 365,235.0 365,234.9 364,234.9 364,235.1 363,235.1 363,235.1 362,235.1 362,235.0 361,235.0 361,234.9 360,234.9 360,234.8 359,234.8 359,234.9 358,234.9 358,235.0 357,235.0 357,234.9 356,234.9 356,235.0 355,235.0 355,234.9 354,234.9 354,234.9 353,234.9 353,234.7 352,234.7 352,234.9 351,234.9 351,235.1 350,235.1 350,234.8 349,234.8 349,235.0 348,235.0 348,234.9 347,234.9 347,235.0 346,235.0 346,234.9 345,234.9 345,235.0 344,235.0 344,234.7 343,234.7 343,234.8 342,234.8 342,234.9 341,234.9 341,235.1 340,235.1 340,234.7 339,234.7 339,234.8 338,234.8 338,234.8 337,234.8 337,234.9 336,234.9 336,234.8 335,234.8 335,234.9 334,234.9 334,234.8 333,234.8 333,234.7 332,234.7 332,235.0 331,235.0 331,234.9 330,234.9 330,234.7 329,234.7 329,234.6 328,234.6 328,234.4 327,234.4 327,234.3 326,234.3 326,234.3 325,234.3 325,234.2 324,234.2 324,234.1 323,234.1 323,234.2 322,234.2 322,234.2 321,234.2 321,234.2 320,234.2 320,234.2 319,234.2 319,234.1 318,234.1 318,234.1 317,234.1 317,234.1 316,234.1 316,234.2 315,234.2 315,234.2 314,234.2 314,234.2 313,234.2 313,234.2 312,234.2 312,234.2 311,234.2 311,234.1 310,234.1 310,234.1 309,234.1 309,234.2 308,234.2 308,234.1 307,234.1 307,234.1 306,234.1 306,234.3 305,234.3 305,234.2 304,234.2 304,234.2 303,234.2 303,234.1 302,234.1 302,234.2 301,234.2 301,234.3 300,234.3 300,234.3 299,234.3 299,234.1 298,234.1 298,234.2 297,234.2 297,234.2 296,234.2 296,234.1 295,234.1 295,234.2 294,234.2 294,234.2 293,234.2 293,234.1 292,234.1 292,234.2 291,234.2 291,234.2 290,234.2 290,234.1 289,234.1 289,234.2 288,234.2 288,234.1 287,234.1 287,234.2 286,234.2 286,234.2 285,234.2 285,234.1 284,234.1 284,234.2 283,234.2 283,234.3 282,234.3 282,234.3 281,234.3 281,234.1 280,234.1 280,234.2 279,234.2 279,234.2 278,234.2 278,234.1 277,234.1 277,234.1 276,234.1 276,234.2 275,234.2 275,234.2 274,234.2 274,234.1 273,234.1 273,234.3 272,234.3 272,234.1 271,234.1 271,234.2 270,234.2 270,234.3 269,234.3 269,234.4 268,234.4 268,234.5 267,234.5 267,235.0 266,235.0 266,235.1 265,235.1 265,235.3 264,235.3 264,235.7 263,235.7 263,236.2 262,236.2 262,236.5 261,236.5 261,236.7 260,236.7 260,236.2 259,236.2 259,236.5 258,236.5 258,236.6 257,236.6 257,236.3 256,236.3 256,236.6 255,236.6 255,237.1 254,237.1 254,237.1 253,237.1 253,237.2 252,237.2 252,236.8 251,236.8 251,237.1 250,237.1 250,236.6 249,236.6 249,236.9 248,236.9 248,236.8 247,236.8 247,237.2 246,237.2 246,237.2 245,237.2 245,236.8 244,236.8 244,237.3 243,237.3 243,237.5 242,237.5 242,237.5 241,237.5 241,236.9 240,236.9 240,237.7 239,237.7 239,237.5 238,237.5 238,237.3 237,237.3 237,237.5 236,237.5 236,237.3 235,237.3 235,237.7 234,237.7 234,236.7 233,236.7 233,236.7 232,236.7 232,236.8 231,236.8 231,236.8 230,236.8 230,235.8 229,235.8 229,235.4 228,235.4 228,235.3 227,235.3 227,234.6 226,234.6 226,234.8 225,234.8 225,236.0 224,236.0 224,236.6 223,236.6 223,236.8 222,236.8 222,236.5 221,236.5 221,237.0 220,237.0 220,237.1 219,237.1 219,236.9 218,236.9 218,236.7 217,236.7 217,236.8 216,236.8 216,236.6 215,236.6 215,236.7 214,236.7 214,237.0 213,237.0 213,236.9 212,236.9 212,237.1 211,237.1 211,237.3 210,237.3 210,237.0 209,237.0 209,237.5 208,237.5 208,237.2 207,237.2 207,237.5 206,237.5 206,237.0 205,237.0 205,237.2 204,237.2 204,236.8 203,236.8 203,236.7 202,236.7 202,237.6 201,237.6 201,237.1 200,237.1 200,237.3 199,237.3 199,237.3 198,237.3 198,237.1 197,237.1 197,236.8 196,236.8 196,236.4 195,236.4 195,236.2 194,236.2 194,236.4 193,236.4 193,236.2 192,236.2 192,236.7 191,236.7 191,236.4 190,236.4 190,235.7 189,235.7 189,235.7 188,235.7 188,235.0 187,235.0 187,234.8 186,234.8 186,234.3 185,234.3 185,234.1 184,234.1 184,234.2 183,234.2 183,234.6 182,234.6 182,234.9 181,234.9 181,234.9 180,234.9 180,234.8 179,234.8 179,234.9 178,234.9 178,234.9 177,234.9 177,234.9 176,234.9 176,235.0 175,235.0 175,234.9 174,234.9 174,235.0 173,235.0 173,235.0 172,235.0 172,235.1 171,235.1 171,235.2 170,235.2 170,234.9 169,234.9 169,235.2 168,235.2 168,235.0 167,235.0 167,235.3 166,235.3 166,235.3 165,235.3 165,235.2 164,235.2 164,235.1 163,235.1 163,235.2 162,235.2 162,235.0 161,235.0 161,235.4 160,235.4 160,235.4 159,235.4 159,235.3 158,235.3 158,235.1 157,235.1 157,235.2 156,235.2 156,235.6 155,235.6 155,235.2 154,235.2 154,235.2 153,235.2 153,235.1 152,235.1 152,235.4 151,235.4 151,235.4 150,235.4 150,235.2 149,235.2 149,235.1 148,235.1 148,235.2 147,235.2 147,235.2 146,235.2 146,235.3 145,235.3 145,235.2 144,235.2 144,235.2 143,235.2 143,235.1 142,235.1 142,235.1 141,235.1 141,235.2 140,235.2 140,235.2 139,235.2 139,235.0 138,235.0 138,234.9 137,234.9 137,235.0 136,235.0 136,234.9 135,234.9 135,235.1 134,235.1 134,234.8 133,234.8 133,234.9 132,234.9" fill="#6464dc"/></svg>
<div style="left:1349px;top:135px;width:17px;height:475px;background:linear-gradient(90deg,#e8e8e8,#f4f4f4 40%,#eeeeee)"></div>
<div style="left:1350px;top:136px;width:15px;height:16px;border:1px solid #a8a8a8;border-radius:2px;background:linear-gradient(90deg,#f8f8f8,#e8e8e8 50%,#d8d8d8 51%,#e2e2e2)"></div>
<svg style="left:1350px;top:137px" width="16" height="14"><path d="M4,8 L8,4 L12,8 z" fill="#505050"/></svg>
<div style="left:1350px;top:594px;width:15px;height:16px;border:1px solid #a8a8a8;border-radius:2px;background:linear-gradient(90deg,#f8f8f8,#e8e8e8 50%,#d8d8d8 51%,#e2e2e2)"></div>
<svg style="left:1350px;top:595px" width="16" height="14"><path d="M4,5 L12,5 L8,9 z" fill="#505050"/></svg>
<div style="left:1350px;top:243px;width:15px;height:327px;border:1px solid #3c5a78;border-radius:2px;background:linear-gradient(90deg,#e6f6fc 0,#d8f0fa 40%,#a8daf2 45%,#a6d6ee 90%,#c8e6f4 100%)"></div>
<div style="left:1354px;top:403px;width:6px;height:1px;background:#3a6a88"></div>
<div style="left:1354px;top:406px;width:6px;height:1px;background:#3a6a88"></div>
<div style="left:1354px;top:409px;width:6px;height:1px;background:#3a6a88"></div>
<div style="left:0px;top:610px;width:1366px;height:18px;background:#f0f0f0"></div>
<div style="left:131px;top:611px;width:1218px;height:17px;background:linear-gradient(#e6e6e6,#f2f2f2 30%,#f0f0f0 70%,#e8e8e8)"></div>
<svg style="left:136px;top:612px" width="16" height="14"><path d="M10,3 L5,7 L10,11 z" fill="#303030"/></svg>
<svg style="left:1332px;top:612px" width="16" height="14"><path d="M5,3 L10,7 L5,11 z" fill="#303030"/></svg>
<div style="left:301px;top:611px;width:766px;height:16px;border:1px solid #9a9a9a;border-radius:2px;background:linear-gradient(#fafafa 0,#f0f0f0 45%,#dcdcdc 50%,#d4d4d4 100%)"></div>
<div style="left:681px;top:615px;width:1px;height:6px;background:#555"></div>
<div style="left:683px;top:615px;width:1px;height:6px;background:#555"></div>
<div style="left:685px;top:615px;width:1px;height:6px;background:#555"></div>
<div style="left:0px;top:628px;width:1366px;height:1px;background:#a0a0a0"></div>
<div style="left:0px;top:629px;width:10px;height:56px;border-left:1px solid #a0a0a0;border-right:1px solid #a0a0a0;box-sizing:border-box;background:#f0f0f0"></div>
<div style="left:3px;top:634px;width:5px;height:1px;background:#8c8c8c"></div>
<div style="left:3px;top:638px;width:5px;height:1px;background:#8c8c8c"></div>
<div style="left:3px;top:642px;width:5px;height:1px;background:#8c8c8c"></div>
<div style="left:3px;top:646px;width:5px;height:1px;background:#8c8c8c"></div>
<div style="left:3px;top:650px;width:5px;height:1px;background:#8c8c8c"></div>
<div style="left:3px;top:654px;width:5px;height:1px;background:#8c8c8c"></div>
<div style="left:3px;top:658px;width:5px;height:1px;background:#8c8c8c"></div>
<div style="left:3px;top:662px;width:5px;height:1px;background:#8c8c8c"></div>
<div style="left:3px;top:666px;width:5px;height:1px;background:#8c8c8c"></div>
<div style="left:3px;top:670px;width:5px;height:1px;background:#8c8c8c"></div>
<div style="left:3px;top:674px;width:5px;height:1px;background:#8c8c8c"></div>
<div style="left:3px;top:678px;width:5px;height:1px;background:#8c8c8c"></div>
<div class="t" style="left:12.00px;top:636.34px;font-size:12px;color:#000;transform:scaleX(0.9879);">Projektfrequenz (Hz):</div>
<div style="left:12px;top:653px;width:80px;height:23px;background:#fff;border:1px solid #dadada;border-radius:2px"></div>
<div class="t" style="left:18.00px;top:658.34px;font-size:12px;color:#000;transform:scaleX(1.0189);">44100</div>
<svg style="left:78px;top:661px" width="10" height="6"><path d="M0.5,0.5 H8.5 L4.5,4.5 z" fill="#000"/></svg>
<div style="left:131px;top:651px;width:1px;height:26px;background:#a0a0a0"></div>
<div class="t" style="left:138.00px;top:636.34px;font-size:12px;color:#000;transform:scaleX(1.0179);">Einrasten:</div>
<div style="left:138px;top:653px;width:81px;height:23px;border:1px solid #7a7a7a;border-radius:3px;background:linear-gradient(#f4f4f4 0,#ededed 45%,#dddddd 55%,#d6d6d6 100%)"></div>
<div class="t" style="left:141.50px;top:658.84px;font-size:12px;color:#000;">Aus</div>
<svg style="left:207px;top:663.0px" width="9" height="6"><path d="M0,0 H7.5 L3.75,4 z" fill="#000"/></svg>
<div class="t" style="left:225.00px;top:636.34px;font-size:12px;color:#000;transform:scaleX(0.9993);">Anfang der Auswahl:</div>
<div style="left:225.2px;top:653px;width:146.8px;height:21px;background:#c4c4c4;border:1px solid #707070;border-top:2px solid #6a6a6a;border-left:2px solid #6a6a6a;border-right:1px solid #fcfcfc;border-bottom:1px solid #fcfcfc"></div>
<div style="left:362px;top:655px;width:9px;height:17px;background:#c8c8c8;border-left:1px solid #fff;border-top:1px solid #fff"></div>
<svg style="left:363px;top:662px" width="9" height="6"><path d="M0.5,0.5 H7.5 L4,4.5 z" fill="#000"/></svg>
<div class="t" style="left:229.13px;top:656.95px;font-size:14px;color:#1e1ea0;transform:scaleX(0.8400);">0</div>
<div class="t" style="left:239.43px;top:656.95px;font-size:14px;color:#1e1ea0;transform:scaleX(0.8400);">0</div>
<div class="t" style="left:251.13px;top:656.95px;font-size:14px;color:#000;transform:scaleX(0.8400);">h</div>
<div class="t" style="left:261.93px;top:656.95px;font-size:14px;color:#1e1ea0;transform:scaleX(0.8400);">0</div>
<div class="t" style="left:272.13px;top:656.95px;font-size:14px;color:#1e1ea0;transform:scaleX(0.8400);">0</div>
<div class="t" style="left:284.40px;top:656.95px;font-size:14px;color:#000;transform:scaleX(0.8400);">m</div>
<div class="t" style="left:299.13px;top:656.95px;font-size:14px;color:#1e1ea0;transform:scaleX(0.8400);">0</div>
<div class="t" style="left:309.33px;top:656.95px;font-size:14px;color:#1e1ea0;transform:scaleX(0.8400);">6</div>
<div class="t" style="left:317.46px;top:656.95px;font-size:14px;color:#1e1ea0;">.</div>
<div class="t" style="left:321.83px;top:656.95px;font-size:14px;color:#1e1ea0;transform:scaleX(0.8400);">4</div>
<div class="t" style="left:331.93px;top:656.95px;font-size:14px;color:#1e1ea0;transform:scaleX(0.8400);">4</div>
<div class="t" style="left:341.83px;top:656.95px;font-size:14px;color:#1e1ea0;transform:scaleX(0.8400);">4</div>
<div class="t" style="left:354.26px;top:656.95px;font-size:14px;color:#000;transform:scaleX(0.8400);">s</div>
<svg style="left:377px;top:635px" width="14" height="14"><circle cx="7.5" cy="7" r="5.5" fill="#e8e8e8" stroke="#7a7a7a" stroke-width="1"/><circle cx="7.5" cy="7" r="3" fill="#2a7ab8"/></svg>
<div class="t" style="left:395.00px;top:636.84px;font-size:12px;color:#000;transform:scaleX(1.0347);">Ende</div>
<svg style="left:432px;top:635px" width="14" height="14"><circle cx="7.5" cy="7" r="5.5" fill="#ececec" stroke="#8a8a8a" stroke-width="1"/></svg>
<div class="t" style="left:450.00px;top:636.84px;font-size:12px;color:#000;transform:scaleX(1.0488);">Länge</div>
<div style="left:379.2px;top:653px;width:145.8px;height:21px;background:#c4c4c4;border:1px solid #707070;border-top:2px solid #6a6a6a;border-left:2px solid #6a6a6a;border-right:1px solid #fcfcfc;border-bottom:1px solid #fcfcfc"></div>
<div style="left:515px;top:655px;width:9px;height:17px;background:#c8c8c8;border-left:1px solid #fff;border-top:1px solid #fff"></div>
<svg style="left:516px;top:662px" width="9" height="6"><path d="M0.5,0.5 H7.5 L4,4.5 z" fill="#000"/></svg>
<div class="t" style="left:383.13px;top:656.95px;font-size:14px;color:#1e1ea0;transform:scaleX(0.8400);">0</div>
<div class="t" style="left:393.43px;top:656.95px;font-size:14px;color:#1e1ea0;transform:scaleX(0.8400);">0</div>
<div class="t" style="left:405.13px;top:656.95px;font-size:14px;color:#000;transform:scaleX(0.8400);">h</div>
<div class="t" style="left:415.93px;top:656.95px;font-size:14px;color:#1e1ea0;transform:scaleX(0.8400);">0</div>
<div class="t" style="left:426.13px;top:656.95px;font-size:14px;color:#1e1ea0;transform:scaleX(0.8400);">0</div>
<div class="t" style="left:438.40px;top:656.95px;font-size:14px;color:#000;transform:scaleX(0.8400);">m</div>
<div class="t" style="left:453.13px;top:656.95px;font-size:14px;color:#1e1ea0;transform:scaleX(0.8400);">1</div>
<div class="t" style="left:463.33px;top:656.95px;font-size:14px;color:#1e1ea0;transform:scaleX(0.8400);">4</div>
<div class="t" style="left:471.46px;top:656.95px;font-size:14px;color:#1e1ea0;">.</div>
<div class="t" style="left:475.83px;top:656.95px;font-size:14px;color:#1e1ea0;transform:scaleX(0.8400);">4</div>
<div class="t" style="left:485.93px;top:656.95px;font-size:14px;color:#1e1ea0;transform:scaleX(0.8400);">8</div>
<div class="t" style="left:495.83px;top:656.95px;font-size:14px;color:#1e1ea0;transform:scaleX(0.8400);">9</div>
<div class="t" style="left:508.26px;top:656.95px;font-size:14px;color:#000;transform:scaleX(0.8400);">s</div>
<div style="left:533px;top:651px;width:1px;height:26px;background:#a0a0a0"></div>
<div class="t" style="left:540.00px;top:636.34px;font-size:12px;color:#000;transform:scaleX(1.0214);">Audioposition:</div>
<div style="left:540.4px;top:653px;width:145.60000000000002px;height:21px;background:#c4c4c4;border:1px solid #707070;border-top:2px solid #6a6a6a;border-left:2px solid #6a6a6a;border-right:1px solid #fcfcfc;border-bottom:1px solid #fcfcfc"></div>
<div style="left:676px;top:655px;width:9px;height:17px;background:#c8c8c8;border-left:1px solid #fff;border-top:1px solid #fff"></div>
<svg style="left:677px;top:662px" width="9" height="6"><path d="M0.5,0.5 H7.5 L4,4.5 z" fill="#000"/></svg>
<div class="t" style="left:544.33px;top:656.95px;font-size:14px;color:#1e1ea0;transform:scaleX(0.8400);">0</div>
<div class="t" style="left:554.63px;top:656.95px;font-size:14px;color:#1e1ea0;transform:scaleX(0.8400);">0</div>
<div class="t" style="left:566.33px;top:656.95px;font-size:14px;color:#000;transform:scaleX(0.8400);">h</div>
<div class="t" style="left:577.13px;top:656.95px;font-size:14px;color:#1e1ea0;transform:scaleX(0.8400);">0</div>
<div class="t" style="left:587.33px;top:656.95px;font-size:14px;color:#1e1ea0;transform:scaleX(0.8400);">0</div>
<div class="t" style="left:599.60px;top:656.95px;font-size:14px;color:#000;transform:scaleX(0.8400);">m</div>
<div class="t" style="left:614.33px;top:656.95px;font-size:14px;color:#1e1ea0;transform:scaleX(0.8400);">0</div>
<div class="t" style="left:624.53px;top:656.95px;font-size:14px;color:#1e1ea0;transform:scaleX(0.8400);">0</div>
<div class="t" style="left:632.66px;top:656.95px;font-size:14px;color:#1e1ea0;">.</div>
<div class="t" style="left:637.03px;top:656.95px;font-size:14px;color:#1e1ea0;transform:scaleX(0.8400);">0</div>
<div class="t" style="left:647.13px;top:656.95px;font-size:14px;color:#1e1ea0;transform:scaleX(0.8400);">0</div>
<div class="t" style="left:657.03px;top:656.95px;font-size:14px;color:#1e1ea0;transform:scaleX(0.8400);">0</div>
<div class="t" style="left:669.46px;top:656.95px;font-size:14px;color:#000;transform:scaleX(0.8400);">s</div>
<div style="left:0px;top:684px;width:1366px;height:2px;background:#a0a0a0"></div>
<div style="left:0px;top:686px;width:1366px;height:22px;background:#fff"></div>
<div style="left:1px;top:687px;width:1364px;height:19.5px;background:#f0eeee"></div>
<div style="left:9px;top:687px;width:1px;height:19.5px;background:#d4d0d0"></div>
<div style="left:204px;top:687px;width:1px;height:19.5px;background:#d4d0d0"></div>
<div style="left:1179px;top:687px;width:1px;height:19.5px;background:#d4d0d0"></div>
<div class="t" style="left:14.00px;top:691.84px;font-size:12px;color:#000;transform:scaleX(1.0166);">Aufnahme.</div>
<div class="t" style="left:209.00px;top:691.84px;font-size:12px;color:#000;transform:scaleX(1.0009);">Click and drag to select audio, Ctrl-Click to scrub, Ctrl-Double-Click to scroll-scrub, Ctrl-drag to seek</div>
<div class="t" style="left:1184.00px;top:691.84px;font-size:12px;color:#000;transform:scaleX(0.9657);">Aktueller Wert 44100</div>
<div style="left:569px;top:29px;width:202px;height:16px;background:#fff;border:1px solid #767676"></div>
<div class="t" style="left:573.00px;top:31.69px;font-size:11px;color:#000;transform:scaleX(0.9854);">Klicken, um die Überwachung zu starten</div>
</body></html>
